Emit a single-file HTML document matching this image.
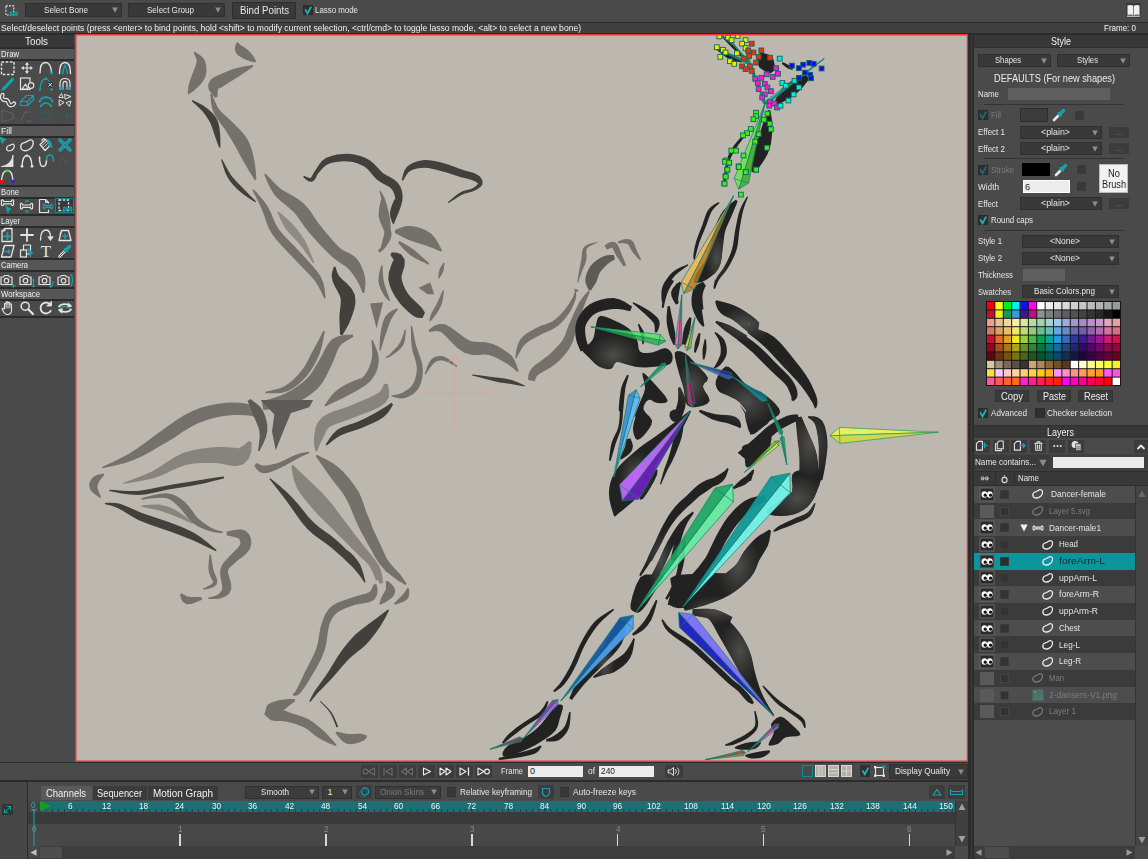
<!DOCTYPE html><html><head><meta charset="utf-8"><title>Moho</title><style>
*{box-sizing:border-box;margin:0;padding:0}
html,body{width:1148px;height:859px;overflow:hidden;background:#4a4a4a}
body{position:relative;font-family:"Liberation Sans",sans-serif;font-size:9px;color:#e6e6e6;line-height:1}
.a{position:absolute}
.t{position:absolute;white-space:nowrap;line-height:1}
.dd{position:absolute;background:#393939;border:1px solid #2f2f2f;color:#e6e6e6;text-align:center}
.dd i{position:absolute;right:5px;top:50%;margin-top:-3px;width:0;height:0;border-left:3.5px solid transparent;border-right:3.5px solid transparent;border-top:7px solid #9a9a9a}
.hd{position:absolute;background:#383838;text-align:center;color:#e8e8e8}
.sec{position:absolute;left:0;width:74px;height:10px;background:#575757;color:#eee;font-size:9px;padding-left:1px;line-height:10px;border-top:0}
.cb{position:absolute;width:10px;height:10px;background:#333;border:1px solid #2a2a2a}
.sq{position:absolute;width:9px;height:9px;background:#3a3a3a}
.btn{position:absolute;background:#3a3a3a;border:1px solid #333;color:#e6e6e6;text-align:center}
svg{position:absolute;overflow:visible}
</style></head><body>
<div class="a" style="left:0px;top:0px;width:1148px;height:22px;background:#4a4a4a;"></div><div class="a" style="left:0px;top:22px;width:1148px;height:1px;background:#2b2b2b;"></div><div class="a" style="left:0px;top:23px;width:1148px;height:10px;background:#404040;"></div><div class="a" style="left:0px;top:33px;width:1148px;height:2px;background:#2b2b2b;"></div><svg style="left:5px;top:5px;" width="14" height="12.25" viewBox="0 0 16 14"><rect x="1" y="1" width="9" height="10.5" fill="none" stroke="#e4e4e4" stroke-width="1.2" stroke-dasharray="2.2 1.4"/><path d="M7.6 9.2C7.6 7.3 5.2 7.7 6.2 10C5.2 12.3 7.6 12.7 7.6 10.8H12.4C12.4 12.7 14.8 12.3 13.8 10C14.8 7.7 12.4 7.3 12.4 9.2Z" fill="#4a4a4a" stroke="#16a2aa" stroke-width="1.2" stroke-linecap="round" stroke-linejoin="round" /></svg><div class="a" style="left:25px;top:3px;width:97px;height:14px;background:#393939;border:1px solid #303030;"></div><div class="t" style="left:44.00px;top:4.50px;height:11px;line-height:11px;font-size:9px;color:#e6e6e6;transform:scaleX(0.9066);transform-origin:0 0;">Select Bone</div><svg style="left:111.5px;top:7px;" width="6" height="6" viewBox="0 0 6 6"><path d="M0.2 0.4H5.8L3 5.8Z" fill="#8e8e8e"/></svg><div class="a" style="left:128px;top:3px;width:97px;height:14px;background:#393939;border:1px solid #303030;"></div><div class="t" style="left:146.50px;top:4.50px;height:11px;line-height:11px;font-size:9px;color:#e6e6e6;transform:scaleX(0.8948);transform-origin:0 0;">Select Group</div><svg style="left:214.5px;top:7px;" width="6" height="6" viewBox="0 0 6 6"><path d="M0.2 0.4H5.8L3 5.8Z" fill="#8e8e8e"/></svg><div class="a" style="left:232px;top:2px;width:64px;height:17px;background:#3a3a3a;border:1px solid #2e2e2e;"></div><div class="t" style="left:239.50px;top:4.00px;height:13px;line-height:13px;font-size:11px;color:#e6e6e6;transform:scaleX(0.8806);transform-origin:0 0;">Bind Points</div><div class="a" style="left:303px;top:5px;width:10px;height:10px;background:#303030;border:1px solid #2a2a2a;"></div><svg style="left:303px;top:5px;" width="10" height="10" viewBox="0 0 10 10"><path d="M2.2 4.4L4.5 8.4L8.2 1.6" fill="none" stroke="#19b4be" stroke-width="1.8"/></svg><div class="t" style="left:315.00px;top:5.00px;height:11px;line-height:11px;font-size:9px;color:#e6e6e6;transform:scaleX(0.8771);transform-origin:0 0;">Lasso mode</div><svg style="left:1126px;top:3px;" width="15" height="15" viewBox="0 0 15 15"><rect x="0" y="0" width="15" height="15" fill="#3a3a3a"/><path d="M1.5 2.5C3.5 1.8 5.5 1.8 7.2 2.8V12.2C5.5 11.3 3.5 11.3 1.5 12ZM13.5 2.5C11.5 1.8 9.5 1.8 7.8 2.8V12.2C9.5 11.3 11.5 11.3 13.5 12Z" fill="#f0f0f0"/><path d="M1 13.2H14" stroke="#f0f0f0" stroke-width="1"/></svg><div class="t" style="left:1.00px;top:22.50px;height:11px;line-height:11px;font-size:9px;color:#f0f0f0;transform:scaleX(0.9519);transform-origin:0 0;">Select/deselect points (press &lt;enter&gt; to bind points, hold &lt;shift&gt; to modify current selection, &lt;ctrl/cmd&gt; to toggle lasso mode, &lt;alt&gt; to select a new bone)</div><div class="t" style="left:1104.00px;top:22.50px;height:11px;line-height:11px;font-size:9px;color:#f0f0f0;transform:scaleX(0.8888);transform-origin:0 0;">Frame: 0</div>
<div class="a" style="left:0px;top:35px;width:74px;height:728px;background:#4a4a4a;"></div><div class="a" style="left:0px;top:35px;width:74px;height:12px;background:#383838;"></div><div class="t" style="left:25.00px;top:35.00px;height:13px;line-height:13px;font-size:11px;color:#f0f0f0;transform:scaleX(0.8957);transform-origin:0 0;">Tools</div><div class="a" style="left:0px;top:47px;width:74px;height:2px;background:#2b2b2b;"></div><div class="a" style="left:0px;top:49px;width:74px;height:10px;background:#565656;"></div><div class="a" style="left:0px;top:59px;width:74px;height:2px;background:#2b2b2b;"></div><div class="t" style="left:1.00px;top:48.50px;height:11px;line-height:11px;font-size:9px;color:#f0f0f0;transform:scaleX(0.8571);transform-origin:0 0;">Draw</div><div class="a" style="left:0px;top:124px;width:74px;height:2px;background:#2b2b2b;"></div><div class="a" style="left:0px;top:126px;width:74px;height:10px;background:#565656;"></div><div class="a" style="left:0px;top:136px;width:74px;height:2px;background:#2b2b2b;"></div><div class="t" style="left:1.00px;top:125.50px;height:11px;line-height:11px;font-size:9px;color:#f0f0f0;transform:scaleX(0.9568);transform-origin:0 0;">Fill</div><div class="a" style="left:0px;top:185px;width:74px;height:2px;background:#2b2b2b;"></div><div class="a" style="left:0px;top:187px;width:74px;height:10px;background:#565656;"></div><div class="a" style="left:0px;top:197px;width:74px;height:2px;background:#2b2b2b;"></div><div class="t" style="left:1.00px;top:186.50px;height:11px;line-height:11px;font-size:9px;color:#f0f0f0;transform:scaleX(0.8564);transform-origin:0 0;">Bone</div><div class="a" style="left:55px;top:198px;width:19px;height:15px;background:#3a3a3a;border:1px solid #12868d;"></div><div class="a" style="left:0px;top:214px;width:74px;height:2px;background:#2b2b2b;"></div><div class="a" style="left:0px;top:216px;width:74px;height:10px;background:#565656;"></div><div class="a" style="left:0px;top:226px;width:74px;height:2px;background:#2b2b2b;"></div><div class="t" style="left:1.00px;top:215.50px;height:11px;line-height:11px;font-size:9px;color:#f0f0f0;transform:scaleX(0.8440);transform-origin:0 0;">Layer</div><div class="a" style="left:0px;top:258px;width:74px;height:2px;background:#2b2b2b;"></div><div class="a" style="left:0px;top:260px;width:74px;height:10px;background:#565656;"></div><div class="a" style="left:0px;top:270px;width:74px;height:2px;background:#2b2b2b;"></div><div class="t" style="left:1.00px;top:259.50px;height:11px;line-height:11px;font-size:9px;color:#f0f0f0;transform:scaleX(0.8435);transform-origin:0 0;">Camera</div><div class="a" style="left:0px;top:287px;width:74px;height:2px;background:#2b2b2b;"></div><div class="a" style="left:0px;top:289px;width:74px;height:10px;background:#565656;"></div><div class="a" style="left:0px;top:299px;width:74px;height:2px;background:#2b2b2b;"></div><div class="t" style="left:1.00px;top:288.50px;height:11px;line-height:11px;font-size:9px;color:#f0f0f0;transform:scaleX(0.8696);transform-origin:0 0;">Workspace</div><div class="a" style="left:0px;top:316px;width:74px;height:2px;background:#2b2b2b;"></div><svg style="left:0px;top:60px;" width="16" height="16" viewBox="0 0 16 16"><rect x="1.5" y="2" width="12.5" height="12.5" fill="none" stroke="#e4e4e4" stroke-width="1.4" stroke-dasharray="2.6 1.6"/></svg><svg style="left:19px;top:60px;" width="16" height="16" viewBox="0 0 16 16"><path d="M8 3V13M3 8H13" fill="none" stroke="#e4e4e4" stroke-width="1.2" stroke-linecap="round" stroke-linejoin="round" /><path d="M6.8 4.2L8 2.8L9.2 4.2ZM6.8 11.8L8 13.2L9.2 11.8ZM4.2 6.8L2.8 8L4.2 9.2ZM11.8 6.8L13.2 8L11.8 9.2Z" fill="#e4e4e4" stroke="#e4e4e4" stroke-width="0.8" stroke-linecap="round" stroke-linejoin="round" /></svg><svg style="left:38px;top:60px;" width="16" height="16" viewBox="0 0 16 16"><path d="M2 13C2 5 4.5 2.5 7.5 2.5C10.5 2.5 13 5 13.5 12.5" fill="none" stroke="#e4e4e4" stroke-width="1.3" stroke-linecap="round" stroke-linejoin="round" /><circle cx="13.5" cy="13" r="1.6" fill="#16a2aa" stroke="none" stroke-width="1"/></svg><svg style="left:57px;top:60px;" width="16" height="16" viewBox="0 0 16 16"><path d="M2.5 13.5C2.5 6 4.5 2.5 8 2.5C11.5 2.5 13.5 6 13.5 13.5" fill="none" stroke="#e4e4e4" stroke-width="1.4" stroke-linecap="round" stroke-linejoin="round" /><path d="M5.5 13.5C6.5 9 7.2 6.5 8 5C8.8 6.5 9.5 9 10.5 13.5" fill="none" stroke="#16a2aa" stroke-width="1.4" stroke-linecap="round" stroke-linejoin="round" /></svg><svg style="left:0px;top:76px;" width="16" height="16" viewBox="0 0 16 16"><path d="M4 12.5L12.5 3.5" fill="none" stroke="#16a2aa" stroke-width="3.2" stroke-linecap="round" stroke-linejoin="round" stroke-linecap="butt"/><path d="M1.5 14.5L4.5 13L3 11.5Z" fill="#16a2aa" stroke="#16a2aa" stroke-width="0.6" stroke-linecap="round" stroke-linejoin="round" /></svg><svg style="left:19px;top:76px;" width="16" height="16" viewBox="0 0 16 16"><rect x="1.5" y="2" width="9.5" height="11.5" fill="none" stroke="#e4e4e4" stroke-width="1.2" /><path d="M3 13L6.5 8L9 13Z" fill="none" stroke="#e4e4e4" stroke-width="1.1" stroke-linecap="round" stroke-linejoin="round" /><circle cx="12" cy="9.5" r="2.8" fill="#4a4a4a" stroke="#e4e4e4" stroke-width="1.2"/></svg><svg style="left:38px;top:76px;" width="16" height="16" viewBox="0 0 16 16"><path d="M2 13C2.5 7 4 3 8 2.5" fill="none" stroke="#16a2aa" stroke-width="1.3" stroke-linecap="round" stroke-linejoin="round" /><path d="M8 2.5C10 3 11 5 11.5 7" fill="none" stroke="#16a2aa" stroke-width="1.1" stroke-linecap="round" stroke-linejoin="round" stroke-dasharray="1.5 1.5"/><circle cx="2" cy="13.5" r="1.3" fill="#16a2aa" stroke="none" stroke-width="1"/><circle cx="8" cy="2.8" r="1.3" fill="#16a2aa" stroke="none" stroke-width="1"/><circle cx="13.5" cy="13.5" r="1.3" fill="#16a2aa" stroke="none" stroke-width="1"/><rect x="9.5" y="6" width="5.5" height="5.5" fill="#333" stroke="none" stroke-width="1.2" /><path d="M10.7 7.2L13.8 10.3M13.8 7.2L10.7 10.3" fill="none" stroke="#e4e4e4" stroke-width="1" stroke-linecap="round" stroke-linejoin="round" /></svg><svg style="left:57px;top:76px;" width="16" height="16" viewBox="0 0 16 16"><path d="M3 13V7.5C3 4.5 5 2.5 8 2.5C11 2.5 13 4.5 13 7.5V13M6 13V7.5C6 6 7 5.3 8 5.3C9 5.3 10 6 10 7.5V13" fill="none" stroke="#e4e4e4" stroke-width="1.2" stroke-linecap="round" stroke-linejoin="round" /><rect x="2.2" y="11" width="4.2" height="3" fill="#16a2aa" stroke="none" stroke-width="1.2" /><rect x="9.6" y="11" width="4.2" height="3" fill="#16a2aa" stroke="none" stroke-width="1.2" /></svg><svg style="left:0px;top:92px;" width="16" height="16" viewBox="0 0 16 16"><path d="M2.5 3C1 6 3 8.5 5.5 8C8 7.5 8 10 9 12C10 14 13 13.5 14 11.5" fill="none" stroke="#e4e4e4" stroke-width="4.2" stroke-linecap="round" stroke-linejoin="round" /><path d="M2.5 3C1 6 3 8.5 5.5 8C8 7.5 8 10 9 12C10 14 13 13.5 14 11.5" fill="none" stroke="#4a4a4a" stroke-width="1.8" stroke-linecap="round" stroke-linejoin="round" /></svg><svg style="left:19px;top:92px;" width="16" height="16" viewBox="0 0 16 16"><path d="M1.5 9.5L7.5 3.5H14.5L8.5 9.5ZM1.5 9.5V13.5H8.5V9.5M8.5 13.5L14.5 7.5V3.5" fill="none" stroke="#16a2aa" stroke-width="1.2" stroke-linecap="round" stroke-linejoin="round" /></svg><svg style="left:38px;top:92px;" width="16" height="16" viewBox="0 0 16 16"><path d="M1.5 9C4 4 12 4 14.5 9M3 14C5.5 10 10.5 10 13 14" fill="none" stroke="#16a2aa" stroke-width="1.3" stroke-linecap="round" stroke-linejoin="round" /><circle cx="1.8" cy="9.3" r="1.2" fill="#16a2aa" stroke="none" stroke-width="1"/><circle cx="8" cy="5.3" r="1.2" fill="#16a2aa" stroke="none" stroke-width="1"/><circle cx="14.2" cy="9.3" r="1.2" fill="#16a2aa" stroke="none" stroke-width="1"/><circle cx="4.5" cy="6.3" r="1" fill="#16a2aa" stroke="none" stroke-width="1"/><circle cx="11.5" cy="6.3" r="1" fill="#16a2aa" stroke="none" stroke-width="1"/><circle cx="3" cy="14" r="1.2" fill="#16a2aa" stroke="none" stroke-width="1"/><circle cx="13" cy="14" r="1.2" fill="#16a2aa" stroke="none" stroke-width="1"/></svg><svg style="left:57px;top:92px;" width="16" height="16" viewBox="0 0 16 16"><path d="M2 5L4.5 1.5L6 5.5ZM8 2.5L14 4.5L8.5 7ZM2.5 8L7 10.5L2.5 13.5ZM9.5 10.5L14 9L12.5 14Z" fill="none" stroke="#e4e4e4" stroke-width="1" stroke-linecap="round" stroke-linejoin="round" /></svg><svg style="left:0px;top:108px;" width="16" height="16" viewBox="0 0 16 16"><path d="M2 2.5L13 5.5V11L2 14Z" fill="none" stroke="#5e5e5e" stroke-width="1.2" stroke-linecap="round" stroke-linejoin="round" /></svg><svg style="left:19px;top:108px;" width="16" height="16" viewBox="0 0 16 16"><path d="M2 13L6 4H12M8 13H12" fill="none" stroke="#5e5e5e" stroke-width="1.2" stroke-linecap="round" stroke-linejoin="round" /><circle cx="13" cy="8" r="1" fill="#2d6064" stroke="none" stroke-width="1"/></svg><svg style="left:38px;top:108px;" width="16" height="16" viewBox="0 0 16 16"><path d="M2 9C2 6 5 5 8 5C11 5 14 6 14 9C14 11 11 12 8 12C5 12 2 11 2 9Z" fill="none" stroke="#2d6064" stroke-width="1.2" stroke-linecap="round" stroke-linejoin="round" /></svg><svg style="left:57px;top:108px;" width="16" height="16" viewBox="0 0 16 16"><path d="M1.5 8H14.5M10 4V12" fill="none" stroke="#2d6064" stroke-width="1.1" stroke-linecap="round" stroke-linejoin="round" /></svg><svg style="left:0px;top:137px;" width="16" height="16" viewBox="0 0 16 16"><path d="M0 0L6 2.5L3.8 3.8L2.5 6Z" fill="#16a2aa" stroke="#16a2aa" stroke-width="1" stroke-linecap="round" stroke-linejoin="round" /><path d="M7 10C7.5 8 9.5 9 11.5 7.5C13.5 6.5 15 8 14 10.5C13 13.5 9.5 14.5 7.5 13.5C6.3 12.8 6.5 11.3 7 10Z" fill="none" stroke="#e4e4e4" stroke-width="1.2" stroke-linecap="round" stroke-linejoin="round" /></svg><svg style="left:19px;top:137px;" width="16" height="16" viewBox="0 0 16 16"><path d="M2 8C3 4.5 6 6.5 9 4C12 1.5 15 3.5 14 7.5C13 12 8 14.5 4.5 13.5C1.8 12.7 1.5 10 2 8Z" fill="none" stroke="#e4e4e4" stroke-width="1.3" stroke-linecap="round" stroke-linejoin="round" /></svg><svg style="left:38px;top:137px;" width="16" height="16" viewBox="0 0 16 16"><path d="M2 7.5L7.5 2.5L12.5 8L7 13.5ZM4 3.5C4 1.5 6.5 1 7 3" fill="none" stroke="#e4e4e4" stroke-width="1.2" stroke-linecap="round" stroke-linejoin="round" /><path d="M3.5 9L9 4M5 11L10.5 5.5" fill="none" stroke="#e4e4e4" stroke-width="0.8" stroke-linecap="round" stroke-linejoin="round" /><path d="M9 2.5C12 3 14 6 14 11C13 9.5 12 9 11 9Z" fill="#16a2aa" stroke="#16a2aa" stroke-width="0.8" stroke-linecap="round" stroke-linejoin="round" /></svg><svg style="left:57px;top:137px;" width="16" height="16" viewBox="0 0 16 16"><path d="M3 3L13 13M13 3L3 13" fill="none" stroke="#16a2aa" stroke-width="3.6" stroke-linecap="round" stroke-linejoin="round" stroke-linecap="butt"/><path d="M3.5 3.5L12.5 12.5M12.5 3.5L3.5 12.5" fill="none" stroke="#3f6b6e" stroke-width="0.8" stroke-linecap="round" stroke-linejoin="round" stroke-linecap="butt"/></svg><svg style="left:0px;top:153px;" width="16" height="16" viewBox="0 0 16 16"><path d="M1.5 13.5H13V2C12 8 8 12.5 1.5 13.5Z" fill="#e4e4e4" stroke="#e4e4e4" stroke-width="0.8" stroke-linecap="round" stroke-linejoin="round" /></svg><svg style="left:19px;top:153px;" width="16" height="16" viewBox="0 0 16 16"><path d="M3 13C3.5 6 5 2.5 8 2.5C11 2.5 12.5 6 13 13" fill="none" stroke="#e4e4e4" stroke-width="1.4" stroke-linecap="round" stroke-linejoin="round" /><circle cx="3" cy="13.3" r="1.4" fill="#e4e4e4" stroke="none" stroke-width="1"/><circle cx="13" cy="13.3" r="1.4" fill="#e4e4e4" stroke="none" stroke-width="1"/><circle cx="8" cy="2.6" r="1.2" fill="#e4e4e4" stroke="none" stroke-width="1"/></svg><svg style="left:38px;top:153px;" width="16" height="16" viewBox="0 0 16 16"><path d="M1.5 4C1.5 10 2.5 13.5 5 13.5C7.5 13.5 8.5 10 8.5 7" fill="none" stroke="#e4e4e4" stroke-width="1.5" stroke-linecap="round" stroke-linejoin="round" /><path d="M8.5 7C8.5 4 10 2 12 2C14.5 2 15.5 5 15.5 8" fill="none" stroke="#16a2aa" stroke-width="1.5" stroke-linecap="round" stroke-linejoin="round" /></svg><svg style="left:57px;top:153px;" width="16" height="16" viewBox="0 0 16 16"><path d="M3 12L6 4L9 11L12 5" fill="none" stroke="#41595a" stroke-width="1.1" stroke-linecap="round" stroke-linejoin="round" /></svg><svg style="left:0px;top:168px;" width="16" height="16" viewBox="0 0 16 16"><path d="M1.5 13C2 6 4 2.5 7.5 2.5C11 2.5 12.5 6 13 13" fill="none" stroke="#e4e4e4" stroke-width="1.3" stroke-linecap="round" stroke-linejoin="round" /><rect x="0" y="12" width="3" height="3" fill="#f01010" stroke="none" stroke-width="1.2" /><circle cx="7.5" cy="2.6" r="1.6" fill="#10e030" stroke="none" stroke-width="1"/><circle cx="13" cy="13.3" r="1.6" fill="#2020f0" stroke="none" stroke-width="1"/></svg><svg style="left:0px;top:197.5px;" width="16" height="16" viewBox="0 0 16 16"><path d="M3.6 6C3.6 3.4 0.2 4 1.7 7.2C0.2 10.4 3.6 11 3.6 8.4H11.4C11.4 11 14.8 10.4 13.3 7.2C14.8 4 11.4 3.4 11.4 6Z" fill="none" stroke="#e4e4e4" stroke-width="1.2" stroke-linecap="round" stroke-linejoin="round" transform="translate(0,-2.5)"/><path d="M6 8L11 11.5L8.8 12L8 14.5Z" fill="#16a2aa" stroke="#16a2aa" stroke-width="1" stroke-linecap="round" stroke-linejoin="round" /></svg><svg style="left:19px;top:197.5px;" width="16" height="16" viewBox="0 0 16 16"><path d="M3.6 6C3.6 3.4 0.2 4 1.7 7.2C0.2 10.4 3.6 11 3.6 8.4H11.4C11.4 11 14.8 10.4 13.3 7.2C14.8 4 11.4 3.4 11.4 6Z" fill="none" stroke="#e4e4e4" stroke-width="1.2" stroke-linecap="round" stroke-linejoin="round" transform="translate(0,1)"/><path d="M6.2 3.5L8 1.5L9.8 3.5ZM6.2 13L8 15L9.8 13Z" fill="#16a2aa" stroke="#16a2aa" stroke-width="0.6" stroke-linecap="round" stroke-linejoin="round" /></svg><svg style="left:38px;top:197.5px;" width="16" height="16" viewBox="0 0 16 16"><path d="M1.5 14.5V1.5H7.5L10.5 4.5V5M1.5 14.5H10.5V12" fill="none" stroke="#e4e4e4" stroke-width="1.2" stroke-linecap="round" stroke-linejoin="round" /><path d="M7.5 1.5V4.5H10.5" fill="none" stroke="#e4e4e4" stroke-width="1" stroke-linecap="round" stroke-linejoin="round" /><path d="M7 7.6C7 5.6 4.4 6 5.5 8.5C4.4 11 7 11.4 7 9.4H12.6C12.6 11.4 15.2 11 14.1 8.5C15.2 6 12.6 5.6 12.6 7.6Z" fill="none" stroke="#16a2aa" stroke-width="1.2" stroke-linecap="round" stroke-linejoin="round" /></svg><svg style="left:57px;top:197.5px;" width="16" height="16" viewBox="0 0 16 16"><rect x="2" y="2" width="9.5" height="10.5" fill="none" stroke="#e4e4e4" stroke-width="1.3" stroke-dasharray="2.4 1.5"/><path d="M8.4 10.2C8.4 8.3 6 8.7 7 11C6 13.3 8.4 13.7 8.4 11.8H13.2C13.2 13.7 15.6 13.3 14.6 11C15.6 8.7 13.2 8.3 13.2 10.2Z" fill="#3a3a3a" stroke="#16a2aa" stroke-width="1.2" stroke-linecap="round" stroke-linejoin="round" /></svg><svg style="left:0px;top:226.5px;" width="16" height="16" viewBox="0 0 16 16"><path d="M2 14.5V4L5 1.5H12V14.5Z" fill="none" stroke="#e4e4e4" stroke-width="1.3" stroke-linecap="round" stroke-linejoin="round" /><path d="M5 1.5V4H2" fill="none" stroke="#e4e4e4" stroke-width="1" stroke-linecap="round" stroke-linejoin="round" /><path d="M7.5 5.5V13M4 9.3H11" fill="none" stroke="#16a2aa" stroke-width="1.8" stroke-linecap="round" stroke-linejoin="round" /></svg><svg style="left:19px;top:226.5px;" width="16" height="16" viewBox="0 0 16 16"><path d="M8 2V14M2 8H14" fill="none" stroke="#e4e4e4" stroke-width="1.8" stroke-linecap="round" stroke-linejoin="round" /></svg><svg style="left:38px;top:226.5px;" width="16" height="16" viewBox="0 0 16 16"><path d="M2.5 13C2.5 6 4.5 3 8 3C11 3 12.5 6 12.5 10.5" fill="none" stroke="#e4e4e4" stroke-width="1.3" stroke-linecap="round" stroke-linejoin="round" /><path d="M10 10L12.5 13.5L15 10Z" fill="#e4e4e4" stroke="#e4e4e4" stroke-width="0.8" stroke-linecap="round" stroke-linejoin="round" /></svg><svg style="left:57px;top:226.5px;" width="16" height="16" viewBox="0 0 16 16"><path d="M2 13.5L4.5 3.5H11.5L14 13.5Z" fill="none" stroke="#e4e4e4" stroke-width="1.3" stroke-linecap="round" stroke-linejoin="round" /><path d="M4.5 3.5C4 6 3.5 6.5 2.8 6.8" fill="none" stroke="#e4e4e4" stroke-width="1" stroke-linecap="round" stroke-linejoin="round" /><path d="M8 7V11.5M5.8 9.3H10.2" fill="none" stroke="#16a2aa" stroke-width="1.6" stroke-linecap="round" stroke-linejoin="round" /></svg><svg style="left:0px;top:242.5px;" width="16" height="16" viewBox="0 0 16 16"><path d="M1.5 14L4.5 2.5H14L11 14Z" fill="none" stroke="#e4e4e4" stroke-width="1.3" stroke-linecap="round" stroke-linejoin="round" /><path d="M4.5 2.5C4.3 4.5 3.5 5.3 2.8 5.5" fill="none" stroke="#e4e4e4" stroke-width="1" stroke-linecap="round" stroke-linejoin="round" /><path d="M4.5 8.5H10M8.3 6.8L10.2 8.5L8.3 10.2" fill="none" stroke="#16a2aa" stroke-width="1.3" stroke-linecap="round" stroke-linejoin="round" /></svg><svg style="left:19px;top:242.5px;" width="16" height="16" viewBox="0 0 16 16"><rect x="1.5" y="7" width="6" height="7" fill="none" stroke="#e4e4e4" stroke-width="1.2" /><path d="M4.5 7V2H11.5V11H7.5" fill="none" stroke="#e4e4e4" stroke-width="1.2" stroke-linecap="round" stroke-linejoin="round" /><path d="M9 5.5L14 10L11.8 10.5L11.5 13.5Z" fill="#16a2aa" stroke="#16a2aa" stroke-width="0.8" stroke-linecap="round" stroke-linejoin="round" /></svg><svg style="left:38px;top:242.5px;" width="16" height="16" viewBox="0 0 16 16"><text x="8" y="14.2" font-family="Liberation Serif,serif" font-size="17" text-anchor="middle" fill="#e4e4e4">T</text></svg><svg style="left:57px;top:242.5px;" width="16" height="16" viewBox="0 0 16 16"><path d="M2.5 13.5L9 7" fill="none" stroke="#e4e4e4" stroke-width="2.6" stroke-linecap="round" stroke-linejoin="round" /><path d="M2.5 13.5L9 7" fill="none" stroke="#4a4a4a" stroke-width="0.9" stroke-linecap="round" stroke-linejoin="round" /><path d="M8.5 7.5L12.5 3.5" fill="none" stroke="#16a2aa" stroke-width="3.4" stroke-linecap="round" stroke-linejoin="round" /><path d="M7.5 5.5L10.5 8.5" fill="none" stroke="#16a2aa" stroke-width="1.6" stroke-linecap="round" stroke-linejoin="round" /></svg><svg style="left:0px;top:271.5px;" width="16" height="16" viewBox="0 0 16 16"><path d="M1 5H3.5L4.5 3.5H8.5L9.5 5H12V12.5H1Z" fill="none" stroke="#e4e4e4" stroke-width="1.2" stroke-linecap="round" stroke-linejoin="round" /><circle cx="6.5" cy="8.7" r="2.3" fill="none" stroke="#e4e4e4" stroke-width="1.2"/><path d="M11.5 14H15.5M13.5 12.5V15.5" fill="none" stroke="#16a2aa" stroke-width="1.1" stroke-linecap="round" stroke-linejoin="round" /></svg><svg style="left:19px;top:271.5px;" width="16" height="16" viewBox="0 0 16 16"><path d="M1 5H3.5L4.5 3.5H8.5L9.5 5H12V12.5H1Z" fill="none" stroke="#e4e4e4" stroke-width="1.2" stroke-linecap="round" stroke-linejoin="round" /><circle cx="6.5" cy="8.7" r="2.3" fill="none" stroke="#e4e4e4" stroke-width="1.2"/><path d="M14.5 7V15M13.2 8.5L14.5 7L15.8 8.5M13.2 13.5L14.5 15L15.8 13.5" fill="none" stroke="#16a2aa" stroke-width="1" stroke-linecap="round" stroke-linejoin="round" /></svg><svg style="left:38px;top:271.5px;" width="16" height="16" viewBox="0 0 16 16"><path d="M1 5H3.5L4.5 3.5H8.5L9.5 5H12V12.5H1Z" fill="none" stroke="#e4e4e4" stroke-width="1.2" stroke-linecap="round" stroke-linejoin="round" /><circle cx="6.5" cy="8.7" r="2.3" fill="none" stroke="#e4e4e4" stroke-width="1.2"/><path d="M15 9.5C15 12.5 14 14 12 15M12 15L12.3 13.3M12 15L13.7 15" fill="none" stroke="#16a2aa" stroke-width="1.1" stroke-linecap="round" stroke-linejoin="round" /></svg><svg style="left:57px;top:271.5px;" width="16" height="16" viewBox="0 0 16 16"><path d="M1 5H3.5L4.5 3.5H8.5L9.5 5H12V12.5H1Z" fill="none" stroke="#e4e4e4" stroke-width="1.2" stroke-linecap="round" stroke-linejoin="round" /><circle cx="6.5" cy="8.7" r="2.3" fill="none" stroke="#e4e4e4" stroke-width="1.2"/><path d="M14 2.5C16 5.5 16 10.5 14 14" fill="none" stroke="#16a2aa" stroke-width="1.3" stroke-linecap="round" stroke-linejoin="round" /></svg><svg style="left:0px;top:300px;" width="16" height="16" viewBox="0 0 16 16"><path d="M4.5 9V4.2C4.5 3 6.2 3 6.2 4.2V2.8C6.2 1.6 8 1.6 8 2.8V3.2C8 2 9.8 2 9.8 3.2V4.5C9.8 3.5 11.5 3.5 11.5 4.8V10C11.5 13 10 14.5 7.5 14.5C5 14.5 4 13 2.5 10C1.6 8.2 3.2 7.6 4.5 9Z" fill="none" stroke="#e4e4e4" stroke-width="1.1" stroke-linecap="round" stroke-linejoin="round" /><path d="M6.2 4.2V8M8 3.2V8M9.8 4.5V8" fill="none" stroke="#e4e4e4" stroke-width="0.9" stroke-linecap="round" stroke-linejoin="round" /></svg><svg style="left:19px;top:300px;" width="16" height="16" viewBox="0 0 16 16"><circle cx="6.2" cy="6.2" r="4" fill="none" stroke="#e4e4e4" stroke-width="1.5"/><path d="M9.2 9.2L14 14" fill="none" stroke="#e4e4e4" stroke-width="2.2" stroke-linecap="round" stroke-linejoin="round" /></svg><svg style="left:38px;top:300px;" width="16" height="16" viewBox="0 0 16 16"><path d="M12.5 5C11 2.5 7.5 1.8 5 3.5C2 5.5 1.8 10 4.5 12.3C7 14.3 11 13.8 12.8 10.8" fill="none" stroke="#e4e4e4" stroke-width="1.8" stroke-linecap="round" stroke-linejoin="round" /><path d="M13.5 1.5V6H9Z" fill="#e4e4e4" stroke="#e4e4e4" stroke-width="0.8" stroke-linecap="round" stroke-linejoin="round" /></svg><svg style="left:57px;top:300px;" width="16" height="16" viewBox="0 0 16 16"><path d="M2 6.5C4 3.5 10 3.5 13 5.5M14 9.5C12 12.5 6 12.5 3 10.5" fill="none" stroke="#e4e4e4" stroke-width="1.8" stroke-linecap="round" stroke-linejoin="round" /><path d="M11.5 3L14.8 6.2L10.8 7.5ZM4.5 13L1.2 9.8L5.2 8.5Z" fill="#e4e4e4" stroke="#e4e4e4" stroke-width="0.6" stroke-linecap="round" stroke-linejoin="round" /><path d="M3 7.5C6 6 10 6 13 8.5" fill="none" stroke="#16a2aa" stroke-width="1.1" stroke-linecap="round" stroke-linejoin="round" /></svg>
<div class="a" style="left:75px;top:34px;width:893px;height:728px;background:#bcb7af;"></div><svg style="left:0;top:0" width="1148" height="859" viewBox="0 0 1148 859"><defs><clipPath id="cv"><rect x="76" y="35" width="891" height="726"/></clipPath><radialGradient id="hl"><stop offset="0" stop-color="#4c4c4b"/><stop offset="0.55" stop-color="#343433"/><stop offset="1" stop-color="#222222"/></radialGradient></defs><g clip-path="url(#cv)"><rect x="76" y="35" width="891" height="726" fill="#bcb7af"/><path fill="#74716c" d="M194.5 51.6L196.3 52.8L199.1 54.4L202.1 56.8L204.6 60.1L205.9 64.1L206.4 68.2L206.4 72.4L205.5 76.4L203.7 80.3L201.3 83.6L198.8 86.2L196.5 88.3L194.4 90.2L192.2 91.9L190.2 93.3L188.8 94.2L187.8 93.7L187.9 92.0L188.1 89.6L188.4 86.8L189.0 83.9L190.0 80.7L191.2 77.5L192.2 74.6L193.1 72.2L194.0 69.7L195.1 66.9L196.0 64.4L196.6 62.3L196.6 60.1L195.7 57.2L194.5 54.4L193.6 52.4Z M237.9 42.2L238.9 43.4L240.4 44.9L242.0 46.1L243.1 46.6L244.3 47.3L246.2 48.7L248.3 50.5L250.4 52.4L252.1 54.6L253.8 57.1L255.2 59.4L256.1 61.0L255.1 62.4L253.3 62.0L250.7 61.4L247.8 60.5L245.2 59.5L242.8 58.3L240.3 56.8L237.7 54.9L235.6 52.2L234.8 48.9L235.2 46.0L236.1 43.9L236.7 42.4Z M253.3 66.7L251.0 68.3L247.7 70.5L243.9 73.0L240.3 75.4L236.6 77.8L232.7 80.2L229.0 82.6L225.7 84.7L222.7 86.5L220.4 87.9L219.5 88.5L219.3 87.8L218.5 88.2L217.8 91.1L217.6 94.5L217.4 97.0L215.2 97.7L213.6 95.9L211.1 93.2L208.7 89.4L208.1 84.4L210.6 79.8L213.8 77.3L217.0 75.8L220.1 74.4L223.8 72.7L228.1 70.9L232.6 69.3L236.9 67.9L241.4 66.9L245.9 66.1L249.9 65.5L252.7 65.1Z M211.9 93.7L213.1 96.7L214.7 101.0L216.8 105.5L219.2 109.4L222.1 112.7L225.7 116.1L229.6 119.6L233.5 123.3L237.1 126.9L240.7 130.5L244.2 134.4L247.3 138.9L249.7 143.8L251.5 148.9L252.9 153.9L254.0 158.9L255.0 164.5L255.7 170.5L256.1 175.9L256.5 179.6L254.8 180.2L252.8 177.0L250.0 172.4L246.9 167.3L244.1 162.6L241.7 158.2L239.4 153.9L237.2 149.8L235.1 145.9L232.9 142.2L230.6 138.3L228.0 134.2L225.4 130.1L222.5 126.0L219.3 121.8L216.1 117.3L213.5 112.5L211.9 107.3L211.0 102.0L210.6 97.3L210.2 94.2Z M380.6 190.7L381.6 192.5L383.0 195.0L384.6 198.3L386.0 202.2L387.3 206.8L388.7 212.3L389.9 218.0L390.6 223.5L390.6 228.8L390.2 233.9L389.3 238.7L388.1 242.9L386.2 246.5L383.8 249.3L381.5 251.3L380.0 252.8L379.1 252.1L379.8 250.2L380.7 247.4L381.7 244.3L382.5 241.1L383.4 237.3L384.3 233.0L385.0 228.4L385.3 223.7L384.9 218.7L384.0 213.2L382.9 207.8L382.0 203.2L381.3 199.3L380.6 195.9L380.0 193.1L379.5 191.1Z M265.5 173.4L268.3 176.4L272.1 180.6L276.6 185.2L281.0 189.1L285.8 192.1L291.4 195.1L297.6 198.7L303.5 203.2L308.3 208.5L312.3 214.0L315.8 219.4L319.7 224.7L324.5 230.7L329.9 237.2L335.2 243.2L339.9 248.0L343.8 250.8L347.7 252.6L352.0 254.7L356.4 258.2L359.7 262.8L362.1 267.7L363.8 272.5L365.0 277.1L365.5 281.8L365.2 286.4L364.7 290.3L364.4 292.9L362.6 293.1L361.6 290.6L360.3 287.1L358.6 283.4L356.7 280.1L354.5 276.8L352.1 273.3L349.5 270.1L347.0 267.5L344.7 265.7L341.5 263.7L337.1 260.8L332.1 256.8L326.6 251.5L320.7 245.4L314.8 239.1L309.4 233.0L304.9 227.2L301.1 221.8L297.7 216.9L294.2 212.6L290.0 208.7L285.0 204.6L279.7 200.3L274.8 195.3L271.0 189.5L268.0 183.4L265.7 178.0L264.1 174.3Z M253.6 189.2L256.2 192.1L259.8 196.2L263.9 201.1L267.7 206.4L270.6 212.1L273.0 218.0L275.5 223.8L278.7 229.2L283.1 234.6L288.5 240.2L294.3 246.1L299.9 252.0L305.4 258.0L311.1 264.2L316.5 270.4L320.7 276.6L323.4 283.0L324.7 289.2L325.2 294.4L325.7 298.0L324.3 298.4L322.7 295.2L320.6 290.5L317.8 285.5L314.6 280.6L310.3 275.6L304.9 269.9L299.1 264.0L293.5 258.0L287.9 252.2L282.2 246.3L276.6 240.1L271.9 233.8L268.3 227.2L265.9 220.8L263.9 214.8L261.9 209.4L259.4 203.9L256.6 198.3L254.1 193.4L252.4 190.0Z M384.6 197.6L384.5 200.9L384.4 205.7L384.5 210.8L385.0 215.2L386.4 219.2L388.5 223.8L390.6 228.7L391.6 233.9L390.8 238.6L388.8 242.6L386.6 245.7L384.6 248.2L382.7 249.9L380.7 250.9L379.2 251.3L378.2 251.6L377.6 250.6L378.5 249.9L379.6 249.0L380.7 247.8L381.7 246.1L382.9 243.6L384.2 240.4L385.0 237.2L385.2 234.3L384.2 230.9L382.2 226.6L380.0 221.6L378.6 216.2L378.8 210.6L379.7 205.2L380.9 200.4L381.7 197.2Z M395.0 230.0L397.5 228.9L401.2 227.4L405.9 226.1L410.8 225.9L415.8 226.7L421.0 228.2L426.2 230.5L431.0 233.6L435.1 237.9L438.2 242.9L440.5 247.5L442.1 250.6L441.1 251.6L437.8 250.2L433.3 248.3L428.5 246.4L424.3 245.0L420.4 243.8L416.1 242.5L411.7 241.1L407.8 239.6L404.4 237.9L400.7 236.0L397.3 234.2L394.9 232.9Z M399.6 241.0L402.2 242.5L405.8 244.6L409.9 247.1L413.9 249.8L418.0 253.2L422.5 257.2L426.6 261.0L429.4 263.6L428.6 264.8L425.1 263.1L420.1 260.7L414.7 257.9L410.0 255.0L406.3 251.8L402.9 248.2L400.1 245.0L398.1 242.8Z M382.6 265.6L382.7 268.5L382.9 272.7L383.2 277.1L383.7 280.9L384.4 284.1L385.5 287.4L386.6 290.6L387.6 293.4L388.4 295.7L389.1 297.7L389.7 299.4L390.2 300.5L389.2 301.2L388.3 300.3L386.9 299.1L385.4 297.4L383.9 295.2L382.4 292.5L380.7 289.3L379.3 285.6L378.4 281.5L378.6 277.1L379.4 272.4L380.4 268.3L381.1 265.4Z M444.5 263.1L444.3 264.6L444.1 266.8L443.8 269.2L443.2 271.4L442.3 273.4L441.1 275.4L440.0 277.1L439.2 278.3L438.1 277.9L438.3 276.5L438.5 274.4L438.8 272.2L439.4 270.1L440.2 268.0L441.4 265.9L442.6 264.0L443.4 262.7Z M418.5 287.8L430.3 282.5L434.2 294.3L427.7 294.3Z M444.0 290.5L443.7 293.0L443.3 296.6L442.6 300.6L441.6 304.4L440.1 307.8L438.2 311.0L436.3 313.9L434.7 316.3L433.3 318.1L432.1 319.5L431.0 320.6L430.3 321.3L429.3 320.8L429.5 319.7L429.8 318.3L430.3 316.4L431.1 314.3L432.4 311.6L434.1 308.6L435.8 305.5L437.3 302.6L438.8 299.4L440.4 295.8L441.8 292.5L442.8 290.2Z M370.0 303.5L383.1 302.2L376.6 328.4Z M398.0 309.3L396.6 311.2L394.6 313.8L392.7 316.8L391.1 319.6L389.8 322.6L388.4 326.2L387.1 330.2L385.7 334.2L384.3 338.6L382.8 343.4L381.5 347.7L380.6 350.7L379.4 350.5L379.5 347.4L379.7 342.8L380.0 337.7L380.6 333.0L381.3 328.7L382.3 324.3L383.7 320.1L385.6 316.2L388.5 313.1L391.9 310.8L395.0 309.3L397.1 308.2Z M406.0 329.8L405.7 332.5L405.4 336.5L404.7 341.0L403.3 345.1L400.7 348.5L397.5 351.3L394.3 353.7L391.7 355.5L389.7 356.7L388.1 357.5L386.8 357.8L385.9 358.1L385.6 357.3L386.3 356.8L387.4 356.1L388.7 355.2L390.3 353.7L392.5 351.5L395.1 348.8L397.7 345.9L399.7 343.1L401.3 339.9L402.8 335.9L404.0 332.2L404.8 329.6Z M428.5 329.9L430.7 328.4L433.9 326.0L438.7 324.0L445.1 324.3L451.8 327.9L458.4 332.9L464.7 337.8L469.7 340.7L474.0 341.7L479.2 342.0L485.5 342.3L492.1 343.7L498.1 346.3L503.3 349.4L507.9 352.9L511.8 356.5L514.7 360.6L516.6 364.9L517.8 368.7L518.7 371.2L517.4 372.0L515.4 370.2L512.6 367.8L509.4 365.3L506.0 363.1L502.2 361.0L497.9 358.6L493.4 356.5L489.0 355.0L484.6 354.6L479.0 355.0L472.0 354.9L464.2 352.7L457.0 347.7L450.8 341.5L445.5 335.9L441.6 332.4L438.9 331.2L435.5 331.1L432.1 331.7L429.4 332.1Z M424.5 373.9L425.6 371.2L427.0 367.1L428.9 362.8L431.3 359.4L434.1 357.3L437.2 356.2L440.5 355.9L443.9 356.5L447.7 358.4L451.6 361.2L455.0 364.0L457.3 365.9L456.7 366.9L454.0 365.4L450.2 363.4L446.1 361.5L442.9 360.5L440.5 360.4L438.4 360.8L436.4 361.6L434.5 362.8L432.2 365.1L429.6 368.5L427.2 372.1L425.6 374.5Z M324.9 331.2L324.1 335.2L323.1 340.9L321.6 347.4L319.7 353.4L317.3 359.0L314.5 364.6L311.2 370.1L307.4 375.2L303.0 380.0L298.2 384.4L293.0 388.3L287.4 391.3L281.3 392.9L274.8 393.3L269.2 393.3L265.3 393.3L265.2 391.8L268.9 391.0L274.3 389.8L280.1 388.2L285.0 386.0L289.3 383.0L293.7 379.2L297.9 375.0L301.7 370.6L304.9 366.0L307.7 360.9L310.3 355.6L313.0 350.5L315.9 345.1L318.9 339.4L321.6 334.3L323.5 330.8Z M353.3 336.8L350.3 338.6L346.1 340.9L342.1 343.7L339.5 346.5L337.8 349.8L336.0 354.3L333.9 359.8L331.4 365.5L328.7 370.9L325.9 376.7L322.4 382.7L317.7 388.5L311.8 393.6L305.4 398.1L298.5 402.0L291.4 405.2L283.6 407.4L275.4 408.7L268.3 409.4L263.5 410.0L261.7 401.3L266.5 400.0L273.1 398.0L280.1 395.7L286.3 393.0L291.8 389.9L297.5 386.2L302.8 382.2L307.1 378.3L310.6 374.2L313.6 369.6L316.6 364.5L319.6 359.4L322.4 354.4L325.0 349.2L328.1 343.8L332.4 339.0L338.2 336.2L344.2 335.1L349.2 334.8L352.7 334.6Z M372.8 340.0L374.2 343.4L376.3 348.4L378.2 354.2L378.9 360.1L378.3 365.6L376.7 370.9L374.1 376.0L370.5 380.9L365.6 385.2L359.8 388.9L353.9 392.2L348.2 395.3L342.1 398.5L335.6 401.6L329.8 404.3L325.8 406.2L325.2 405.2L328.7 402.4L333.7 398.4L339.3 394.0L344.7 389.8L350.1 386.1L355.7 382.4L360.6 378.9L364.4 375.4L367.0 371.7L369.0 367.7L370.5 363.6L371.6 359.5L372.2 354.8L372.1 349.3L371.7 344.0L371.4 340.3Z M412.0 325.7L412.8 329.4L413.8 334.8L415.0 340.7L416.3 346.2L418.0 351.3L419.9 356.5L421.7 362.0L422.7 367.5L422.8 372.9L422.2 378.3L420.9 383.3L418.9 387.8L416.1 391.5L412.5 394.4L408.8 396.5L405.1 397.9L401.0 398.4L397.1 397.9L393.8 397.1L391.5 396.6L391.5 395.4L393.8 395.0L397.1 394.4L400.4 393.6L403.1 392.4L405.7 390.8L408.5 388.9L411.0 386.7L412.8 384.2L414.4 381.0L415.7 376.9L416.6 372.4L416.9 367.9L416.2 363.3L414.8 358.2L413.0 352.8L411.8 347.2L411.2 341.3L411.0 335.1L410.9 329.6L410.8 325.8Z M515.2 358.2L515.7 354.9L516.4 350.1L517.7 344.7L520.1 339.7L523.7 335.7L528.0 332.6L532.4 330.1L536.6 327.8L540.9 325.8L545.2 324.4L548.9 323.1L552.3 321.5L555.4 319.2L558.5 316.4L561.4 313.4L564.1 310.4L566.6 307.2L569.0 303.7L571.1 300.3L572.8 297.5L573.7 295.5L574.2 293.7L574.5 292.2L574.7 291.1L575.6 291.1L575.8 292.2L576.1 293.8L576.2 296.0L575.7 298.7L574.6 302.0L573.0 305.9L571.0 309.9L568.7 313.8L566.0 317.4L563.0 320.9L559.7 324.2L556.0 327.2L552.0 329.6L547.9 331.4L544.0 333.0L540.2 334.9L536.2 337.0L532.1 339.3L528.4 341.6L525.4 343.9L522.7 347.1L520.1 351.4L517.8 355.6L516.3 358.6Z M574.2 288.5L579.0 290.3L575.1 293.2Z M528.1 379.9L528.2 378.4L528.3 375.8L529.3 372.2L531.7 368.3L535.6 364.8L540.2 361.4L544.8 358.1L548.8 354.9L552.4 351.6L555.9 348.1L559.2 344.6L562.0 341.0L564.1 337.2L565.8 332.9L567.6 328.0L569.6 322.9L572.0 317.6L574.5 312.1L577.1 306.8L579.5 302.1L582.1 298.3L584.6 295.0L586.8 292.5L588.3 290.7L589.9 291.6L589.0 293.8L587.7 296.9L586.2 300.5L584.7 304.6L582.9 309.3L580.9 314.7L578.9 320.4L577.1 325.7L575.7 330.6L574.6 335.6L573.1 340.9L570.8 346.1L567.7 351.0L564.1 355.6L560.3 359.7L556.0 363.6L551.1 367.2L545.8 370.2L541.2 372.7L538.2 374.7L536.7 376.2L535.9 377.8L535.3 379.6L534.8 381.2Z M597.9 242.6L595.5 243.6L592.1 244.9L588.8 246.7L586.8 248.5L586.3 250.5L586.4 253.2L586.6 256.6L586.3 260.1L585.3 263.4L584.1 266.5L582.8 269.5L581.7 272.3L580.6 275.2L579.6 278.1L578.8 280.7L578.2 282.5L577.3 282.3L577.6 280.4L578.0 277.7L578.5 274.6L579.0 271.6L579.6 268.5L580.2 265.3L580.8 262.2L581.4 259.3L581.7 256.4L582.0 253.0L582.6 249.6L584.4 246.5L587.6 244.4L591.5 243.2L595.2 242.5L597.7 241.9Z M604.6 245.4L606.0 244.5L608.1 243.0L611.1 241.7L614.9 242.0L617.6 244.5L619.1 247.5L620.2 250.5L621.2 253.2L622.5 256.3L623.9 259.8L625.2 263.0L626.1 265.2L623.7 266.5L622.3 264.5L620.4 261.7L618.3 258.6L616.3 255.7L614.8 252.8L613.5 250.1L612.4 248.2L612.2 247.7L612.1 247.7L610.4 248.1L608.3 248.9L606.7 249.5Z M617.8 241.3L619.9 240.7L623.1 239.6L626.7 238.9L630.5 239.4L633.2 241.8L634.7 244.7L635.6 247.4L636.5 249.8L637.7 252.4L639.1 255.3L640.3 257.8L641.2 259.7L640.0 260.4L638.7 259.0L636.7 256.9L634.5 254.5L632.5 252.1L631.0 249.5L629.7 247.0L628.7 245.2L628.0 244.3L626.4 243.7L623.4 243.3L620.3 243.2L618.0 243.1Z M500.2 348.6L502.3 349.7L505.4 351.2L508.8 353.3L511.9 356.0L514.3 359.7L516.0 363.8L517.3 367.5L518.2 370.1L516.7 371.1L514.6 369.5L511.5 367.1L508.2 364.6L505.5 362.5L503.1 360.4L500.5 358.0L498.1 355.8L496.3 354.2Z M102.0 466.9L107.2 464.5L114.7 461.2L122.9 457.1L130.7 452.8L137.8 448.1L145.2 442.7L152.8 437.0L160.4 431.5L168.1 426.1L175.9 420.6L184.1 415.3L192.5 410.9L201.3 407.6L210.0 405.3L218.3 403.8L226.0 402.8L233.3 402.5L240.2 402.8L246.4 403.8L251.9 405.4L256.4 408.3L259.3 411.9L261.0 415.1L262.0 417.1L259.5 419.6L257.4 418.5L254.7 417.1L251.8 416.0L248.7 415.5L244.6 415.2L239.4 414.9L233.6 414.9L227.4 415.5L220.5 416.6L213.0 418.3L205.4 420.4L198.0 423.2L190.8 426.9L183.2 431.6L175.3 436.9L167.2 441.9L159.1 446.6L150.9 451.4L142.5 455.9L134.1 459.8L125.2 462.9L116.1 465.2L108.1 467.0L102.5 468.3Z M104.5 474.7L103.1 476.3L101.3 478.5L99.6 480.7L98.7 482.5L98.2 483.7L97.8 484.8L97.6 485.7L97.3 486.6L97.6 488.6L98.7 491.7L100.1 494.8L101.0 497.0L99.9 497.9L98.0 496.5L95.1 494.5L92.1 492.0L89.9 488.9L89.2 485.5L89.6 482.4L90.9 479.7L92.8 477.4L95.6 475.6L98.8 474.6L101.8 474.0L103.7 473.5Z M141.4 498.3L146.1 497.1L152.8 495.3L160.1 493.7L166.7 493.2L172.2 494.2L176.8 496.2L181.0 498.9L184.9 502.0L188.6 505.9L191.9 510.3L194.8 514.5L197.6 517.9L200.9 520.8L204.5 523.6L208.2 526.0L211.6 528.0L214.9 529.5L218.1 530.5L220.9 531.1L222.9 531.6L222.7 533.0L220.6 532.9L217.7 532.7L214.1 532.2L210.3 531.3L206.3 530.0L201.9 528.3L197.3 526.0L192.9 523.1L189.0 519.3L185.6 515.0L182.5 511.0L179.5 507.6L176.3 504.6L173.3 501.8L170.0 499.6L166.2 498.1L160.5 497.7L153.3 498.2L146.5 499.1L141.7 499.7Z M226.7 531.8L229.8 531.1L234.5 530.0L239.8 529.3L245.2 530.4L249.2 534.2L251.0 538.8L251.3 543.8L249.9 549.0L246.6 553.3L242.4 556.9L238.2 560.0L234.9 562.8L232.3 565.3L230.0 567.3L228.6 569.0L228.0 570.8L228.3 574.0L229.7 578.6L231.1 583.9L231.3 589.3L229.1 593.7L225.9 596.2L222.7 597.5L219.7 598.4L216.6 599.0L213.3 599.1L210.4 599.1L208.4 599.0L208.3 597.6L210.2 597.2L213.0 596.6L215.8 595.8L218.0 594.5L219.8 592.9L221.3 591.0L222.0 589.3L222.2 588.0L222.0 585.3L221.1 580.6L220.2 575.1L220.2 569.8L221.8 565.4L224.1 562.1L226.5 559.5L229.0 556.8L232.2 553.4L236.0 549.8L238.9 546.6L240.2 544.5L240.4 543.0L240.1 541.3L239.6 540.0L239.7 539.4L238.3 538.3L234.3 537.1L229.9 536.1L226.7 535.4Z M210.9 554.6L211.3 557.4L212.0 561.6L212.7 566.0L213.4 569.8L214.5 573.0L216.0 576.5L217.3 580.2L216.9 584.3L213.8 587.0L209.8 588.4L205.9 589.2L203.4 589.8L202.9 588.5L205.3 587.4L208.8 585.8L211.8 584.0L213.0 582.5L212.7 581.1L211.4 578.4L209.7 574.8L208.6 570.8L208.4 566.3L208.7 561.7L209.2 557.5L209.5 554.6Z M181.7 593.2L183.2 594.3L185.3 595.6L187.2 596.4L188.2 596.6L190.5 596.9L194.5 597.0L198.6 597.0L201.5 596.9L202.1 599.7L199.5 600.8L195.6 602.6L191.1 604.0L186.6 604.2L183.0 602.0L181.2 598.9L180.5 596.2L180.0 594.5Z M256.7 462.9L258.3 463.7L260.3 464.8L262.2 465.5L263.8 465.6L266.1 465.4L269.7 464.9L273.8 464.1L278.0 462.9L282.5 461.1L287.4 458.7L292.2 456.3L296.6 454.4L300.5 453.2L304.1 452.5L307.0 452.0L309.0 451.7L309.4 453.1L307.5 453.9L304.9 455.1L301.7 456.6L298.3 458.3L294.3 460.5L289.7 463.1L284.8 465.8L280.2 468.1L275.8 470.0L271.5 471.8L267.3 473.0L263.0 473.3L259.2 471.8L256.6 469.3L255.2 466.9L254.3 465.5Z M317.7 455.6L321.8 457.9L327.8 461.1L334.4 465.2L340.4 470.1L345.3 475.6L349.5 481.6L353.4 487.9L357.1 494.3L360.7 500.8L364.0 507.5L367.2 514.3L370.1 521.2L372.6 528.1L374.8 535.1L376.8 541.7L379.2 547.8L382.4 553.7L386.1 559.6L389.6 564.7L392.1 568.3L386.2 572.2L383.8 568.6L380.4 563.3L376.5 557.2L372.9 550.9L369.8 544.6L366.9 538.0L364.0 531.5L361.0 525.1L357.9 518.7L354.6 512.2L351.3 505.8L347.9 499.6L344.2 493.5L340.5 487.5L336.7 481.9L333.1 476.7L328.9 471.3L324.1 465.6L319.7 460.6L316.5 457.0Z M324.4 405.2L326.5 402.4L329.4 398.3L333.0 393.8L337.1 389.9L341.8 386.7L346.8 384.0L351.7 381.8L355.9 380.0L359.6 378.8L362.9 378.1L365.5 377.8L367.3 377.5L369.0 382.5L367.4 383.4L365.2 384.7L362.5 386.2L359.3 387.8L355.3 389.7L350.6 391.9L345.8 394.2L341.5 396.3L337.1 398.8L332.5 401.6L328.3 404.3L325.4 406.2Z M316.8 454.8L320.7 456.7L326.3 459.5L332.6 463.1L338.6 467.5L343.9 472.6L349.2 478.5L354.1 485.0L358.6 491.8L361.9 498.9L364.3 505.9L366.3 512.6L368.6 519.0L371.4 525.7L374.7 532.6L377.9 539.3L380.7 545.3L382.9 550.1L384.6 554.1L386.2 557.4L388.1 560.6L390.7 564.1L393.8 567.6L397.1 571.0L399.9 574.1L402.1 577.0L404.0 579.8L405.6 582.0L406.7 583.6L405.5 584.9L403.8 584.0L401.4 582.6L398.5 580.9L395.5 578.8L392.2 576.2L388.4 573.2L384.6 569.8L381.1 566.0L378.2 562.3L375.9 558.6L373.8 554.7L371.3 550.1L368.0 544.4L364.4 537.8L360.7 530.9L357.2 523.9L354.2 517.1L351.6 510.5L349.1 504.4L346.2 498.8L342.6 493.1L338.2 487.2L333.7 481.4L329.5 475.9L325.7 470.4L321.7 464.7L318.2 459.7L315.7 456.1Z M387.6 580.7L389.2 582.1L391.7 584.2L394.1 587.2L395.3 591.3L393.9 595.4L391.5 598.1L389.2 599.8L387.3 601.0L385.4 602.2L383.4 603.3L381.6 604.1L380.4 604.7L379.3 603.7L379.7 602.4L380.3 600.6L381.0 598.5L381.9 596.4L383.1 594.2L384.4 592.0L385.2 590.5L385.4 590.4L385.9 589.5L386.0 586.8L385.9 583.8L385.7 581.6Z M409.0 588.4L409.1 590.1L409.3 592.7L409.0 595.8L407.4 599.0L404.4 601.2L400.7 602.8L397.3 603.9L395.0 604.7L394.1 603.2L395.9 601.5L398.4 599.1L400.9 596.6L402.6 594.8L403.8 593.4L405.1 591.5L406.4 589.5L407.3 588.0Z M376.8 584.5L377.1 586.9L377.6 590.5L377.1 595.1L374.3 599.7L369.4 602.2L364.2 603.3L359.0 604.0L354.3 605.0L349.6 606.7L344.9 608.5L340.7 610.4L337.4 612.6L334.9 614.8L332.8 617.4L331.0 620.6L329.3 624.8L328.1 630.1L327.2 636.7L326.2 644.0L324.4 651.1L321.7 657.7L318.5 664.0L315.2 669.9L312.0 675.2L308.9 680.4L305.8 685.4L302.8 689.8L300.1 693.2L297.6 695.2L295.4 695.8L293.9 695.7L293.1 695.5L292.7 694.2L293.5 693.6L294.3 693.0L295.0 692.1L296.1 690.2L297.9 686.8L300.1 682.2L302.6 677.0L305.2 671.5L308.0 665.9L311.1 660.1L314.0 654.2L316.4 648.5L318.0 642.3L319.1 635.5L320.3 628.6L321.9 622.4L323.8 617.4L325.9 613.1L328.6 609.3L332.2 605.8L336.8 603.0L341.9 600.9L347.1 599.2L352.0 597.6L357.1 596.0L362.2 594.6L366.4 593.4L368.6 592.5L370.0 591.5L371.6 589.2L373.0 586.3L374.0 584.1Z M295.3 701.1L293.3 702.6L290.3 704.8L287.3 707.3L284.7 709.6L282.0 712.0L279.2 714.5L278.3 715.8L279.5 709.8L276.6 706.5L278.8 708.0L283.1 709.9L287.7 711.8L292.3 713.5L297.4 715.0L302.8 716.8L308.1 719.1L312.8 722.0L317.0 725.2L320.8 728.4L324.3 731.6L327.8 735.0L331.4 738.9L334.5 742.3L336.6 744.7L335.6 746.1L332.6 744.8L328.4 743.0L323.6 740.8L319.1 738.3L315.1 735.5L311.3 732.4L307.6 729.5L303.9 727.2L299.6 725.4L294.7 723.8L289.7 722.5L285.0 721.4L280.5 720.9L275.7 720.9L270.7 720.3L264.3 714.5L267.2 705.1L271.7 702.5L276.1 701.0L280.1 700.0L284.1 699.4L288.3 699.1L292.1 699.1L294.6 699.1Z M336.7 731.4L339.2 732.1L342.8 733.1L346.4 733.8L349.0 734.0L351.1 734.0L354.1 733.9L357.4 733.7L360.3 733.7L362.5 734.0L364.1 734.5L365.5 734.9L366.5 735.2L367.0 737.3L366.3 738.0L365.3 739.2L363.7 740.4L361.7 741.4L359.0 742.4L355.5 743.5L351.4 744.2L346.8 743.7L342.8 741.5L339.6 738.3L337.2 735.2L335.5 733.2Z"/><path fill="#41403d" d="M192.4 99.9L194.9 101.2L198.6 103.0L202.7 105.3L206.3 107.7L209.4 110.3L212.3 113.1L215.0 116.2L217.1 119.8L218.6 123.8L219.4 127.9L219.9 131.8L220.2 135.3L220.4 138.9L220.4 142.4L220.4 145.4L220.3 147.6L219.2 147.7L218.4 145.8L217.4 142.9L216.2 139.7L215.1 136.4L213.9 133.0L212.8 129.5L211.6 126.1L210.3 123.1L208.8 120.3L207.0 117.4L205.0 114.4L202.7 111.6L200.0 108.7L196.8 105.7L193.7 103.0L191.6 101.1Z M222.1 159.2L223.7 162.3L226.0 166.6L228.6 171.3L231.2 175.4L233.8 178.6L236.7 181.7L239.7 184.7L242.8 187.9L246.3 191.5L250.1 195.4L253.6 199.0L256.0 201.4L255.3 202.3L252.4 200.4L248.2 197.7L243.6 194.5L239.6 191.3L236.3 188.2L233.2 185.0L230.3 181.5L227.7 177.6L225.4 172.9L223.6 167.7L222.1 162.9L221.0 159.7Z M304.0 175.8L305.6 176.5L307.8 177.5L309.9 178.1L310.8 177.9L311.2 177.3L312.3 175.5L313.7 172.8L315.5 170.0L317.4 167.2L319.5 163.9L322.4 160.6L326.3 157.8L331.4 155.9L337.1 154.6L343.1 153.9L348.9 153.8L354.3 154.4L359.5 155.7L364.5 157.5L369.2 159.9L373.4 163.2L377.0 166.9L380.0 170.3L382.8 173.0L386.0 175.1L389.9 177.0L394.1 179.4L397.8 182.7L400.3 186.6L401.9 190.7L402.6 195.3L402.4 200.3L400.9 206.3L398.4 213.1L395.8 219.2L394.0 223.4L392.3 222.9L393.1 218.4L394.3 211.9L395.2 205.1L395.4 199.8L394.9 196.2L394.0 193.2L392.8 190.7L391.2 188.6L389.0 186.7L385.7 184.9L381.6 182.8L377.3 179.9L373.6 176.3L370.6 172.5L367.7 169.3L364.7 166.8L361.2 164.9L357.1 163.3L352.8 162.1L348.4 161.4L343.5 161.3L338.2 161.7L333.1 162.6L329.0 163.7L326.0 165.2L323.4 167.4L321.0 170.0L318.9 172.4L317.2 174.8L316.0 177.4L314.6 179.9L312.1 181.8L309.0 181.5L306.5 179.9L304.5 178.2L303.2 177.1Z M401.7 180.1L402.3 177.7L403.2 174.1L404.7 170.1L407.2 166.6L410.8 164.0L415.1 162.1L419.7 160.8L424.5 160.1L429.5 160.2L434.4 161.0L439.3 162.1L444.0 163.3L448.8 164.8L453.7 166.5L458.2 168.2L462.4 169.7L466.4 170.9L470.4 172.0L474.1 173.1L477.3 174.7L479.9 176.6L481.6 178.9L482.6 181.6L482.4 184.4L480.9 186.6L478.7 188.3L476.3 189.7L473.7 190.9L470.9 191.9L467.9 192.7L464.9 193.6L462.0 194.8L458.5 196.7L454.6 199.2L451.0 201.5L448.5 203.1L447.8 202.2L450.1 200.3L453.4 197.5L457.1 194.6L460.6 192.2L463.9 190.8L467.2 189.9L470.1 189.2L472.5 188.2L474.6 186.9L476.5 185.4L477.7 184.0L477.9 183.2L477.5 183.0L476.9 182.5L475.7 181.7L474.0 180.9L471.7 180.0L468.4 179.1L464.4 178.1L460.1 177.0L455.7 175.6L451.1 174.0L446.4 172.6L441.8 171.3L437.3 170.0L432.8 168.9L428.6 168.1L424.7 167.7L420.9 167.9L417.0 168.5L413.4 169.5L410.6 170.7L408.2 172.6L406.1 175.5L404.3 178.5L403.0 180.7Z M335.5 266.8L336.1 268.8L336.9 271.5L338.0 274.3L339.7 276.8L342.6 279.7L346.9 283.6L351.5 288.6L354.9 295.1L355.5 302.3L354.4 308.7L352.6 314.3L350.9 319.1L348.9 323.8L346.3 328.5L344.0 332.5L342.4 335.2L340.1 334.6L339.9 331.4L339.7 326.9L339.5 321.8L339.4 316.7L339.8 311.5L340.5 306.2L340.8 301.9L340.7 298.7L339.7 295.5L337.3 290.8L334.4 285.6L332.3 280.3L331.7 275.5L332.3 271.6L333.2 268.7L333.8 266.8Z M398.2 200.7L397.4 203.1L396.4 206.6L395.3 210.3L394.6 213.4L394.3 216.1L394.2 219.2L394.2 222.0L394.2 224.0L393.0 224.2L392.3 222.4L391.2 219.7L390.3 216.4L390.0 212.8L390.7 209.1L392.0 205.1L393.4 201.7L394.3 199.3Z M391.7 252.4L393.7 252.5L397.1 252.8L401.3 254.5L404.7 259.4L404.6 265.5L403.1 270.7L401.8 275.0L401.5 278.2L402.2 281.4L403.6 285.4L405.5 289.5L407.8 293.4L410.7 297.0L414.3 300.6L418.0 304.0L420.9 306.8L422.5 308.8L423.4 310.3L424.2 311.6L425.0 312.6L422.5 317.9L421.3 318.0L419.4 318.1L416.6 317.5L413.5 315.9L409.9 313.2L405.8 309.5L401.5 305.2L397.8 300.5L394.6 295.7L391.8 290.6L389.6 285.1L388.3 279.0L388.9 272.5L390.7 266.7L392.3 262.6L393.0 261.1L393.8 260.8L393.2 258.9L391.6 256.7L390.3 255.0Z M472.3 374.6L476.8 375.1L483.2 375.8L490.2 376.7L496.1 377.4L500.7 378.0L504.6 378.6L508.3 379.2L512.0 380.1L515.7 381.4L519.4 383.0L522.5 384.5L524.7 385.6L524.5 386.4L522.1 386.0L518.7 385.4L514.8 384.7L511.0 384.1L507.6 383.5L504.0 383.0L500.0 382.4L495.4 381.5L489.6 380.1L482.8 378.3L476.5 376.6L472.1 375.4Z M109.4 489.8L114.5 490.1L121.8 490.7L130.0 491.0L137.6 490.9L144.4 490.1L151.4 488.7L158.6 487.2L166.1 485.7L173.9 484.3L182.0 483.0L190.0 481.7L197.5 480.5L205.1 479.3L212.7 478.1L219.3 477.1L223.9 476.4L224.3 478.2L219.7 479.4L213.3 481.1L205.8 482.9L198.3 484.6L190.7 486.0L182.7 487.3L174.6 488.6L166.8 489.8L159.5 491.4L152.3 493.0L145.1 494.4L137.7 495.1L129.8 494.6L121.5 493.4L114.3 491.9L109.3 491.0Z M105.0 502.9L107.4 502.8L111.0 502.7L115.3 502.9L120.1 503.8L125.2 505.7L130.6 508.1L136.1 510.6L141.8 513.0L147.8 515.1L154.4 517.2L161.2 519.4L167.9 521.8L174.5 524.3L181.2 526.8L187.8 529.7L194.3 533.0L200.8 537.3L207.2 542.3L212.8 546.9L216.6 550.0L215.8 551.3L211.3 549.1L204.9 545.9L197.8 542.5L191.0 539.5L184.7 536.9L178.2 534.5L171.6 532.1L165.0 529.7L158.4 527.4L151.7 525.2L145.1 522.8L138.7 520.2L132.9 517.1L127.5 513.8L122.7 510.7L118.5 508.4L114.5 506.7L110.6 505.5L107.2 504.7L104.8 504.1Z M270.4 478.2L274.3 481.5L279.8 486.1L286.1 491.6L292.1 497.4L297.6 503.6L303.1 510.3L308.4 516.9L313.7 522.6L319.2 527.2L325.1 531.5L331.1 535.8L337.1 540.7L342.8 546.1L348.4 551.8L353.5 557.6L357.7 563.0L360.7 568.3L362.6 573.3L363.9 577.6L364.8 580.5L363.7 581.0L361.9 578.6L359.3 575.1L356.2 571.2L352.5 567.1L348.0 562.7L342.6 557.6L336.9 552.4L331.2 547.5L325.6 543.2L319.6 539.0L313.4 534.4L307.4 529.0L301.8 522.4L296.6 515.3L291.7 508.2L287.1 501.7L282.2 495.3L277.1 488.7L272.6 483.0L269.5 479.0Z M393.1 404.4L391.8 406.7L389.9 410.0L387.1 413.8L383.4 417.3L378.6 420.3L373.1 423.0L367.3 425.5L361.6 427.9L356.0 430.0L350.4 431.8L345.3 433.4L341.0 435.2L337.0 437.6L332.9 440.6L329.3 443.5L326.8 445.5L325.6 444.5L327.4 441.8L330.0 437.8L333.4 433.4L337.6 429.6L342.6 426.9L348.2 424.9L353.7 423.2L358.9 421.2L364.2 418.7L369.6 415.9L374.7 413.2L379.0 410.8L382.7 408.6L386.2 406.4L389.2 404.3L391.3 402.8Z M331.4 543.9L334.2 544.8L338.4 546.1L343.0 547.9L347.3 550.2L350.9 553.1L354.3 556.5L357.3 560.2L359.9 564.2L361.9 568.9L363.5 574.1L364.7 578.7L365.5 582.0L364.4 582.4L362.5 579.7L359.9 575.7L357.0 571.5L354.3 567.7L351.6 564.5L348.9 561.3L346.1 558.2L343.3 555.5L340.0 552.8L336.3 550.1L332.8 547.8L330.3 546.1Z M389.1 610.5L387.6 613.3L385.5 617.4L382.9 622.1L380.0 626.7L376.9 631.2L373.5 635.7L369.9 640.2L366.1 644.5L362.0 648.3L357.7 651.6L353.5 654.9L349.4 658.6L345.2 663.0L340.8 668.1L336.4 673.3L332.2 678.0L328.2 682.3L324.3 686.2L320.9 689.7L317.9 692.8L315.4 695.7L313.3 698.3L311.6 700.4L310.4 702.0L309.4 701.4L310.2 699.6L311.4 697.1L313.0 694.0L315.0 690.6L317.6 686.9L320.5 682.9L323.7 678.6L326.9 674.0L330.2 668.7L333.7 663.0L337.4 657.0L341.1 651.5L344.9 646.6L348.5 642.1L352.1 638.0L355.9 634.1L360.2 630.4L364.7 626.9L369.2 623.6L373.4 620.5L377.5 617.4L381.7 614.2L385.4 611.4L387.9 609.5Z M320.7 701.1L322.7 703.0L325.6 705.7L328.8 708.9L331.5 712.3L333.7 716.0L335.6 720.2L337.1 724.1L338.3 726.7L336.6 727.4L335.5 724.7L334.0 720.9L332.2 716.7L330.2 713.1L327.8 709.8L324.8 706.6L322.0 703.7L320.1 701.7Z"/><path fill="#8d8a84" d="M278.5 211.4L281.0 213.5L284.5 216.5L288.4 220.1L292.0 223.6L295.2 227.1L298.4 231.0L301.5 235.3L304.6 240.1L307.5 245.9L310.3 252.5L312.7 258.4L314.4 262.5L313.1 263.2L310.5 259.6L306.9 254.3L302.9 248.6L299.2 243.7L295.8 239.9L292.3 236.3L288.8 232.7L285.6 228.8L282.9 224.3L280.6 219.5L278.7 215.3L277.3 212.3Z"/><path fill="#5d5b57" d="M615.0 259.3L613.4 260.2L611.2 261.5L609.0 262.9L607.1 264.5L605.3 266.3L603.2 268.4L601.3 270.5L599.9 272.5L598.9 274.6L598.1 277.0L597.3 279.5L596.4 281.9L595.1 284.0L593.5 286.4L592.1 288.7L591.1 290.3L588.8 290.2L588.0 288.5L586.7 286.0L585.6 282.8L585.3 279.4L585.8 276.2L586.8 272.9L588.4 269.4L590.5 266.1L593.2 263.1L596.2 260.5L599.3 258.4L602.5 256.7L605.9 255.6L609.2 255.1L611.9 255.0L613.8 254.9Z M250.4 398.9L252.7 400.7L256.1 403.2L259.9 406.6L262.9 410.7L264.9 415.3L266.4 420.4L267.3 425.8L267.3 431.5L265.9 437.3L263.5 443.0L261.0 447.9L259.4 451.3L258.0 450.9L258.5 447.1L259.2 441.8L259.7 436.1L259.5 431.4L258.5 427.4L256.8 423.3L255.0 419.3L253.4 415.5L252.0 411.7L250.3 407.6L248.7 403.8L247.6 401.1Z M260.8 400.0L313.2 400.0L309.2 407.3L290.9 413.1L284.3 428.8L275.7 450.3L272.0 431.4L274.4 414.4L264.7 403.9Z"/><path fill="#87847e" d="M123.1 482.8L128.3 480.9L135.8 478.2L144.2 474.9L152.0 471.4L159.2 467.2L166.6 462.2L174.5 457.2L182.9 453.1L191.6 450.4L200.3 448.8L208.5 447.8L216.2 447.1L223.8 447.0L230.5 447.5L235.0 447.8L236.5 448.1L238.2 448.4L241.9 446.5L245.8 443.4L248.7 441.1L251.9 442.7L251.6 446.4L251.1 451.9L249.0 458.6L243.1 464.5L235.0 466.2L228.1 465.2L222.1 463.7L216.2 463.0L209.4 462.9L201.7 463.1L194.1 463.6L186.7 464.8L179.3 467.3L171.4 470.8L163.1 474.7L154.7 477.9L145.8 480.1L136.8 481.8L128.9 483.0L123.4 483.8Z M141.6 505.4L144.7 505.1L149.2 504.7L154.3 504.4L159.1 504.6L163.3 505.4L167.4 506.5L171.4 508.1L175.5 510.1L180.3 513.0L185.4 516.7L189.9 520.2L193.0 522.5L192.3 523.7L188.7 522.1L183.6 519.7L178.0 517.3L173.1 515.2L169.1 513.7L165.4 512.4L161.8 511.3L158.1 510.2L153.8 509.2L149.0 508.2L144.6 507.4L141.5 506.8Z M293.1 465.0L295.9 467.7L299.8 471.5L304.2 475.7L308.4 479.7L312.8 483.8L317.6 488.5L322.7 493.6L327.6 498.9L332.1 504.3L336.4 509.9L340.5 515.5L344.7 521.1L348.9 526.6L353.2 532.2L357.4 537.7L361.7 543.2L366.2 548.8L371.0 554.5L375.5 560.3L379.0 565.8L381.2 571.2L382.3 576.2L382.7 580.2L383.0 583.0L379.6 583.8L378.6 581.1L377.4 577.5L375.6 573.5L373.1 569.6L369.3 565.3L364.4 560.5L359.0 555.4L353.7 550.2L348.8 545.3L343.9 540.3L339.0 535.4L334.0 530.4L329.1 525.5L324.0 520.7L319.1 515.7L314.4 510.7L309.8 505.4L305.1 499.8L300.7 494.0L297.0 488.0L294.4 481.6L292.8 475.2L291.9 469.8L291.3 466.0Z M387.7 384.1L388.3 386.8L389.3 391.0L388.9 396.9L385.2 403.1L378.6 407.5L370.7 411.1L362.3 414.2L354.6 417.2L347.3 420.0L340.1 422.5L334.0 424.7L329.9 426.8L327.6 428.9L325.9 431.7L324.3 435.2L322.6 438.8L320.9 442.2L319.3 445.7L318.0 449.0L317.1 451.3L315.4 451.2L314.9 448.7L314.3 445.1L313.9 440.8L314.1 436.5L314.7 432.3L315.6 427.5L318.0 422.1L322.4 417.0L328.8 413.3L335.9 410.6L343.2 408.2L350.2 405.7L357.6 402.5L365.6 399.2L372.6 396.0L377.2 393.6L379.5 392.1L381.5 389.6L383.0 386.3L384.2 383.7Z M358.2 542.4L360.7 544.7L364.5 548.0L368.6 551.8L371.9 555.7L374.3 559.6L376.0 563.4L377.2 567.0L378.1 570.3L378.4 573.5L378.2 576.4L377.9 578.7L377.6 580.3L375.8 580.4L375.3 578.9L374.7 576.8L373.8 574.4L372.7 572.1L371.3 569.4L369.7 566.4L367.8 563.4L365.8 560.5L362.9 557.2L359.3 553.5L355.8 550.0L353.3 547.6Z"/><path fill="#222222" d="M770.3 110.2L770.8 113.0L771.5 116.9L772.1 121.7L772.3 126.6L772.2 131.8L771.7 137.4L771.0 143.2L769.6 148.8L767.6 153.9L765.0 158.7L762.4 162.7L760.2 166.0L758.2 168.5L756.3 170.4L754.7 171.7L753.6 172.6L751.6 171.7L751.5 170.2L751.5 168.2L751.5 165.6L752.0 162.5L752.8 158.6L754.0 154.0L755.2 149.3L756.5 144.8L757.8 140.1L759.4 135.0L761.0 129.8L762.5 125.1L764.1 120.7L765.7 116.4L767.1 112.6L768.1 110.0Z M746.4 134.4L744.6 136.8L741.9 140.3L739.0 144.1L736.5 147.7L734.5 150.9L732.7 154.0L731.0 157.3L729.6 161.2L728.2 166.5L727.0 172.8L726.1 178.7L725.4 182.8L723.2 182.4L723.7 178.3L724.5 172.4L725.5 165.9L726.7 160.4L728.1 156.1L729.7 152.5L731.6 149.2L733.7 145.8L736.5 142.2L739.7 138.5L742.7 135.2L744.7 133.0Z M760.6 52.5L762.8 53.0L766.0 53.7L769.4 54.9L772.2 56.9L773.7 60.0L774.5 63.9L774.9 67.5L775.1 69.9L770.2 73.4L767.9 72.4L764.7 70.9L761.4 69.1L759.2 67.3L758.1 64.7L757.5 61.4L757.1 58.2L756.8 55.9Z M774.7 101.7L775.7 99.3L777.2 95.9L779.1 92.1L781.5 88.7L784.3 86.0L787.4 83.7L790.5 81.8L793.6 80.1L796.9 78.4L800.5 76.9L803.8 75.7L806.1 74.9L809.1 79.0L807.7 80.9L805.6 83.7L803.2 86.7L800.7 89.5L798.1 92.0L795.4 94.3L792.7 96.5L790.0 98.3L786.9 100.1L783.3 101.8L780.0 103.4L777.6 104.6Z M722.7 35.2L724.7 37.2L727.6 39.9L730.9 43.1L734.3 46.3L738.0 49.9L742.1 53.9L745.8 57.6L748.4 60.1L746.3 62.3L743.7 59.7L740.1 55.9L736.0 51.8L732.4 48.1L729.2 44.8L726.0 41.5L723.3 38.6L721.4 36.5Z M716.4 47.3L719.1 48.8L723.0 50.8L727.2 53.0L730.9 54.8L734.1 56.3L737.5 57.7L740.4 58.9L742.5 59.8L741.6 62.6L739.4 62.1L736.2 61.4L732.5 60.4L728.9 58.9L725.1 56.5L721.2 53.6L717.8 50.8L715.4 48.9Z M782.9 62.0L784.3 62.7L786.3 63.8L788.5 64.9L790.1 65.9L791.2 66.6L792.0 67.3L792.6 68.0L793.1 68.4L792.4 69.7L791.8 69.7L790.9 69.6L789.7 69.3L788.4 68.8L786.7 67.7L784.8 66.3L782.9 64.8L781.7 63.9Z M737.7 201.3L736.6 204.0L735.0 207.7L733.3 211.9L731.7 215.8L730.0 219.6L728.2 223.5L726.4 227.5L725.1 231.5L724.3 235.4L723.8 239.5L723.3 244.0L722.7 248.6L722.2 253.2L721.7 258.1L720.7 263.3L718.6 268.6L715.1 273.2L711.0 276.6L707.2 279.2L704.1 281.0L701.2 282.2L698.6 282.8L696.4 283.0L694.9 283.1L693.5 281.4L694.0 280.0L694.6 278.0L695.4 275.7L696.6 273.1L698.7 270.0L701.2 266.7L703.3 263.6L704.8 261.0L706.1 258.3L707.4 254.7L708.8 250.5L710.2 246.1L711.3 241.9L712.2 237.6L713.3 233.0L714.7 228.3L716.5 223.6L718.4 219.0L720.6 214.7L723.2 210.8L726.4 207.2L730.1 204.0L733.4 201.5L735.7 199.7Z M719.5 202.9L718.0 204.4L715.7 206.5L713.4 209.0L711.5 211.7L710.0 214.9L708.6 218.7L707.1 222.9L705.6 227.0L704.0 231.1L702.3 235.1L700.7 239.0L699.3 242.6L698.3 246.0L697.4 249.2L696.7 252.1L696.0 254.6L695.6 256.4L695.2 257.8L695.0 258.8L694.8 259.6L693.7 259.5L693.6 258.8L693.4 257.6L693.3 256.1L693.5 254.1L693.9 251.5L694.4 248.5L695.2 245.1L696.1 241.6L697.4 237.8L698.9 233.8L700.5 229.7L702.1 225.7L703.5 221.6L704.8 217.4L706.4 213.3L708.4 209.6L711.1 206.8L714.2 204.6L717.0 203.1L718.9 202.0Z M748.0 196.9L747.0 199.4L745.7 202.9L744.2 207.0L743.0 211.2L742.0 215.5L741.1 220.3L740.2 225.3L739.4 230.2L738.8 235.0L738.3 239.9L737.7 244.8L736.6 249.7L734.9 254.5L732.8 259.1L730.5 263.5L728.2 267.5L725.8 271.1L723.3 274.2L721.0 276.9L719.1 279.5L717.7 282.2L716.5 284.9L715.6 287.4L714.9 289.1L713.7 288.7L714.1 286.9L714.5 284.3L715.3 281.2L716.5 278.1L718.3 275.0L720.6 272.1L722.8 269.0L724.9 265.6L726.9 261.7L728.9 257.4L730.8 252.9L732.2 248.5L733.2 244.0L733.9 239.3L734.5 234.4L735.3 229.5L736.3 224.6L737.3 219.6L738.4 214.7L739.8 210.2L741.6 205.9L743.7 202.0L745.7 198.7L747.0 196.4Z M688.4 265.4L685.9 267.1L682.4 269.5L678.7 272.2L675.5 275.1L673.0 278.1L670.5 281.5L668.3 285.0L666.7 288.3L665.5 291.7L664.8 295.5L664.3 299.0L663.9 301.5L661.7 301.4L661.6 298.9L661.4 295.2L661.5 291.0L662.4 286.7L664.2 282.8L666.7 278.9L669.5 275.2L672.7 272.0L676.7 269.3L681.1 267.1L685.1 265.4L687.8 264.3Z M681.2 282.8L680.7 285.0L679.9 288.1L679.3 291.2L679.0 293.4L678.6 295.5L678.2 298.5L678.0 301.6L677.9 303.9L675.7 304.4L674.6 302.5L672.9 299.6L671.4 296.1L671.1 292.1L672.6 288.4L675.2 285.5L677.6 283.2L679.3 281.7Z M705.9 285.3L705.0 287.3L703.9 290.0L702.9 292.9L702.5 295.3L702.5 298.3L702.8 302.5L703.2 306.7L703.4 309.6L695.5 310.5L695.1 307.6L694.5 303.3L694.2 298.4L694.7 293.7L696.7 289.8L699.4 286.9L701.9 284.8L703.5 283.5Z M630.2 311.2L626.9 310.5L622.4 309.6L617.6 309.0L613.5 309.0L609.2 309.5L604.1 310.5L599.3 311.8L595.5 313.5L592.5 315.6L589.8 318.4L587.6 321.6L586.0 324.6L585.2 327.3L585.1 330.3L585.3 333.6L585.7 336.8L586.3 339.9L587.2 343.1L588.3 346.1L589.0 348.3L580.7 351.5L579.8 349.4L578.4 346.3L576.9 342.5L575.9 338.5L575.4 334.6L575.2 330.3L575.5 325.7L576.7 321.0L578.8 316.5L581.7 312.0L585.3 307.7L589.9 304.2L595.4 301.5L601.5 299.5L607.7 298.3L613.8 298.1L619.8 299.5L625.1 302.1L629.2 304.7L632.1 306.4Z M600.6 315.8L604.8 316.5L610.1 318.6L615.4 321.0L620.4 323.3L625.2 325.9L629.4 328.9L632.7 332.4L635.2 336.3L637.2 340.3L638.2 344.4L638.5 348.6L639.9 351.6L643.2 352.9L647.6 353.0L652.1 352.5L656.6 351.0L661.3 349.0L665.2 348.1L668.3 349.3L670.7 351.6L672.2 354.2L672.7 357.4L672.2 361.0L670.4 363.8L667.1 365.3L662.4 366.0L657.3 366.5L651.6 367.0L645.5 367.4L639.9 367.3L635.4 366.7L631.5 365.7L627.6 364.7L623.6 363.5L619.6 362.3L616.3 362.1L614.3 364.1L613.1 367.1L611.0 369.1L607.4 369.2L603.0 368.2L598.8 366.5L595.0 363.7L591.4 360.1L588.3 356.9L585.5 354.3L583.2 352.0L582.2 349.9L583.4 348.1L585.9 346.4L588.3 344.6L590.2 342.7L592.1 340.6L593.6 337.6L594.6 333.3L595.3 328.1L596.2 323.7L597.1 320.1L598.3 317.2Z M633.2 302.2L636.1 303.6L640.1 305.6L644.6 308.0L648.4 310.3L651.6 312.5L654.6 314.9L657.3 317.5L659.3 320.8L659.7 324.6L658.9 328.0L657.8 330.8L657.0 332.6L654.8 332.2L654.8 330.2L654.7 327.5L654.4 324.9L653.7 323.1L652.4 321.4L650.5 319.3L648.0 316.9L645.3 314.3L642.1 311.4L638.4 308.2L634.9 305.3L632.5 303.2Z M639.1 323.7L640.2 325.4L641.7 327.9L643.3 330.8L644.3 333.7L644.6 336.8L644.3 339.8L643.9 342.5L643.6 344.3L642.4 344.3L642.1 342.5L641.7 339.9L641.2 337.1L640.7 334.6L640.0 332.0L639.2 329.0L638.4 326.2L637.8 324.3Z M669.8 306.1L670.3 308.6L671.0 312.2L671.8 316.2L672.6 319.8L673.3 323.2L674.0 326.7L674.7 330.3L675.2 333.5L675.4 336.7L675.5 339.8L675.5 342.5L675.5 344.4L673.4 344.9L672.6 343.2L671.5 340.7L670.2 337.8L669.2 334.8L668.4 331.6L667.6 328.0L666.9 324.3L666.6 320.5L666.6 316.6L666.9 312.4L667.3 308.8L667.6 306.3Z M691.6 317.9L691.3 320.0L691.0 322.9L690.6 326.3L690.0 329.6L689.1 333.5L687.9 338.0L686.7 342.1L685.9 345.0L681.9 344.2L682.2 341.3L682.6 337.0L683.2 332.3L684.1 328.2L685.4 324.7L686.9 321.6L688.4 319.0L689.5 317.2Z M674.0 281.0L672.7 283.2L670.9 286.1L669.0 289.5L667.5 292.8L666.3 296.7L665.1 301.1L664.2 305.2L663.5 308.1L661.7 307.8L662.0 304.9L662.4 300.6L663.0 295.9L663.9 291.6L665.5 287.8L667.4 284.1L669.2 281.1L670.4 279.0Z M680.2 285.1L679.7 287.3L678.9 290.4L678.2 293.6L677.8 295.8L677.8 297.4L678.0 299.5L678.4 301.6L678.8 303.1L677.1 304.0L676.0 302.9L674.3 301.3L672.6 298.9L671.8 295.7L672.4 292.1L673.8 288.7L675.3 285.7L676.4 283.6Z M704.5 283.3L704.1 285.1L703.5 287.5L703.2 290.0L703.1 292.1L702.7 294.7L702.2 297.8L701.8 301.0L701.6 304.1L701.7 307.2L702.0 310.7L702.5 314.3L703.0 317.4L703.4 320.1L703.8 322.4L704.2 324.4L704.4 325.9L702.8 326.7L701.8 325.6L700.4 324.0L698.8 321.9L697.3 319.4L695.7 316.4L694.1 312.9L692.6 309.0L691.7 304.8L691.5 300.6L691.7 296.4L692.4 292.4L693.7 288.8L695.9 285.8L698.7 283.8L701.1 282.7L702.8 281.9Z M717.8 280.4L717.1 282.3L716.3 284.2L715.6 286.2L714.8 288.1L713.4 287.7L713.8 285.6L714.2 283.6L714.6 281.6L714.9 279.6Z M716.6 300.2L718.6 300.8L721.3 301.5L724.2 302.3L726.9 302.9L729.6 303.8L733.0 305.0L737.0 306.8L741.3 309.1L746.1 312.1L751.1 315.5L755.6 318.9L759.3 322.8L757.7 333.4L752.6 334.0L753.5 331.8L753.2 327.1L756.0 328.5L761.3 330.4L767.8 333.1L774.1 337.0L779.6 342.0L784.7 347.7L789.4 353.5L793.7 359.0L797.9 364.2L801.8 369.3L805.5 374.5L808.7 379.6L811.5 384.8L813.9 389.9L815.8 394.6L817.1 398.8L817.5 402.3L817.2 405.0L816.5 407.0L816.1 408.2L814.8 408.3L814.4 407.0L813.7 405.3L812.8 403.3L811.4 401.0L809.4 397.7L806.8 393.7L803.8 389.4L800.6 385.2L797.0 381.0L792.9 376.7L788.6 372.1L784.1 367.4L779.3 362.2L774.4 356.9L769.6 351.8L765.3 347.5L760.9 343.5L756.1 339.5L751.5 335.9L747.8 332.9L746.7 325.9L750.9 323.1L749.2 323.2L747.5 331.5L745.8 330.3L742.1 327.2L737.8 323.6L734.0 320.8L730.9 318.8L727.5 317.2L723.9 315.4L720.6 312.9L718.0 309.8L716.5 306.5L715.7 303.7L715.1 301.8Z M716.3 320.8L718.4 321.4L721.5 322.2L725.1 323.4L729.0 325.0L733.8 327.6L739.2 330.8L744.1 333.8L747.2 335.7L742.4 343.3L740.3 341.8L738.5 340.6L742.7 334.0L744.8 335.6L748.9 338.4L753.8 341.9L758.7 345.9L763.6 350.4L768.7 355.5L773.6 360.7L778.1 365.2L782.0 369.1L785.7 372.8L789.2 376.3L792.1 380.0L794.4 383.8L796.1 387.6L797.2 391.0L797.6 394.2L797.1 397.2L795.7 399.3L794.3 400.5L793.4 401.2L791.4 400.2L791.5 399.1L791.5 397.6L791.2 396.3L790.7 395.1L789.9 393.1L788.9 390.5L787.6 387.6L785.7 384.8L783.1 382.0L779.9 378.9L776.0 375.5L771.8 371.6L767.2 367.0L762.2 361.9L757.2 356.9L752.7 352.6L748.3 348.7L743.8 345.1L740.0 342.1L737.3 339.9L742.0 333.2L744.6 334.5L746.8 335.6L742.1 343.1L739.3 341.0L734.7 337.8L729.6 334.1L725.4 331.0L722.2 328.4L719.4 326.0L717.1 323.9L715.4 322.4Z M715.5 331.9L717.1 333.1L719.6 334.9L722.2 337.3L724.3 340.1L725.6 343.3L726.5 346.7L726.9 350.3L726.7 353.9L725.6 357.3L723.8 360.4L721.9 363.0L720.2 365.0L718.5 366.6L716.8 367.6L715.4 368.3L714.5 368.7L713.7 367.7L714.3 366.9L715.1 365.7L715.9 364.3L716.8 362.6L717.9 360.4L719.1 357.8L720.2 355.2L720.7 352.8L720.8 350.4L720.7 347.6L720.2 344.7L719.6 342.2L718.7 339.7L717.2 337.1L715.6 334.6L714.4 332.9Z M700.5 333.5L700.3 335.3L700.0 337.9L699.7 340.7L699.2 343.4L698.4 346.0L697.4 348.6L696.4 351.0L695.8 352.7L694.0 352.3L694.1 350.5L694.3 347.9L694.7 345.1L695.1 342.4L696.0 339.8L697.0 337.1L698.0 334.7L698.7 333.0Z M706.1 339.4L706.2 341.4L706.4 344.1L706.5 347.2L706.4 350.0L706.0 352.7L705.4 355.5L704.8 357.9L704.3 359.5L702.9 359.4L702.8 357.7L702.6 355.2L702.5 352.4L702.6 349.7L703.0 346.9L703.6 343.9L704.2 341.2L704.6 339.3Z M674.8 352.5L677.3 351.0L681.3 351.6L685.3 353.4L688.7 356.0L692.1 359.7L695.8 363.8L700.4 368.4L705.1 373.4L708.0 377.8L707.1 380.9L704.2 383.4L702.8 386.6L704.8 391.1L708.3 396.3L709.7 400.5L707.6 403.4L703.5 405.5L699.3 406.6L695.0 407.2L690.5 406.9L687.0 404.9L685.3 400.5L684.5 394.4L683.5 388.3L681.9 382.6L680.0 376.7L678.3 370.8L676.5 364.1L674.9 357.2Z M715.9 380.4L718.1 375.3L721.8 369.8L725.5 366.5L728.6 366.8L731.7 369.3L735.1 372.6L738.6 376.4L742.4 380.9L746.4 384.8L751.5 387.9L756.9 390.4L760.4 391.8L760.0 391.2L757.8 389.5L757.5 389.4L761.4 392.2L767.2 396.4L772.3 400.7L776.1 404.7L779.0 408.6L780.2 412.1L778.6 415.0L775.1 417.6L771.4 420.0L768.1 422.0L764.5 423.9L761.0 426.1L757.2 429.7L753.4 433.6L750.5 434.8L749.2 431.3L748.8 425.1L747.9 419.1L744.6 412.9L740.9 406.8L740.0 405.1L745.3 412.0L753.5 423.2L758.6 430.0L757.8 428.3L754.0 422.3L749.9 416.2L746.6 411.3L743.1 406.4L739.4 402.3L735.4 399.3L731.1 397.2L727.2 395.3L723.8 393.9L720.8 392.7L718.5 390.9L716.7 388.0L715.6 384.4Z M628.8 375.6L628.1 377.8L627.2 381.0L626.1 384.7L625.3 388.7L624.7 393.7L624.1 399.8L623.6 405.4L623.3 409.4L623.0 409.7L619.4 409.2L622.3 407.5L623.2 410.1L622.9 413.3L622.6 417.9L622.0 423.0L621.2 427.8L620.0 432.0L618.5 436.1L617.0 439.9L615.6 443.8L614.3 448.3L612.9 453.2L611.6 457.7L610.7 460.8L608.9 460.5L609.3 457.2L609.9 452.6L610.6 447.4L611.7 442.6L613.3 438.4L615.2 434.6L617.0 430.9L618.3 427.1L619.1 422.6L619.6 417.7L619.8 413.1L619.8 409.9L620.7 410.7L623.1 410.5L619.0 411.3L618.7 409.1L619.0 405.1L619.5 399.3L620.3 393.2L621.2 387.9L622.7 383.6L624.4 379.9L626.0 376.9L627.1 374.8Z M642.5 372.6L645.1 373.9L649.3 378.1L653.8 383.1L659.2 388.9L664.9 395.5L667.8 400.5L666.1 402.7L661.6 403.3L657.3 403.1L654.2 401.9L651.2 400.1L648.6 399.7L646.1 401.8L643.9 405.5L643.4 409.3L645.8 412.9L649.7 416.7L652.1 420.5L651.5 424.4L649.4 428.3L646.9 431.8L643.8 435.5L640.2 438.8L637.2 440.0L635.1 437.9L633.6 433.6L632.9 429.2L633.4 424.8L634.6 420.3L635.5 417.0L635.2 416.4L634.6 417.0L634.6 416.2L635.9 412.6L637.9 407.4L639.9 402.3L641.9 397.7L643.9 393.1L645.1 388.3L644.3 382.2L642.6 375.9Z M680.2 387.2L681.5 389.7L683.3 393.3L685.0 397.8L685.8 402.6L685.1 407.6L683.5 412.7L681.7 417.1L679.4 420.7L673.8 421.9L670.7 419.2L669.4 415.9L670.1 411.7L673.3 409.8L676.5 409.3L679.5 409.1L681.4 408.9L682.1 411.1L680.4 412.1L678.0 413.6L675.9 415.2L676.1 415.3L676.7 414.1L677.1 414.7L676.7 414.6L673.7 415.2L674.2 413.8L675.6 410.0L676.9 405.6L677.8 402.0L678.2 398.5L678.3 394.4L678.2 390.5L678.1 387.7Z M700.5 409.8L703.3 410.7L707.2 411.9L711.6 413.2L715.8 414.2L720.4 414.7L725.7 415.0L731.0 415.6L735.7 416.9L739.1 419.7L740.6 422.8L741.0 425.4L741.3 427.0L739.3 428.2L738.0 427.1L736.3 425.8L734.5 424.9L732.7 424.3L729.4 423.5L724.6 422.6L719.2 421.5L714.2 420.0L709.7 417.9L705.5 415.4L702.1 413.1L699.7 411.5Z M691.0 411.3L689.6 414.4L687.5 418.8L684.9 423.9L682.0 429.1L678.5 434.1L674.7 439.2L670.8 444.4L667.0 449.5L663.2 454.5L659.3 459.5L655.9 464.3L652.9 468.9L650.3 473.9L648.0 479.1L645.8 484.1L643.4 488.5L641.0 492.2L638.5 495.5L635.6 498.7L632.4 502.0L628.2 505.6L623.2 509.8L618.4 513.6L615.1 516.4L613.9 516.0L612.7 511.9L610.9 506.0L609.4 499.2L608.9 492.7L609.4 487.1L610.6 481.7L612.6 476.4L615.4 471.2L619.1 466.2L623.6 461.4L628.7 456.9L633.8 452.4L639.1 448.1L644.4 444.1L649.6 440.5L654.7 436.9L659.8 433.2L665.0 429.4L670.1 425.7L674.6 422.4L679.1 419.0L683.5 415.6L687.3 412.6L690.0 410.5Z M684.6 417.3L684.2 420.8L683.6 425.9L682.8 431.7L681.7 437.2L680.0 442.5L677.9 448.0L675.8 453.3L673.7 458.1L671.8 462.1L669.9 465.5L668.2 468.6L666.6 471.7L665.0 475.2L663.4 478.9L662.0 482.1L661.0 484.4L660.0 484.1L660.6 481.7L661.6 478.2L662.7 474.4L663.8 470.6L665.0 467.1L666.3 463.8L667.6 460.3L668.9 456.3L670.3 451.4L671.8 446.0L673.3 440.4L674.9 435.2L676.9 430.0L679.1 424.7L681.1 420.0L682.5 416.7Z M630.6 438.6L631.2 440.2L632.2 442.7L632.9 446.1L632.2 449.9L629.9 453.2L626.7 455.9L623.6 458.1L621.5 459.6L619.8 458.2L620.9 455.9L622.5 452.6L624.0 449.3L624.8 447.0L625.3 445.4L625.8 443.2L626.2 440.8L626.5 439.0Z M699.6 410.0L702.3 410.9L706.0 412.2L710.1 413.5L714.0 414.6L717.7 415.2L721.8 415.7L726.0 416.4L730.0 417.7L733.6 419.9L736.7 422.6L739.1 425.1L740.7 426.9L739.9 428.1L737.7 427.1L734.6 425.8L731.1 424.4L727.9 423.3L724.6 422.5L720.7 421.7L716.6 420.7L712.5 419.4L708.5 417.5L704.6 415.3L701.2 413.2L698.9 411.7Z M746.4 410.0L753.3 408.4L763.0 408.6L770.0 410.0L772.1 412.8L771.6 416.7L770.0 420.5L767.5 423.7L763.9 426.6L760.4 429.2L757.3 431.7L754.2 433.9L751.7 434.5L749.8 432.8L748.3 429.7L747.3 425.7L745.8 420.4L744.8 414.3Z M742.1 446.7L744.6 444.9L748.7 443.7L753.4 441.4L759.2 435.9L765.5 429.3L770.0 426.6L771.6 431.0L771.5 439.2L770.0 446.7L767.1 451.8L762.9 456.1L758.6 459.8L754.4 463.5L750.0 466.6L746.8 467.6L745.4 465.5L745.0 461.3L744.7 457.2L743.3 453.5L741.9 449.8Z M728.7 468.9L727.9 471.1L726.8 474.5L725.1 478.3L722.3 481.8L718.4 484.4L714.2 486.3L710.2 487.9L706.8 489.8L703.7 492.2L700.5 495.0L697.1 498.2L693.6 501.5L690.0 504.7L686.3 508.1L682.8 511.4L679.6 514.8L676.7 518.1L674.1 521.5L671.5 525.1L669.1 528.8L666.8 532.8L664.5 537.1L662.3 541.6L660.1 545.8L657.7 550.2L655.3 554.6L653.2 558.5L651.8 561.2L647.2 558.9L648.5 556.1L650.4 552.1L652.5 547.6L654.6 543.2L656.6 538.8L658.6 534.3L660.7 529.7L663.0 525.3L665.4 521.1L667.9 517.2L670.6 513.4L673.5 509.6L676.8 505.8L680.3 502.0L683.9 498.4L687.4 495.0L690.9 491.6L694.3 488.3L698.0 485.1L702.2 482.2L706.7 480.0L711.3 478.5L715.2 477.3L718.1 476.2L720.7 474.5L723.4 472.2L725.8 469.8L727.5 468.1Z M693.6 513.5L692.2 515.5L690.2 518.3L688.1 521.5L686.4 524.7L685.0 528.0L683.6 531.7L682.3 535.7L681.0 540.1L679.5 545.3L677.9 551.3L676.5 556.8L675.5 560.6L670.6 559.5L671.4 555.6L672.6 550.0L674.1 543.9L675.6 538.4L677.1 534.0L678.6 529.8L680.4 525.9L682.5 522.4L685.1 519.2L688.1 516.4L690.8 514.2L692.7 512.6Z M753.7 470.6L753.0 472.7L752.1 475.7L750.7 479.0L748.5 482.0L745.3 484.4L741.5 486.2L738.0 487.5L735.6 488.5L734.6 487.0L736.5 485.2L739.2 482.6L742.0 479.9L744.3 477.7L746.4 475.7L748.8 473.5L750.9 471.4L752.4 469.9Z M737.7 452.7L740.4 450.4L744.3 447.0L748.8 443.2L753.2 439.5L757.3 435.8L761.5 431.9L765.8 428.1L770.2 424.7L774.7 421.8L779.2 419.4L783.4 417.4L787.2 415.8L790.7 414.9L793.9 414.5L796.3 414.4L797.9 414.4L799.1 420.3L797.6 420.9L795.5 421.7L793.2 422.8L790.6 424.1L787.4 425.8L783.7 427.7L779.8 430.0L776.2 432.7L772.6 435.8L768.8 439.5L765.1 443.6L761.8 447.6L758.6 452.0L755.5 456.7L752.9 461.1L751.0 464.1Z M801.5 416.6L802.7 419.5L804.5 423.7L806.6 428.5L808.6 433.3L810.7 437.9L812.9 442.9L815.1 448.4L816.8 454.6L817.8 461.6L818.3 469.0L818.6 475.5L818.8 479.9L799.2 480.2L799.3 475.7L799.4 469.4L799.5 462.7L799.4 456.9L799.1 452.0L798.5 446.8L797.8 441.5L797.2 436.3L796.7 431.0L796.2 425.8L795.8 421.3L795.6 418.1Z M808.4 416.1L810.6 416.2L814.0 416.3L818.1 417.4L822.0 420.4L824.4 425.0L825.9 430.3L826.9 435.9L827.4 441.5L827.5 447.0L827.0 452.6L826.3 458.0L825.6 463.0L824.8 468.0L823.9 473.0L823.0 477.3L822.4 480.3L818.3 479.8L818.4 476.8L818.5 472.4L818.5 467.4L818.6 462.5L818.7 457.4L818.8 452.1L818.8 447.0L818.5 442.1L817.9 437.2L817.1 432.2L816.1 427.8L815.2 424.7L814.2 422.7L812.2 420.6L809.7 418.8L807.9 417.5Z M754.3 470.0L753.5 472.8L752.7 475.6L751.8 478.4L751.0 481.1L746.4 478.9L748.1 476.6L749.7 474.2L751.3 471.8L753.0 469.4Z M792.0 475.2L793.8 472.5L796.6 470.9L800.7 470.0L807.8 468.8L816.2 468.1L821.7 470.0L822.0 476.2L819.4 484.9L816.4 492.7L814.0 498.2L811.1 502.8L807.7 506.7L803.6 510.0L799.0 512.6L793.7 514.5L787.3 515.7L780.3 516.0L774.5 515.8L770.3 514.8L767.3 513.3L766.6 511.0L769.5 507.9L774.7 504.1L779.7 500.6L784.3 497.8L788.8 495.3L792.0 491.8L792.5 486.5L791.8 480.2Z M815.6 503.4L814.9 505.7L814.0 509.1L812.5 512.8L810.1 516.2L806.6 518.7L802.6 520.7L798.5 522.3L794.7 523.8L790.9 525.4L787.1 526.9L783.5 528.2L780.6 529.3L778.3 530.2L776.5 531.0L775.0 531.6L774.0 532.0L773.3 531.0L774.0 530.1L775.1 528.9L776.7 527.5L778.9 526.0L781.8 524.4L785.3 522.7L789.0 521.0L792.8 519.3L796.6 517.6L800.6 516.1L804.2 514.5L807.1 512.8L809.3 510.7L811.4 507.8L813.2 504.9L814.4 502.9Z M728.1 471.7L726.0 474.1L723.1 477.4L719.5 481.3L715.4 485.1L710.6 488.6L705.3 492.2L699.9 495.7L694.8 499.4L690.1 503.2L685.3 507.2L680.9 511.4L676.8 515.8L673.2 520.7L669.9 526.1L666.7 531.9L663.5 537.7L660.1 543.8L656.8 550.2L653.6 556.4L650.6 561.8L647.6 566.5L644.8 570.5L642.5 573.8L640.8 576.2L639.2 575.2L640.5 572.6L642.4 569.0L644.6 564.7L646.9 559.9L649.5 554.3L652.3 548.0L655.4 541.4L658.4 535.1L661.4 529.1L664.3 523.0L667.6 517.1L671.3 511.5L675.5 506.3L680.1 501.6L685.0 497.2L690.0 493.0L695.4 489.1L701.0 485.5L706.5 482.3L711.3 479.4L715.8 476.6L720.2 473.9L724.0 471.6L726.6 470.0Z M754.0 473.2L752.4 475.1L750.0 477.9L747.3 480.9L744.6 483.4L741.8 485.3L738.7 487.0L736.0 488.3L734.1 489.2L732.8 487.4L734.3 485.9L736.5 483.8L738.9 481.5L741.5 479.3L744.4 477.3L747.8 475.2L750.9 473.4L753.1 472.1Z M693.7 512.4L691.9 514.7L689.4 517.9L686.6 521.7L684.0 525.7L681.5 529.9L679.0 534.6L676.4 539.6L673.7 545.0L671.0 550.7L668.2 556.9L665.4 563.3L662.3 569.4L659.1 575.2L655.7 580.9L652.4 586.0L649.6 590.4L647.1 594.0L645.0 596.9L643.3 599.1L642.1 600.7L637.9 597.8L639.0 596.1L640.4 593.8L642.3 590.8L644.4 587.2L647.0 582.7L650.0 577.5L653.1 571.9L656.1 566.2L658.9 560.3L661.7 554.0L664.5 547.7L667.4 541.8L670.5 536.4L673.5 531.4L676.7 526.8L679.9 522.6L683.4 518.9L687.2 515.8L690.5 513.2L692.8 511.5Z M685.2 539.9L685.2 543.4L685.2 548.4L685.0 554.0L684.4 559.5L683.5 564.8L682.2 570.1L680.6 575.5L678.6 580.8L675.8 586.3L672.5 591.7L669.3 596.5L667.2 599.8L665.2 598.7L667.1 595.2L669.8 590.2L672.5 584.6L674.8 579.3L676.2 574.2L677.4 569.0L678.4 563.7L679.4 558.6L680.7 553.4L682.0 548.0L683.1 543.2L683.9 539.8Z M766.7 500.8L763.7 502.3L759.4 504.4L755.0 506.9L751.3 509.5L747.9 512.5L744.3 516.1L740.7 520.2L737.2 524.3L734.0 528.5L731.0 532.9L728.0 537.7L725.1 542.4L722.6 547.4L720.2 552.6L717.6 558.2L714.5 563.7L710.7 569.1L706.6 574.3L702.3 579.2L698.0 583.9L693.5 588.3L688.9 592.4L684.9 595.9L682.1 598.7L680.4 601.0L679.0 603.5L677.9 605.9L677.0 607.9L667.6 604.6L668.1 602.7L668.8 599.5L670.3 595.5L673.0 591.1L677.0 587.2L681.5 583.6L686.1 580.0L690.3 576.2L694.2 572.0L698.2 567.4L702.0 562.6L705.3 557.9L708.0 553.2L710.4 548.1L712.9 542.7L715.6 537.3L718.4 532.1L721.3 526.9L724.4 521.8L727.9 517.0L731.8 512.4L735.9 507.9L740.4 503.9L745.3 500.4L750.9 497.9L756.6 496.5L761.5 495.7L764.8 495.1Z M771.0 530.9L770.6 533.5L770.0 537.3L769.2 541.5L767.8 545.7L765.8 549.6L763.5 553.3L761.2 556.9L759.3 560.2L757.9 563.4L756.4 567.4L754.1 572.4L750.5 577.7L745.8 582.6L740.6 587.2L735.0 591.4L729.2 595.2L722.9 598.5L716.3 601.2L710.0 603.4L704.3 605.4L698.6 607.1L693.1 608.7L688.3 609.9L685.0 610.7L682.3 605.3L685.0 603.1L688.9 600.1L693.3 596.6L698.0 593.1L703.0 589.6L708.4 586.0L713.7 582.4L718.5 578.9L723.3 575.3L728.0 571.6L732.4 568.1L735.7 564.9L737.8 562.3L739.5 559.3L741.5 555.4L744.3 551.0L747.5 546.9L750.7 543.3L753.7 540.2L756.7 537.5L760.0 535.1L763.7 532.9L766.9 531.0L769.2 529.6Z M692.6 609.3L696.4 609.1L702.0 608.8L708.4 608.7L714.4 609.3L719.9 610.9L725.1 613.2L729.4 615.4L732.4 616.9L729.3 624.3L726.1 623.2L721.7 621.7L716.8 620.2L712.3 618.9L707.4 617.9L701.5 616.9L696.1 616.0L692.2 615.4Z M657.3 601.3L656.7 603.3L655.9 606.2L655.0 609.4L654.1 612.3L653.2 614.9L652.2 617.4L651.3 619.7L650.7 621.3L646.8 619.8L647.4 618.2L648.2 615.9L649.2 613.3L650.3 610.7L651.7 608.0L653.3 605.1L654.9 602.5L655.9 600.7Z M640.0 470.0L645.4 467.2L652.8 467.6L657.5 470.0L657.1 474.7L654.0 481.4L650.5 487.5L646.9 493.5L642.8 498.9L640.0 499.7L638.6 491.8L638.3 479.3Z M614.1 610.0L611.2 612.6L606.9 616.2L602.4 620.3L598.4 624.5L595.0 628.7L591.8 633.4L588.7 638.3L585.7 643.6L582.8 649.3L580.1 655.6L577.5 661.9L574.8 667.5L572.2 672.4L569.7 676.7L567.2 680.6L564.6 684.1L561.7 687.0L558.7 689.3L556.1 691.0L554.4 692.2L553.2 690.8L554.7 689.3L556.8 687.1L559.1 684.5L561.3 681.5L563.5 678.2L565.8 674.4L568.2 670.2L570.7 665.4L573.2 660.0L575.9 653.8L578.6 647.4L581.6 641.4L584.6 636.0L587.8 630.7L591.2 625.8L595.0 621.3L599.8 617.3L605.1 613.7L609.9 610.8L613.3 608.8Z M640.3 577.2L645.2 574.5L650.7 574.6L655.5 575.0L659.5 574.3L662.8 573.8L664.2 575.0L662.8 578.8L659.4 584.3L655.5 590.2L651.3 597.1L646.6 604.4L642.4 609.8L639.4 612.2L636.9 612.7L634.8 612.0L632.6 610.9L630.7 608.8L630.5 604.4L632.5 595.8L636.1 585.1Z M657.3 600.3L656.4 603.5L655.2 608.1L653.7 613.1L652.1 617.4L650.4 620.8L648.6 623.9L646.6 626.6L644.3 629.1L641.4 631.3L638.2 633.2L635.3 634.7L633.3 635.8L632.0 634.0L633.6 632.4L636.0 630.3L638.5 627.8L640.6 625.5L642.5 623.2L644.3 620.9L646.1 618.3L648.0 615.3L650.1 611.5L652.4 607.0L654.5 602.7L655.9 599.8Z M626.4 620.8L626.0 624.7L625.4 630.4L624.2 637.2L621.6 643.9L617.6 649.8L612.8 655.2L607.6 660.3L602.7 665.3L597.9 670.3L593.0 675.1L588.5 679.7L584.4 684.0L580.7 688.4L577.2 693.0L574.1 697.1L571.9 699.9L569.2 698.3L570.7 695.0L572.7 690.3L575.3 684.9L578.5 679.4L582.3 674.3L586.7 669.2L591.0 664.2L595.1 658.9L598.9 653.3L602.6 647.4L605.9 641.7L608.8 636.8L611.7 632.0L614.7 626.8L617.3 622.0L619.3 618.5Z M634.9 638.8L634.3 642.2L633.5 647.2L632.3 652.7L630.3 657.7L627.3 661.9L623.8 665.4L620.2 668.3L616.8 670.6L613.5 672.4L610.3 673.4L607.4 674.0L604.7 674.7L601.7 675.6L598.6 676.6L595.8 677.4L593.8 678.0L593.1 676.7L594.6 675.3L596.8 673.4L599.3 671.2L601.8 669.1L604.3 667.3L606.7 665.6L609.0 664.1L611.5 662.3L614.6 660.3L618.0 658.1L621.3 655.8L624.1 653.4L626.8 650.1L629.5 645.7L631.8 641.4L633.5 638.3Z M563.0 705.7L562.7 709.1L561.3 714.0L559.7 718.7L558.7 722.8L557.5 726.8L555.3 730.7L551.4 734.5L546.4 738.2L541.2 741.6L536.0 744.7L530.6 747.6L524.8 750.3L517.9 753.1L510.6 755.6L505.2 756.8L502.9 756.0L502.4 753.8L503.1 751.4L504.6 749.0L507.3 746.3L510.7 743.8L515.0 741.6L520.0 739.6L524.8 737.2L529.4 734.3L533.8 731.1L537.9 727.4L541.9 723.2L545.6 718.5L548.8 714.4L551.3 710.8L553.2 707.8L555.3 705.7L558.2 704.5L561.2 704.4Z M548.4 701.6L547.7 703.9L546.7 707.2L545.2 711.1L542.6 714.7L539.0 717.8L534.6 720.6L530.1 723.3L526.0 725.9L522.3 728.6L518.6 731.5L515.1 734.2L512.0 736.6L509.3 738.8L506.8 740.8L504.7 742.5L503.3 743.7L502.0 742.5L503.1 741.0L504.7 738.8L506.8 736.1L509.3 733.5L512.4 730.9L515.9 728.1L519.8 725.3L523.7 722.5L527.9 719.7L532.4 717.0L536.5 714.3L539.7 711.8L542.1 709.1L544.2 706.0L545.8 703.1L547.0 701.0Z M570.7 712.3L570.5 715.2L570.3 719.5L569.8 724.2L568.7 728.4L567.0 732.0L564.7 735.1L562.1 737.8L559.1 740.0L555.5 741.2L551.8 741.6L548.6 741.6L546.4 741.6L546.0 739.4L548.0 738.6L550.8 737.4L553.6 736.0L555.9 734.5L558.1 732.9L560.5 731.0L562.7 728.9L564.6 726.5L566.1 723.2L567.4 718.9L568.4 714.9L569.2 712.1Z M541.7 746.5L540.8 747.8L539.5 749.7L537.5 751.9L534.5 753.8L530.6 755.1L526.0 756.1L521.2 757.0L516.6 757.8L511.7 758.5L506.6 759.2L502.1 759.7L498.9 760.1L498.5 757.9L501.6 757.2L506.1 756.1L511.0 754.9L515.7 753.7L520.2 752.5L524.9 751.3L529.2 750.1L532.6 749.0L535.2 748.1L537.4 747.1L539.3 746.1L540.7 745.4Z M676.2 575.0L695.4 573.7L721.3 574.0L740.0 575.0L745.6 577.1L744.1 580.0L740.0 582.6L733.8 584.5L724.9 586.2L716.5 588.1L709.4 590.3L702.8 592.7L696.9 595.7L692.1 599.9L688.0 604.6L683.8 607.7L678.6 608.2L673.2 607.0L669.7 604.4L669.1 599.8L670.3 593.8L671.8 588.1L670.9 583.0L670.3 578.3Z M662.7 619.3L664.0 621.0L665.7 623.5L668.0 626.2L671.0 629.0L675.2 631.8L680.5 635.0L686.3 638.5L692.1 642.5L697.7 647.1L703.4 652.3L708.9 657.4L714.0 662.2L718.9 666.7L723.5 671.1L727.7 675.1L731.4 678.5L734.5 681.2L737.1 683.2L739.5 685.1L742.0 687.3L744.6 689.9L747.0 692.6L749.2 695.1L750.9 697.3L752.0 699.0L752.9 700.5L753.5 701.8L753.9 702.7L752.4 704.3L751.5 703.9L750.2 703.3L748.5 702.4L746.7 701.0L744.8 698.9L742.6 696.4L740.4 693.7L738.2 691.3L736.0 689.4L733.6 687.6L730.9 685.5L727.7 682.7L723.9 679.2L719.6 675.2L715.0 670.8L710.2 666.3L705.1 661.5L699.5 656.4L694.0 651.4L688.6 646.9L683.3 642.9L677.8 639.2L672.6 635.6L668.3 632.1L665.3 628.4L663.4 624.9L662.2 622.0L661.4 620.0Z M690.0 575.0L706.5 572.8L729.0 573.6L744.4 575.0L746.6 576.5L741.8 578.7L735.7 581.1L729.8 583.4L722.7 585.9L716.1 588.5L710.6 591.3L705.5 594.2L700.9 596.8L696.5 599.8L692.7 602.4L690.0 601.6L687.2 594.1L685.6 583.0Z M695.4 612.4L698.3 611.7L702.7 610.6L708.1 610.0L714.1 610.9L719.7 613.7L725.0 617.4L729.9 621.7L734.4 626.3L738.6 631.4L742.5 637.1L745.9 643.1L748.8 649.1L751.1 655.4L752.6 661.6L753.8 667.3L755.0 672.5L756.4 677.4L757.8 682.1L759.2 686.6L760.8 690.7L762.4 694.6L764.1 698.1L765.9 701.4L767.7 704.6L769.5 707.7L771.4 710.7L773.1 713.3L774.3 715.1L773.3 715.9L771.9 714.3L769.7 712.1L767.2 709.4L764.7 706.7L762.3 704.0L759.7 701.1L757.0 697.9L754.3 694.5L751.4 690.7L748.5 686.7L745.6 682.5L742.6 677.8L739.7 672.8L736.8 667.5L734.0 662.5L731.3 657.6L728.5 652.6L725.5 647.2L722.5 642.0L719.6 637.0L716.8 632.0L714.2 627.0L711.7 622.7L709.5 619.7L706.6 617.7L702.6 616.4L698.5 615.7L695.5 615.1Z M763.4 685.6L765.9 688.1L769.4 691.6L773.4 695.4L777.3 698.9L781.0 701.9L784.9 704.8L788.8 707.7L792.3 710.3L795.5 712.5L798.6 714.4L801.3 716.4L803.6 718.7L805.0 721.3L805.5 724.0L805.6 726.2L805.7 727.7L804.3 728.0L803.7 726.6L803.0 724.7L802.0 722.7L800.7 721.0L798.9 719.4L796.4 717.6L793.4 715.5L790.2 713.2L786.6 710.7L782.7 707.9L778.6 704.9L774.8 701.6L771.2 697.6L767.6 693.2L764.6 689.2L762.5 686.5Z M780.4 716.6L783.9 717.8L787.7 720.8L791.3 724.2L795.4 727.9L799.4 732.0L800.6 735.1L797.2 736.3L791.1 736.5L785.8 737.2L782.8 739.3L780.6 741.8L778.2 743.8L774.5 745.0L770.6 745.7L768.4 744.9L769.4 741.7L772.1 737.1L773.8 732.9L773.1 729.7L771.4 726.9L771.0 724.2L773.2 721.0L776.7 717.9Z M755.6 711.0L756.3 713.8L757.4 717.9L758.2 722.5L757.9 726.8L756.3 730.3L753.7 733.2L750.8 735.7L747.8 737.9L744.5 739.9L740.9 741.7L737.3 743.2L734.2 744.4L731.5 745.2L729.0 745.6L726.9 745.8L725.5 746.0L725.1 744.6L726.4 744.0L728.2 743.2L730.4 742.2L732.9 741.0L735.8 739.6L739.1 738.0L742.5 736.3L745.5 734.4L748.4 732.5L751.2 730.4L753.4 728.2L754.9 725.9L755.4 722.6L755.1 718.3L754.5 714.1L754.2 711.2Z M734.6 747.5L736.8 746.1L740.9 744.4L745.5 743.1L751.1 742.1L757.1 741.4L760.8 741.6L760.8 743.6L758.6 746.5L755.3 748.8L751.0 749.7L745.7 749.8L741.2 749.7L737.8 749.2L735.2 748.5Z M745.5 754.7L752.4 752.9L762.6 751.0L769.5 750.3L770.1 751.9L767.5 754.6L764.0 756.8L760.0 757.9L755.0 758.4L751.0 758.4L747.5 757.5L744.9 756.1Z"/><g fill="none" stroke="#dea49d" stroke-width="0.9"><path d="M454.2 356V431M420 393.2H492M448.5 362.5L454.2 356L460 362.5M485 386.5L492 393.2L485 400"/></g><g style="mix-blend-mode:lighten"><ellipse cx="613.7" cy="355" rx="26" ry="20" fill="url(#hl)"/><ellipse cx="692" cy="385" rx="18" ry="24" fill="url(#hl)"/><ellipse cx="746" cy="402" rx="30" ry="24" fill="url(#hl)"/><ellipse cx="810" cy="444" rx="22" ry="34" fill="url(#hl)"/><ellipse cx="797" cy="498" rx="30" ry="24" fill="url(#hl)"/><ellipse cx="738" cy="566" rx="22" ry="36" fill="url(#hl)"/><ellipse cx="740" cy="651" rx="20" ry="34" fill="url(#hl)"/><ellipse cx="636" cy="476" rx="18" ry="26" fill="url(#hl)"/><ellipse cx="717" cy="258" rx="12" ry="26" fill="url(#hl)"/><ellipse cx="746" cy="324" rx="30" ry="18" fill="url(#hl)"/><ellipse cx="660" cy="560" rx="14" ry="30" fill="url(#hl)"/><ellipse cx="715" cy="610" rx="30" ry="14" fill="url(#hl)"/><ellipse cx="605" cy="665" rx="10" ry="22" fill="url(#hl)"/></g><g fill-opacity="0.8" stroke="#157f6a" stroke-width="0.7" stroke-linejoin="round"><path fill="#6ae848" d="M738.8 189.3 L734.2 178.6 L764.8 104.0 L741.4 180.8 Z"/><path fill="#2fb020" d="M738.8 189.3 L748.6 183.0 L764.8 104.0 L741.4 180.8 Z"/><path fill="none" d="M734.2 178.6 L748.6 183.0"/></g><g fill-opacity="0.8" stroke="#157f6a" stroke-width="0.7" stroke-linejoin="round"><path fill="#f4b850" d="M683.8 293.6 L681.2 282.2 L733.5 195.8 L687.8 285.6 Z"/><path fill="#c07a18" d="M683.8 293.6 L694.5 289.0 L733.5 195.8 L687.8 285.6 Z"/><path fill="none" d="M681.2 282.2 L694.5 289.0"/></g><g fill-opacity="0.8" stroke="#157f6a" stroke-width="0.7" stroke-linejoin="round"><path fill="#24b040" d="M665.7 341.1 L658.2 345.3 L591.0 326.8 L659.2 339.9 Z"/><path fill="#50e860" d="M665.7 341.1 L660.3 334.5 L591.0 326.8 L659.2 339.9 Z"/><path fill="none" d="M658.2 345.3 L660.3 334.5"/></g><g fill-opacity="0.8" stroke="#157f6a" stroke-width="0.7" stroke-linejoin="round"><path fill="#18b878" d="M665.7 363.0 L665.3 366.8 L640.7 386.6 L663.5 365.0 Z"/><path fill="#0c9058" d="M665.7 363.0 L661.8 363.2 L640.7 386.6 L663.5 365.0 Z"/><path fill="none" d="M665.3 366.8 L661.8 363.2"/></g><g fill-opacity="0.95" stroke="#157f6a" stroke-width="0.7" stroke-linejoin="round"><path fill="#60b8f8" d="M636.0 389.7 L640.1 398.2 L613.7 477.2 L634.2 396.7 Z"/><path fill="#3a90d8" d="M636.0 389.7 L628.4 395.2 L613.7 477.2 L634.2 396.7 Z"/><path fill="none" d="M640.1 398.2 L628.4 395.2"/></g><g fill-opacity="0.8" stroke="#157f6a" stroke-width="0.7" stroke-linejoin="round"><path fill="#f858a8" d="M677.9 349.0 L674.8 344.6 L681.8 294.8 L678.2 344.8 Z"/><path fill="#c83088" d="M677.9 349.0 L681.7 345.1 L681.8 294.8 L678.2 344.8 Z"/><path fill="none" d="M674.8 344.6 L681.7 345.1"/></g><g fill-opacity="0.8" stroke="#157f6a" stroke-width="0.7" stroke-linejoin="round"><path fill="#d8c848" d="M687.0 350.7 L684.9 346.7 L694.9 317.6 L687.8 347.4 Z"/><path fill="#a8a030" d="M687.0 350.7 L690.7 348.1 L694.9 317.6 L687.8 347.4 Z"/><path fill="none" d="M684.9 346.7 L690.7 348.1"/></g><g fill-opacity="0.8" stroke="#157f6a" stroke-width="0.7" stroke-linejoin="round"><path fill="#d82878" d="M692.3 407.2 L688.2 403.5 L685.3 355.1 L691.7 403.0 Z"/><path fill="#981058" d="M692.3 407.2 L695.2 402.5 L685.3 355.1 L691.7 403.0 Z"/><path fill="none" d="M688.2 403.5 L695.2 402.5"/></g><g fill-opacity="0.8" stroke="#157f6a" stroke-width="0.7" stroke-linejoin="round"><path fill="#5848d8" d="M733.3 377.3 L728.2 379.2 L690.5 362.4 L729.4 375.9 Z"/><path fill="#3020a8" d="M733.3 377.3 L730.5 372.6 L690.5 362.4 L729.4 375.9 Z"/><path fill="none" d="M728.2 379.2 L730.5 372.6"/></g><g fill-opacity="0.8" stroke="#157f6a" stroke-width="0.7" stroke-linejoin="round"><path fill="#1490b0" d="M767.1 400.7 L761.8 401.3 L734.2 377.8 L763.8 398.4 Z"/><path fill="#0c7090" d="M767.1 400.7 L765.8 395.6 L734.2 377.8 L763.8 398.4 Z"/><path fill="none" d="M761.8 401.3 L765.8 395.6"/></g><g fill-opacity="0.8" stroke="#157f6a" stroke-width="0.7" stroke-linejoin="round"><path fill="#18b070" d="M781.9 434.8 L779.1 433.4 L767.9 403.4 L780.9 432.6 Z"/><path fill="#109058" d="M781.9 434.8 L782.8 431.8 L767.9 403.4 L780.9 432.6 Z"/><path fill="none" d="M779.1 433.4 L782.8 431.8"/></g><g fill-opacity="0.8" stroke="#157f6a" stroke-width="0.7" stroke-linejoin="round"><path fill="#18b070" d="M781.9 435.7 L784.3 437.7 L786.8 464.8 L782.3 438.0 Z"/><path fill="#109058" d="M781.9 435.7 L780.3 438.4 L786.8 464.8 L782.3 438.0 Z"/><path fill="none" d="M784.3 437.7 L780.3 438.4"/></g><g fill-opacity="0.8" stroke="#157f6a" stroke-width="0.7" stroke-linejoin="round"><path fill="#d0ec40" d="M779.3 440.9 L778.6 445.6 L744.4 472.4 L776.6 443.3 Z"/><path fill="#88b828" d="M779.3 440.9 L774.6 441.1 L744.4 472.4 L776.6 443.3 Z"/><path fill="none" d="M778.6 445.6 L774.6 441.1"/></g><g fill-opacity="0.95" stroke="#2a9a58" stroke-width="0.7" stroke-linejoin="round"><path fill="#e8f060" d="M830.0 435.7 L839.3 427.4 L938.3 432.2 L839.6 435.4 Z"/><path fill="#d0d848" d="M830.0 435.7 L839.9 443.4 L938.3 432.2 L839.6 435.4 Z"/><path fill="none" d="M839.3 427.4 L839.9 443.4"/></g><g fill-opacity="0.95" stroke="#157f6a" stroke-width="0.7" stroke-linejoin="round"><path fill="#c068fc" d="M622.4 500.8 L619.5 484.7 L689.7 411.7 L629.1 491.9 Z"/><path fill="#6a20b8" d="M622.4 500.8 L638.7 499.2 L689.7 411.7 L629.1 491.9 Z"/><path fill="none" d="M619.5 484.7 L638.7 499.2"/></g><g fill-opacity="0.9" stroke="#157f6a" stroke-width="0.7" stroke-linejoin="round"><path fill="#60eca0" d="M732.6 484.0 L733.4 501.9 L636.3 611.6 L724.3 495.0 Z"/><path fill="#18a860" d="M732.6 484.0 L715.1 488.1 L636.3 611.6 L724.3 495.0 Z"/><path fill="none" d="M733.4 501.9 L715.1 488.1"/></g><g fill-opacity="0.95" stroke="#157f6a" stroke-width="0.7" stroke-linejoin="round"><path fill="#70f0e8" d="M789.9 473.1 L790.3 492.7 L682.8 607.1 L780.5 484.9 Z"/><path fill="#10989a" d="M789.9 473.1 L770.7 477.1 L682.8 607.1 L780.5 484.9 Z"/><path fill="none" d="M790.3 492.7 L770.7 477.1"/></g><g fill-opacity="0.95" stroke="#157f6a" stroke-width="0.7" stroke-linejoin="round"><path fill="#509cf4" d="M633.3 615.3 L633.2 628.6 L560.8 700.9 L626.7 623.1 Z"/><path fill="#1858a8" d="M633.3 615.3 L620.2 617.6 L560.8 700.9 L626.7 623.1 Z"/><path fill="none" d="M633.2 628.6 L620.2 617.6"/></g><g fill-opacity="0.95" stroke="#157f6a" stroke-width="0.7" stroke-linejoin="round"><path fill="#7c70f8" d="M678.6 612.5 L693.3 614.4 L773.8 716.1 L686.3 620.9 Z"/><path fill="#1c1cc0" d="M678.6 612.5 L679.3 627.3 L773.8 716.1 L686.3 620.9 Z"/><path fill="none" d="M693.3 614.4 L679.3 627.3"/></g><g fill-opacity="0.8" stroke="#157f6a" stroke-width="0.7" stroke-linejoin="round"><path fill="#b850f0" d="M557.9 699.6 L557.8 705.0 L524.4 737.2 L555.2 702.7 Z"/><path fill="#7828b8" d="M557.9 699.6 L552.5 700.4 L524.4 737.2 L555.2 702.7 Z"/><path fill="none" d="M557.8 705.0 L552.5 700.4"/></g><g fill-opacity="0.8" stroke="#157f6a" stroke-width="0.7" stroke-linejoin="round"><path fill="#b83060" d="M523.1 738.3 L521.0 741.6 L490.0 749.2 L520.3 739.3 Z"/><path fill="#802040" d="M523.1 738.3 L519.5 736.9 L490.0 749.2 L520.3 739.3 Z"/><path fill="none" d="M521.0 741.6 L519.5 736.9"/></g><g fill-opacity="0.8" stroke="#157f6a" stroke-width="0.7" stroke-linejoin="round"><path fill="#e850d0" d="M778.9 724.0 L778.3 727.8 L747.7 751.8 L776.6 726.0 Z"/><path fill="#a82898" d="M778.9 724.0 L774.9 724.1 L747.7 751.8 L776.6 726.0 Z"/><path fill="none" d="M778.3 727.8 L774.9 724.1"/></g><g fill-opacity="0.8" stroke="#157f6a" stroke-width="0.7" stroke-linejoin="round"><path fill="#d06030" d="M745.7 752.5 L743.2 755.5 L705.2 759.7 L742.8 753.0 Z"/><path fill="#a04018" d="M745.7 752.5 L742.4 750.5 L705.2 759.7 L742.8 753.0 Z"/><path fill="none" d="M743.2 755.5 L742.4 750.5"/></g><g fill-opacity="0.85" stroke="#157f6a" stroke-width="0.7" stroke-linejoin="round"><path fill="#30c8c8" d="M764.8 104.0 L765.5 100.9 L824.2 58.6 L766.7 102.5 Z"/><path fill="#1890a0" d="M764.8 104.0 L767.9 104.1 L824.2 58.6 L766.7 102.5 Z"/><path fill="none" d="M765.5 100.9 L767.9 104.1"/></g><g fill-opacity="0.85" stroke="#157f6a" stroke-width="0.7" stroke-linejoin="round"><path fill="#20a0a0" d="M764.8 104.0 L762.8 102.8 L757.8 84.8 L764.2 102.3 Z"/><path fill="#188888" d="M764.8 104.0 L765.6 101.8 L757.8 84.8 L764.2 102.3 Z"/><path fill="none" d="M762.8 102.8 L765.6 101.8"/></g><g fill-opacity="0.85" stroke="#157f6a" stroke-width="0.7" stroke-linejoin="round"><path fill="#20a0a0" d="M757.8 84.8 L755.7 83.7 L748.2 62.9 L757.1 83.1 Z"/><path fill="#188888" d="M757.8 84.8 L758.5 82.5 L748.2 62.9 L757.1 83.1 Z"/><path fill="none" d="M755.7 83.7 L758.5 82.5"/></g><g fill-opacity="0.85" stroke="#157f6a" stroke-width="0.7" stroke-linejoin="round"><path fill="#20a0a0" d="M748.2 62.9 L745.9 62.4 L733.4 43.7 L747.1 61.5 Z"/><path fill="#188888" d="M748.2 62.9 L748.3 60.6 L733.4 43.7 L747.1 61.5 Z"/><path fill="none" d="M745.9 62.4 L748.3 60.6"/></g><g fill-opacity="0.85" stroke="#157f6a" stroke-width="0.7" stroke-linejoin="round"><path fill="#20a0a0" d="M733.4 43.7 L731.2 44.1 L720.3 35.0 L732.1 42.9 Z"/><path fill="#188888" d="M733.4 43.7 L732.9 41.6 L720.3 35.0 L732.1 42.9 Z"/><path fill="none" d="M731.2 44.1 L732.9 41.6"/></g><g fill-opacity="0.85" stroke="#157f6a" stroke-width="0.7" stroke-linejoin="round"><path fill="#20a0a0" d="M748.2 62.9 L745.9 63.6 L714.1 47.2 L746.6 62.2 Z"/><path fill="#188888" d="M748.2 62.9 L747.2 60.8 L714.1 47.2 L746.6 62.2 Z"/><path fill="none" d="M745.9 63.6 L747.2 60.8"/></g><g fill-opacity="0.85" stroke="#157f6a" stroke-width="0.7" stroke-linejoin="round"><path fill="#20a0a0" d="M757.8 84.8 L756.1 83.8 L743.8 45.5 L757.3 83.4 Z"/><path fill="#188888" d="M757.8 84.8 L758.5 82.9 L743.8 45.5 L757.3 83.4 Z"/><path fill="none" d="M756.1 83.8 L758.5 82.9"/></g><g stroke="#13665c" stroke-width="0.9"><rect x="717.0" y="34.0" width="4.8" height="4.8" fill="#e4f000"/><rect x="725.7" y="35.2" width="4.8" height="4.8" fill="#e4f000"/><rect x="735.3" y="33.5" width="4.8" height="4.8" fill="#e4f000"/><rect x="729.2" y="37.8" width="4.8" height="4.8" fill="#e4f000"/><rect x="743.2" y="37.8" width="4.8" height="4.8" fill="#e4f000"/><rect x="739.7" y="41.3" width="4.8" height="4.8" fill="#e4f000"/><rect x="714.4" y="44.8" width="4.8" height="4.8" fill="#e4f000"/><rect x="720.5" y="47.4" width="4.8" height="4.8" fill="#e4f000"/><rect x="723.1" y="50.1" width="4.8" height="4.8" fill="#e4f000"/><rect x="717.9" y="54.4" width="4.8" height="4.8" fill="#e4f000"/><rect x="734.5" y="50.9" width="4.8" height="4.8" fill="#e4f000"/><rect x="727.5" y="58.8" width="4.8" height="4.8" fill="#e4f000"/><rect x="731.8" y="61.4" width="4.8" height="4.8" fill="#e4f000"/><rect x="743.2" y="45.7" width="4.8" height="4.8" fill="#e4f000"/><rect x="749.3" y="41.3" width="4.8" height="4.8" fill="#ff2a00"/><rect x="758.9" y="48.0" width="4.8" height="4.8" fill="#ff2a00"/><rect x="745.8" y="48.0" width="4.8" height="4.8" fill="#ff2a00"/><rect x="751.0" y="50.1" width="4.8" height="4.8" fill="#ff2a00"/><rect x="746.7" y="53.6" width="4.8" height="4.8" fill="#ff2a00"/><rect x="756.3" y="54.4" width="4.8" height="4.8" fill="#ff2a00"/><rect x="767.6" y="55.3" width="4.8" height="4.8" fill="#ff2a00"/><rect x="741.4" y="56.2" width="4.8" height="4.8" fill="#ff2a00"/><rect x="753.7" y="60.2" width="4.8" height="4.8" fill="#ff2a00"/><rect x="739.7" y="64.0" width="4.8" height="4.8" fill="#ff2a00"/><rect x="747.6" y="64.0" width="4.8" height="4.8" fill="#ff2a00"/><rect x="743.2" y="66.7" width="4.8" height="4.8" fill="#ff2a00"/><rect x="749.3" y="68.4" width="4.8" height="4.8" fill="#ff2a00"/><rect x="773.8" y="65.8" width="4.8" height="4.8" fill="#ff14e4"/><rect x="775.5" y="71.4" width="4.8" height="4.8" fill="#ff14e4"/><rect x="764.2" y="71.9" width="4.8" height="4.8" fill="#ff14e4"/><rect x="770.3" y="74.5" width="4.8" height="4.8" fill="#ff14e4"/><rect x="752.8" y="76.3" width="4.8" height="4.8" fill="#ff14e4"/><rect x="758.9" y="75.4" width="4.8" height="4.8" fill="#ff14e4"/><rect x="762.4" y="81.5" width="4.8" height="4.8" fill="#ff14e4"/><rect x="755.4" y="80.6" width="4.8" height="4.8" fill="#ff14e4"/><rect x="765.0" y="85.0" width="4.8" height="4.8" fill="#ff14e4"/><rect x="756.3" y="86.7" width="4.8" height="4.8" fill="#ff14e4"/><rect x="768.5" y="88.8" width="4.8" height="4.8" fill="#ff14e4"/><rect x="762.4" y="92.0" width="4.8" height="4.8" fill="#ff14e4"/><rect x="759.8" y="95.1" width="4.8" height="4.8" fill="#ff14e4"/><rect x="767.6" y="99.8" width="4.8" height="4.8" fill="#ff14e4"/><rect x="772.0" y="101.1" width="4.8" height="4.8" fill="#ff14e4"/><rect x="766.8" y="103.3" width="4.8" height="4.8" fill="#ff14e4"/><rect x="774.6" y="105.1" width="4.8" height="4.8" fill="#ff14e4"/><rect x="777.3" y="56.2" width="4.8" height="4.8" fill="#00f0e0"/><rect x="779.9" y="80.6" width="4.8" height="4.8" fill="#00f0e0"/><rect x="792.1" y="78.4" width="4.8" height="4.8" fill="#00f0e0"/><rect x="796.5" y="85.0" width="4.8" height="4.8" fill="#00f0e0"/><rect x="791.2" y="92.0" width="4.8" height="4.8" fill="#00f0e0"/><rect x="786.0" y="98.1" width="4.8" height="4.8" fill="#00f0e0"/><rect x="778.1" y="103.3" width="4.8" height="4.8" fill="#00f0e0"/><rect x="783.4" y="83.3" width="4.8" height="4.8" fill="#00f0e0"/><rect x="789.5" y="63.2" width="4.8" height="4.8" fill="#0414e0"/><rect x="800.8" y="62.3" width="4.8" height="4.8" fill="#0414e0"/><rect x="806.9" y="60.5" width="4.8" height="4.8" fill="#0414e0"/><rect x="811.3" y="61.4" width="4.8" height="4.8" fill="#0414e0"/><rect x="796.5" y="65.8" width="4.8" height="4.8" fill="#0414e0"/><rect x="819.2" y="66.1" width="4.8" height="4.8" fill="#0414e0"/><rect x="807.8" y="72.4" width="4.8" height="4.8" fill="#0414e0"/><rect x="796.5" y="75.4" width="4.8" height="4.8" fill="#0414e0"/><rect x="802.6" y="70.2" width="4.8" height="4.8" fill="#0414e0"/><rect x="808.7" y="75.9" width="4.8" height="4.8" fill="#0414e0"/><rect x="753.7" y="110.3" width="4.8" height="4.8" fill="#3cf014"/><rect x="753.7" y="113.8" width="4.8" height="4.8" fill="#3cf014"/><rect x="751.0" y="116.8" width="4.8" height="4.8" fill="#3cf014"/><rect x="765.0" y="111.2" width="4.8" height="4.8" fill="#3cf014"/><rect x="761.5" y="117.3" width="4.8" height="4.8" fill="#3cf014"/><rect x="767.3" y="121.3" width="4.8" height="4.8" fill="#3cf014"/><rect x="748.4" y="126.6" width="4.8" height="4.8" fill="#3cf014"/><rect x="768.5" y="126.9" width="4.8" height="4.8" fill="#3cf014"/><rect x="744.6" y="130.8" width="4.8" height="4.8" fill="#3cf014"/><rect x="740.6" y="133.0" width="4.8" height="4.8" fill="#3cf014"/><rect x="756.3" y="131.8" width="4.8" height="4.8" fill="#3cf014"/><rect x="752.8" y="139.2" width="4.8" height="4.8" fill="#3cf014"/><rect x="764.5" y="145.3" width="4.8" height="4.8" fill="#3cf014"/><rect x="728.9" y="148.2" width="4.8" height="4.8" fill="#3cf014"/><rect x="733.6" y="148.2" width="4.8" height="4.8" fill="#3cf014"/><rect x="741.1" y="153.1" width="4.8" height="4.8" fill="#3cf014"/><rect x="723.6" y="158.0" width="4.8" height="4.8" fill="#3cf014"/><rect x="726.6" y="160.5" width="4.8" height="4.8" fill="#3cf014"/><rect x="736.2" y="164.0" width="4.8" height="4.8" fill="#3cf014"/><rect x="724.8" y="167.4" width="4.8" height="4.8" fill="#3cf014"/><rect x="753.7" y="167.4" width="4.8" height="4.8" fill="#3cf014"/><rect x="743.2" y="169.7" width="4.8" height="4.8" fill="#3cf014"/><rect x="723.1" y="173.7" width="4.8" height="4.8" fill="#3cf014"/><rect x="721.9" y="181.1" width="4.8" height="4.8" fill="#3cf014"/><rect x="722.4" y="159.3" width="4.8" height="4.8" fill="#3cf014"/><rect x="726.8" y="160.2" width="4.8" height="4.8" fill="#3cf014"/><rect x="725.0" y="167.2" width="4.8" height="4.8" fill="#3cf014"/><rect x="723.3" y="174.2" width="4.8" height="4.8" fill="#3cf014"/><rect x="722.1" y="181.2" width="4.8" height="4.8" fill="#3cf014"/><rect x="736.4" y="164.6" width="4.8" height="4.8" fill="#3cf014"/><rect x="743.4" y="169.8" width="4.8" height="4.8" fill="#3cf014"/><rect x="753.8" y="167.2" width="4.8" height="4.8" fill="#3cf014"/><rect x="738.5" y="192.2" width="4.8" height="4.8" fill="#3cf014"/></g></g><rect x="75.75" y="34.75" width="891.75" height="726.5" fill="none" stroke="#f03232" stroke-width="1.5"/></svg>
<div class="a" style="left:972px;top:35px;width:176px;height:390px;background:#4a4a4a;"></div><div class="a" style="left:972px;top:35px;width:176px;height:12px;background:#383838;"></div><div class="a" style="left:972px;top:47px;width:176px;height:1px;background:#303030;"></div><div class="t" style="left:1050.50px;top:35.00px;height:13px;line-height:13px;font-size:11px;color:#f0f0f0;transform:scaleX(0.8178);transform-origin:0 0;">Style</div><div class="a" style="left:978px;top:54px;width:73px;height:13px;background:#393939;border:1px solid #303030;"></div><div class="t" style="left:995.00px;top:55.00px;height:11px;line-height:11px;font-size:9px;color:#e6e6e6;transform:scaleX(0.8518);transform-origin:0 0;">Shapes</div><svg style="left:1040.5px;top:57.5px;" width="6" height="6" viewBox="0 0 6 6"><path d="M0.2 0.4H5.8L3 5.8Z" fill="#8e8e8e"/></svg><div class="a" style="left:1057px;top:54px;width:73px;height:13px;background:#393939;border:1px solid #303030;"></div><div class="t" style="left:1076.50px;top:55.00px;height:11px;line-height:11px;font-size:9px;color:#e6e6e6;transform:scaleX(0.8569);transform-origin:0 0;">Styles</div><svg style="left:1119.5px;top:57.5px;" width="6" height="6" viewBox="0 0 6 6"><path d="M0.2 0.4H5.8L3 5.8Z" fill="#8e8e8e"/></svg><div class="t" style="left:994.00px;top:71.75px;height:12px;line-height:12px;font-size:10.5px;color:#ececec;transform:scaleX(0.8762);transform-origin:0 0;">DEFAULTS (For new shapes)</div><div class="t" style="left:978.00px;top:89.00px;height:11px;line-height:11px;font-size:9px;color:#e6e6e6;transform:scaleX(0.8748);transform-origin:0 0;">Name</div><div class="a" style="left:1008px;top:88px;width:102px;height:12px;background:#5f5f5f;"></div><div class="a" style="left:984px;top:104px;width:140px;height:1px;background:#333;"></div><div class="a" style="left:978px;top:110px;width:10px;height:10px;background:#303030;border:1px solid #2a2a2a;"></div><svg style="left:978px;top:110px;" width="10" height="10" viewBox="0 0 10 10"><path d="M2.2 4.4L4.5 8.4L8.2 1.6" fill="none" stroke="#1c6c72" stroke-width="1.8"/></svg><div class="t" style="left:990.50px;top:110.00px;height:11px;line-height:11px;font-size:9px;color:#7c7c7c;transform:scaleX(0.8699);transform-origin:0 0;">Fill</div><div class="a" style="left:1020px;top:108px;width:28px;height:14px;background:#3c3c3c;border:1px solid #2c2c2c;"></div><svg style="left:1052px;top:108px;" width="14" height="14" viewBox="0 0 14 14"><path d="M2 12L8 6" fill="none" stroke="#e8e8e8" stroke-width="2.6" stroke-linecap="round" stroke-linejoin="round" /><path d="M7.5 6.5L11.5 2.5" fill="none" stroke="#16a2aa" stroke-width="3.4" stroke-linecap="round" stroke-linejoin="round" /><path d="M6.3 4.7L9.3 7.7" fill="none" stroke="#16a2aa" stroke-width="1.6" stroke-linecap="round" stroke-linejoin="round" /></svg><div class="a" style="left:1075px;top:111px;width:9px;height:9px;background:#3a3a3a;"></div><div class="t" style="left:978.00px;top:127.00px;height:11px;line-height:11px;font-size:9px;color:#e6e6e6;transform:scaleX(0.8896);transform-origin:0 0;">Effect 1</div><div class="a" style="left:1020px;top:126px;width:82px;height:13px;background:#393939;border:1px solid #303030;"></div><div class="t" style="left:1040.50px;top:127.00px;height:11px;line-height:11px;font-size:9px;color:#e6e6e6;transform:scaleX(0.9822);transform-origin:0 0;">&lt;plain&gt;</div><svg style="left:1091.5px;top:129.5px;" width="6" height="6" viewBox="0 0 6 6"><path d="M0.2 0.4H5.8L3 5.8Z" fill="#8e8e8e"/></svg><div class="a" style="left:1109px;top:127px;width:20px;height:11px;background:#3c3c3c;"></div><div class="t" style="left:1115.25px;top:126.50px;height:11px;line-height:11px;font-size:9px;color:#6a6a6a;">...</div><div class="t" style="left:978.00px;top:143.50px;height:11px;line-height:11px;font-size:9px;color:#e6e6e6;transform:scaleX(0.8896);transform-origin:0 0;">Effect 2</div><div class="a" style="left:1020px;top:142px;width:82px;height:13px;background:#393939;border:1px solid #303030;"></div><div class="t" style="left:1040.50px;top:143.00px;height:11px;line-height:11px;font-size:9px;color:#e6e6e6;transform:scaleX(0.9822);transform-origin:0 0;">&lt;plain&gt;</div><svg style="left:1091.5px;top:145.5px;" width="6" height="6" viewBox="0 0 6 6"><path d="M0.2 0.4H5.8L3 5.8Z" fill="#8e8e8e"/></svg><div class="a" style="left:1109px;top:143px;width:20px;height:11px;background:#3c3c3c;"></div><div class="t" style="left:1115.25px;top:142.50px;height:11px;line-height:11px;font-size:9px;color:#6a6a6a;">...</div><div class="a" style="left:984px;top:158px;width:140px;height:1px;background:#333;"></div><div class="a" style="left:978px;top:165px;width:10px;height:10px;background:#303030;border:1px solid #2a2a2a;"></div><svg style="left:978px;top:165px;" width="10" height="10" viewBox="0 0 10 10"><path d="M2.2 4.4L4.5 8.4L8.2 1.6" fill="none" stroke="#1c6c72" stroke-width="1.8"/></svg><div class="t" style="left:990.50px;top:165.00px;height:11px;line-height:11px;font-size:9px;color:#7c7c7c;transform:scaleX(0.8843);transform-origin:0 0;">Stroke</div><div class="a" style="left:1022px;top:163px;width:28px;height:13px;background:#000;"></div><svg style="left:1054px;top:163px;" width="14" height="14" viewBox="0 0 14 14"><path d="M2 12L8 6" fill="none" stroke="#e8e8e8" stroke-width="2.6" stroke-linecap="round" stroke-linejoin="round" /><path d="M7.5 6.5L11.5 2.5" fill="none" stroke="#16a2aa" stroke-width="3.4" stroke-linecap="round" stroke-linejoin="round" /><path d="M6.3 4.7L9.3 7.7" fill="none" stroke="#16a2aa" stroke-width="1.6" stroke-linecap="round" stroke-linejoin="round" /></svg><div class="a" style="left:1077px;top:165px;width:9px;height:9px;background:#3a3a3a;"></div><div class="a" style="left:1099px;top:164px;width:29px;height:29px;background:#f2f2f2;border:1px solid #bbb;"></div><div class="t" style="left:1107.50px;top:167.50px;height:12px;line-height:12px;font-size:10px;color:#222;transform:scaleX(0.9388);transform-origin:0 0;">No</div><div class="t" style="left:1101.50px;top:178.50px;height:12px;line-height:12px;font-size:10px;color:#222;transform:scaleX(0.9188);transform-origin:0 0;">Brush</div><div class="t" style="left:978.00px;top:181.50px;height:11px;line-height:11px;font-size:9px;color:#e6e6e6;transform:scaleX(0.9129);transform-origin:0 0;">Width</div><div class="a" style="left:1023px;top:180px;width:47px;height:13px;background:#ececec;border:1px solid #fff;"></div><div class="t" style="left:1025.00px;top:181.50px;height:11px;line-height:11px;font-size:9px;color:#222;">6</div><div class="a" style="left:1077px;top:182px;width:9px;height:9px;background:#3a3a3a;"></div><div class="t" style="left:978.00px;top:198.50px;height:11px;line-height:11px;font-size:9px;color:#e6e6e6;transform:scaleX(0.8754);transform-origin:0 0;">Effect</div><div class="a" style="left:1020px;top:197px;width:82px;height:13px;background:#393939;border:1px solid #303030;"></div><div class="t" style="left:1040.50px;top:198.00px;height:11px;line-height:11px;font-size:9px;color:#e6e6e6;transform:scaleX(0.9822);transform-origin:0 0;">&lt;plain&gt;</div><svg style="left:1091.5px;top:200.5px;" width="6" height="6" viewBox="0 0 6 6"><path d="M0.2 0.4H5.8L3 5.8Z" fill="#8e8e8e"/></svg><div class="a" style="left:1109px;top:198px;width:20px;height:11px;background:#3c3c3c;"></div><div class="t" style="left:1115.25px;top:197.50px;height:11px;line-height:11px;font-size:9px;color:#6a6a6a;">...</div><div class="a" style="left:978px;top:215px;width:10px;height:10px;background:#303030;border:1px solid #2a2a2a;"></div><svg style="left:978px;top:215px;" width="10" height="10" viewBox="0 0 10 10"><path d="M2.2 4.4L4.5 8.4L8.2 1.6" fill="none" stroke="#19b4be" stroke-width="1.8"/></svg><div class="t" style="left:990.50px;top:215.00px;height:11px;line-height:11px;font-size:9px;color:#e6e6e6;transform:scaleX(0.8745);transform-origin:0 0;">Round caps</div><div class="a" style="left:984px;top:230px;width:140px;height:1px;background:#333;"></div><div class="t" style="left:978.00px;top:236.00px;height:11px;line-height:11px;font-size:9px;color:#e6e6e6;transform:scaleX(0.8723);transform-origin:0 0;">Style 1</div><div class="a" style="left:1022px;top:235px;width:97px;height:13px;background:#393939;border:1px solid #303030;"></div><div class="t" style="left:1049.50px;top:236.00px;height:11px;line-height:11px;font-size:9px;color:#e6e6e6;transform:scaleX(0.9367);transform-origin:0 0;">&lt;None&gt;</div><svg style="left:1108.5px;top:238.5px;" width="6" height="6" viewBox="0 0 6 6"><path d="M0.2 0.4H5.8L3 5.8Z" fill="#8e8e8e"/></svg><div class="t" style="left:978.00px;top:253.00px;height:11px;line-height:11px;font-size:9px;color:#e6e6e6;transform:scaleX(0.8723);transform-origin:0 0;">Style 2</div><div class="a" style="left:1022px;top:252px;width:97px;height:13px;background:#393939;border:1px solid #303030;"></div><div class="t" style="left:1049.50px;top:253.00px;height:11px;line-height:11px;font-size:9px;color:#e6e6e6;transform:scaleX(0.9367);transform-origin:0 0;">&lt;None&gt;</div><svg style="left:1108.5px;top:255.5px;" width="6" height="6" viewBox="0 0 6 6"><path d="M0.2 0.4H5.8L3 5.8Z" fill="#8e8e8e"/></svg><div class="t" style="left:978.00px;top:269.50px;height:11px;line-height:11px;font-size:9px;color:#e6e6e6;transform:scaleX(0.8640);transform-origin:0 0;">Thickness</div><div class="a" style="left:1023px;top:269px;width:42px;height:12px;background:#5f5f5f;"></div><div class="t" style="left:978.00px;top:286.50px;height:11px;line-height:11px;font-size:9px;color:#e6e6e6;transform:scaleX(0.8458);transform-origin:0 0;">Swatches</div><div class="a" style="left:1022px;top:285px;width:97px;height:13px;background:#393939;border:1px solid #303030;"></div><div class="t" style="left:1034.00px;top:286.00px;height:11px;line-height:11px;font-size:9px;color:#e6e6e6;transform:scaleX(0.8967);transform-origin:0 0;">Basic Colors.png</div><svg style="left:1108.5px;top:288.5px;" width="6" height="6" viewBox="0 0 6 6"><path d="M0.2 0.4H5.8L3 5.8Z" fill="#8e8e8e"/></svg><div class="a" style="left:986px;top:301px;width:135px;height:85px;background:#161616;"></div><svg style="left:986px;top:301px;" width="135" height="85" viewBox="0 0 135 85"><rect x="1.00" y="1.00" width="7.38" height="7.40" fill="#ff0000"/><rect x="9.38" y="1.00" width="7.38" height="7.40" fill="#ffff20"/><rect x="17.75" y="1.00" width="7.38" height="7.40" fill="#00f020"/><rect x="26.12" y="1.00" width="7.38" height="7.40" fill="#00f0f0"/><rect x="34.50" y="1.00" width="7.38" height="7.40" fill="#1010f0"/><rect x="42.88" y="1.00" width="7.38" height="7.40" fill="#ff00f0"/><rect x="51.25" y="1.00" width="7.38" height="7.40" fill="#ffffff"/><rect x="59.62" y="1.00" width="7.38" height="7.40" fill="#eeeeee"/><rect x="68.00" y="1.00" width="7.38" height="7.40" fill="#e4e4e4"/><rect x="76.38" y="1.00" width="7.38" height="7.40" fill="#dadada"/><rect x="84.75" y="1.00" width="7.38" height="7.40" fill="#d0d0d0"/><rect x="93.12" y="1.00" width="7.38" height="7.40" fill="#c6c6c6"/><rect x="101.50" y="1.00" width="7.38" height="7.40" fill="#bcbcbc"/><rect x="109.88" y="1.00" width="7.38" height="7.40" fill="#b2b2b2"/><rect x="118.25" y="1.00" width="7.38" height="7.40" fill="#a6a6a6"/><rect x="126.62" y="1.00" width="7.38" height="7.40" fill="#9a9a9a"/><rect x="1.00" y="9.40" width="7.38" height="7.40" fill="#c8102e"/><rect x="9.38" y="9.40" width="7.38" height="7.40" fill="#f5f020"/><rect x="17.75" y="9.40" width="7.38" height="7.40" fill="#1a9850"/><rect x="26.12" y="9.40" width="7.38" height="7.40" fill="#3a9ae0"/><rect x="34.50" y="9.40" width="7.38" height="7.40" fill="#3a1a8a"/><rect x="42.88" y="9.40" width="7.38" height="7.40" fill="#c01080"/><rect x="51.25" y="9.40" width="7.38" height="7.40" fill="#909090"/><rect x="59.62" y="9.40" width="7.38" height="7.40" fill="#808080"/><rect x="68.00" y="9.40" width="7.38" height="7.40" fill="#707070"/><rect x="76.38" y="9.40" width="7.38" height="7.40" fill="#606060"/><rect x="84.75" y="9.40" width="7.38" height="7.40" fill="#525252"/><rect x="93.12" y="9.40" width="7.38" height="7.40" fill="#444444"/><rect x="101.50" y="9.40" width="7.38" height="7.40" fill="#363636"/><rect x="109.88" y="9.40" width="7.38" height="7.40" fill="#282828"/><rect x="118.25" y="9.40" width="7.38" height="7.40" fill="#161616"/><rect x="126.62" y="9.40" width="7.38" height="7.40" fill="#000000"/><rect x="1.00" y="17.80" width="7.38" height="7.40" fill="#e8a090"/><rect x="9.38" y="17.80" width="7.38" height="7.40" fill="#ecc090"/><rect x="17.75" y="17.80" width="7.38" height="7.40" fill="#f0d898"/><rect x="26.12" y="17.80" width="7.38" height="7.40" fill="#f4f0a0"/><rect x="34.50" y="17.80" width="7.38" height="7.40" fill="#d8e8a0"/><rect x="42.88" y="17.80" width="7.38" height="7.40" fill="#b8dca0"/><rect x="51.25" y="17.80" width="7.38" height="7.40" fill="#a0d4b0"/><rect x="59.62" y="17.80" width="7.38" height="7.40" fill="#a0d4d0"/><rect x="68.00" y="17.80" width="7.38" height="7.40" fill="#a0c8f0"/><rect x="76.38" y="17.80" width="7.38" height="7.40" fill="#a0a8e0"/><rect x="84.75" y="17.80" width="7.38" height="7.40" fill="#a098d0"/><rect x="93.12" y="17.80" width="7.38" height="7.40" fill="#a888c8"/><rect x="101.50" y="17.80" width="7.38" height="7.40" fill="#b890c8"/><rect x="109.88" y="17.80" width="7.38" height="7.40" fill="#c898c8"/><rect x="118.25" y="17.80" width="7.38" height="7.40" fill="#e8a0c0"/><rect x="126.62" y="17.80" width="7.38" height="7.40" fill="#e8a0a8"/><rect x="1.00" y="26.20" width="7.38" height="7.40" fill="#d87860"/><rect x="9.38" y="26.20" width="7.38" height="7.40" fill="#e0a060"/><rect x="17.75" y="26.20" width="7.38" height="7.40" fill="#e8c068"/><rect x="26.12" y="26.20" width="7.38" height="7.40" fill="#f0e870"/><rect x="34.50" y="26.20" width="7.38" height="7.40" fill="#c0dc78"/><rect x="42.88" y="26.20" width="7.38" height="7.40" fill="#90cc78"/><rect x="51.25" y="26.20" width="7.38" height="7.40" fill="#68c090"/><rect x="59.62" y="26.20" width="7.38" height="7.40" fill="#60c0b8"/><rect x="68.00" y="26.20" width="7.38" height="7.40" fill="#60a8e8"/><rect x="76.38" y="26.20" width="7.38" height="7.40" fill="#6888d0"/><rect x="84.75" y="26.20" width="7.38" height="7.40" fill="#6868b8"/><rect x="93.12" y="26.20" width="7.38" height="7.40" fill="#7858b0"/><rect x="101.50" y="26.20" width="7.38" height="7.40" fill="#9060b0"/><rect x="109.88" y="26.20" width="7.38" height="7.40" fill="#b068b0"/><rect x="118.25" y="26.20" width="7.38" height="7.40" fill="#d870a8"/><rect x="126.62" y="26.20" width="7.38" height="7.40" fill="#d87080"/><rect x="1.00" y="34.60" width="7.38" height="7.40" fill="#c81030"/><rect x="9.38" y="34.60" width="7.38" height="7.40" fill="#d87028"/><rect x="17.75" y="34.60" width="7.38" height="7.40" fill="#e0a028"/><rect x="26.12" y="34.60" width="7.38" height="7.40" fill="#f0e820"/><rect x="34.50" y="34.60" width="7.38" height="7.40" fill="#98d038"/><rect x="42.88" y="34.60" width="7.38" height="7.40" fill="#48b848"/><rect x="51.25" y="34.60" width="7.38" height="7.40" fill="#10a050"/><rect x="59.62" y="34.60" width="7.38" height="7.40" fill="#10a098"/><rect x="68.00" y="34.60" width="7.38" height="7.40" fill="#2098e0"/><rect x="76.38" y="34.60" width="7.38" height="7.40" fill="#3868c0"/><rect x="84.75" y="34.60" width="7.38" height="7.40" fill="#2838a0"/><rect x="93.12" y="34.60" width="7.38" height="7.40" fill="#401898"/><rect x="101.50" y="34.60" width="7.38" height="7.40" fill="#701898"/><rect x="109.88" y="34.60" width="7.38" height="7.40" fill="#a01890"/><rect x="118.25" y="34.60" width="7.38" height="7.40" fill="#d01878"/><rect x="126.62" y="34.60" width="7.38" height="7.40" fill="#d01050"/><rect x="1.00" y="43.00" width="7.38" height="7.40" fill="#900820"/><rect x="9.38" y="43.00" width="7.38" height="7.40" fill="#a05020"/><rect x="17.75" y="43.00" width="7.38" height="7.40" fill="#a87820"/><rect x="26.12" y="43.00" width="7.38" height="7.40" fill="#a8a818"/><rect x="34.50" y="43.00" width="7.38" height="7.40" fill="#689028"/><rect x="42.88" y="43.00" width="7.38" height="7.40" fill="#308038"/><rect x="51.25" y="43.00" width="7.38" height="7.40" fill="#087840"/><rect x="59.62" y="43.00" width="7.38" height="7.40" fill="#087870"/><rect x="68.00" y="43.00" width="7.38" height="7.40" fill="#186898"/><rect x="76.38" y="43.00" width="7.38" height="7.40" fill="#204878"/><rect x="84.75" y="43.00" width="7.38" height="7.40" fill="#202870"/><rect x="93.12" y="43.00" width="7.38" height="7.40" fill="#300868"/><rect x="101.50" y="43.00" width="7.38" height="7.40" fill="#500868"/><rect x="109.88" y="43.00" width="7.38" height="7.40" fill="#700868"/><rect x="118.25" y="43.00" width="7.38" height="7.40" fill="#900850"/><rect x="126.62" y="43.00" width="7.38" height="7.40" fill="#900838"/><rect x="1.00" y="51.40" width="7.38" height="7.40" fill="#680010"/><rect x="9.38" y="51.40" width="7.38" height="7.40" fill="#703010"/><rect x="17.75" y="51.40" width="7.38" height="7.40" fill="#785010"/><rect x="26.12" y="51.40" width="7.38" height="7.40" fill="#787808"/><rect x="34.50" y="51.40" width="7.38" height="7.40" fill="#486818"/><rect x="42.88" y="51.40" width="7.38" height="7.40" fill="#205820"/><rect x="51.25" y="51.40" width="7.38" height="7.40" fill="#005828"/><rect x="59.62" y="51.40" width="7.38" height="7.40" fill="#005850"/><rect x="68.00" y="51.40" width="7.38" height="7.40" fill="#084870"/><rect x="76.38" y="51.40" width="7.38" height="7.40" fill="#103058"/><rect x="84.75" y="51.40" width="7.38" height="7.40" fill="#101850"/><rect x="93.12" y="51.40" width="7.38" height="7.40" fill="#200048"/><rect x="101.50" y="51.40" width="7.38" height="7.40" fill="#380048"/><rect x="109.88" y="51.40" width="7.38" height="7.40" fill="#500048"/><rect x="118.25" y="51.40" width="7.38" height="7.40" fill="#680038"/><rect x="126.62" y="51.40" width="7.38" height="7.40" fill="#680020"/><rect x="1.00" y="59.80" width="7.38" height="7.40" fill="#d8c8a0"/><rect x="9.38" y="59.80" width="7.38" height="7.40" fill="#a09078"/><rect x="17.75" y="59.80" width="7.38" height="7.40" fill="#786858"/><rect x="26.12" y="59.80" width="7.38" height="7.40" fill="#585048"/><rect x="34.50" y="59.80" width="7.38" height="7.40" fill="#383430"/><rect x="42.88" y="59.80" width="7.38" height="7.40" fill="#c8a878"/><rect x="51.25" y="59.80" width="7.38" height="7.40" fill="#a88858"/><rect x="59.62" y="59.80" width="7.38" height="7.40" fill="#886838"/><rect x="68.00" y="59.80" width="7.38" height="7.40" fill="#705028"/><rect x="76.38" y="59.80" width="7.38" height="7.40" fill="#583818"/><rect x="84.75" y="59.80" width="7.38" height="7.40" fill="#ffffff"/><rect x="93.12" y="59.80" width="7.38" height="7.40" fill="#ffffc8"/><rect x="101.50" y="59.80" width="7.38" height="7.40" fill="#ffff90"/><rect x="109.88" y="59.80" width="7.38" height="7.40" fill="#ffff58"/><rect x="118.25" y="59.80" width="7.38" height="7.40" fill="#ffff30"/><rect x="126.62" y="59.80" width="7.38" height="7.40" fill="#f8f020"/><rect x="1.00" y="68.20" width="7.38" height="7.40" fill="#f8e040"/><rect x="9.38" y="68.20" width="7.38" height="7.40" fill="#ffc8ff"/><rect x="17.75" y="68.20" width="7.38" height="7.40" fill="#ffc8c8"/><rect x="26.12" y="68.20" width="7.38" height="7.40" fill="#ffd0a0"/><rect x="34.50" y="68.20" width="7.38" height="7.40" fill="#ffd070"/><rect x="42.88" y="68.20" width="7.38" height="7.40" fill="#ffd040"/><rect x="51.25" y="68.20" width="7.38" height="7.40" fill="#ffc820"/><rect x="59.62" y="68.20" width="7.38" height="7.40" fill="#ffb020"/><rect x="68.00" y="68.20" width="7.38" height="7.40" fill="#ff90ff"/><rect x="76.38" y="68.20" width="7.38" height="7.40" fill="#ff90c8"/><rect x="84.75" y="68.20" width="7.38" height="7.40" fill="#ff9090"/><rect x="93.12" y="68.20" width="7.38" height="7.40" fill="#ff9858"/><rect x="101.50" y="68.20" width="7.38" height="7.40" fill="#ffa030"/><rect x="109.88" y="68.20" width="7.38" height="7.40" fill="#ff9820"/><rect x="118.25" y="68.20" width="7.38" height="7.40" fill="#ff58ff"/><rect x="126.62" y="68.20" width="7.38" height="7.40" fill="#f858c8"/><rect x="1.00" y="76.60" width="7.38" height="7.40" fill="#ff5890"/><rect x="9.38" y="76.60" width="7.38" height="7.40" fill="#ff5858"/><rect x="17.75" y="76.60" width="7.38" height="7.40" fill="#ff6030"/><rect x="26.12" y="76.60" width="7.38" height="7.40" fill="#ff6818"/><rect x="34.50" y="76.60" width="7.38" height="7.40" fill="#ff20d0"/><rect x="42.88" y="76.60" width="7.38" height="7.40" fill="#ff2090"/><rect x="51.25" y="76.60" width="7.38" height="7.40" fill="#ff2058"/><rect x="59.62" y="76.60" width="7.38" height="7.40" fill="#ff2030"/><rect x="68.00" y="76.60" width="7.38" height="7.40" fill="#ff2010"/><rect x="76.38" y="76.60" width="7.38" height="7.40" fill="#ff00ff"/><rect x="84.75" y="76.60" width="7.38" height="7.40" fill="#ff00c0"/><rect x="93.12" y="76.60" width="7.38" height="7.40" fill="#ff0090"/><rect x="101.50" y="76.60" width="7.38" height="7.40" fill="#ff0058"/><rect x="109.88" y="76.60" width="7.38" height="7.40" fill="#ff0030"/><rect x="118.25" y="76.60" width="7.38" height="7.40" fill="#ff0000"/><rect x="126.62" y="76.60" width="7.38" height="7.40" fill="#ffffff"/></svg><div class="a" style="left:995px;top:390px;width:34px;height:12px;background:#3a3a3a;border:1px solid #343434;"></div><div class="t" style="left:1001.00px;top:390.25px;height:12px;line-height:12px;font-size:10.5px;color:#ececec;transform:scaleX(0.8976);transform-origin:0 0;">Copy</div><div class="a" style="left:1037px;top:390px;width:34px;height:12px;background:#3a3a3a;border:1px solid #343434;"></div><div class="t" style="left:1042.50px;top:390.25px;height:12px;line-height:12px;font-size:10.5px;color:#ececec;transform:scaleX(0.8566);transform-origin:0 0;">Paste</div><div class="a" style="left:1078px;top:390px;width:35px;height:12px;background:#3a3a3a;border:1px solid #343434;"></div><div class="t" style="left:1083.50px;top:390.25px;height:12px;line-height:12px;font-size:10.5px;color:#ececec;transform:scaleX(0.8750);transform-origin:0 0;">Reset</div><div class="a" style="left:978px;top:408px;width:10px;height:10px;background:#303030;border:1px solid #2a2a2a;"></div><svg style="left:978px;top:408px;" width="10" height="10" viewBox="0 0 10 10"><path d="M2.2 4.4L4.5 8.4L8.2 1.6" fill="none" stroke="#19b4be" stroke-width="1.8"/></svg><div class="t" style="left:990.50px;top:407.50px;height:11px;line-height:11px;font-size:9px;color:#e6e6e6;transform:scaleX(0.8994);transform-origin:0 0;">Advanced</div><div class="a" style="left:1035px;top:408px;width:10px;height:10px;background:#303030;border:1px solid #2a2a2a;"></div><div class="t" style="left:1047.00px;top:407.50px;height:11px;line-height:11px;font-size:9px;color:#e6e6e6;transform:scaleX(0.9087);transform-origin:0 0;">Checker selection</div>
<div class="a" style="left:972px;top:425px;width:176px;height:1px;background:#303030;"></div><div class="a" style="left:972px;top:426px;width:176px;height:12px;background:#383838;"></div><div class="t" style="left:1047.00px;top:425.50px;height:13px;line-height:13px;font-size:11px;color:#f0f0f0;transform:scaleX(0.8178);transform-origin:0 0;">Layers</div><div class="a" style="left:972px;top:438px;width:176px;height:16px;background:#4a4a4a;"></div><div class="a" style="left:973.5px;top:439.5px;width:16px;height:13px;background:#3b3b3b;"></div><div class="a" style="left:992.5px;top:439.5px;width:16px;height:13px;background:#3b3b3b;"></div><div class="a" style="left:1011px;top:439.5px;width:16px;height:13px;background:#3b3b3b;"></div><div class="a" style="left:1030px;top:439.5px;width:16px;height:13px;background:#3b3b3b;"></div><div class="a" style="left:1049px;top:439.5px;width:16px;height:13px;background:#3b3b3b;"></div><div class="a" style="left:1068px;top:439.5px;width:16px;height:13px;background:#3b3b3b;"></div><div class="a" style="left:1134px;top:439.5px;width:14px;height:13px;background:#3b3b3b;"></div><svg style="left:975px;top:440.3px;" width="13" height="11.1" viewBox="0 0 14 12"><path d="M1.5 11V4L4 1.5H8V11Z" fill="none" stroke="#e4e4e4" stroke-width="1.2" stroke-linecap="round" stroke-linejoin="round" /><path d="M8 6H13M10.5 3.5V8.5" fill="none" stroke="#16a2aa" stroke-width="1.6" stroke-linecap="round" stroke-linejoin="round" /></svg><svg style="left:994px;top:440.3px;" width="13" height="11.1" viewBox="0 0 14 12"><path d="M3.5 9.5V3L5.5 1H10V9.5ZM3.5 4H1.5V11.5H8V9.5" fill="none" stroke="#e4e4e4" stroke-width="1.1" stroke-linecap="round" stroke-linejoin="round" /></svg><svg style="left:1012.5px;top:440.3px;" width="13" height="11.1" viewBox="0 0 14 12"><path d="M1.5 11V4L4 1.5H8V11Z" fill="none" stroke="#e4e4e4" stroke-width="1.2" stroke-linecap="round" stroke-linejoin="round" /><path d="M7.5 6H13M11 4L13 6L11 8" fill="none" stroke="#16a2aa" stroke-width="1.5" stroke-linecap="round" stroke-linejoin="round" /></svg><svg style="left:1031.5px;top:440.3px;" width="13" height="11.1" viewBox="0 0 14 12"><path d="M4 3.5H10V11H4ZM3 3.5H11M5.5 3.5V2H8.5V3.5M6 5.5V9.5M8 5.5V9.5" fill="none" stroke="#e4e4e4" stroke-width="1.1" stroke-linecap="round" stroke-linejoin="round" /></svg><svg style="left:1050.5px;top:440.3px;" width="13" height="11.1" viewBox="0 0 14 12"><circle cx="3.5" cy="6.5" r="1.1" fill="#e4e4e4" stroke="none" stroke-width="1"/><circle cx="7" cy="6.5" r="1.1" fill="#e4e4e4" stroke="none" stroke-width="1"/><circle cx="10.5" cy="6.5" r="1.1" fill="#e4e4e4" stroke="none" stroke-width="1"/></svg><svg style="left:1069.5px;top:440.3px;" width="13" height="11.1" viewBox="0 0 14 12"><circle cx="5.5" cy="5" r="3.8" fill="#e0e0e0" stroke="none" stroke-width="1"/><path d="M6.5 4H12V11.5H6.5Z" fill="#c8c8c8" stroke="#3b3b3b" stroke-width="0.8" stroke-linecap="round" stroke-linejoin="round" /><path d="M7.5 7.5H11M7.5 9.5H11" fill="none" stroke="#555" stroke-width="0.8" stroke-linecap="round" stroke-linejoin="round" /></svg><svg style="left:1135px;top:440.5px;" width="12" height="12" viewBox="0 0 12 12"><path d="M3 7.5L6 4.5L9 7.5" fill="none" stroke="#e4e4e4" stroke-width="1.8" stroke-linecap="round" stroke-linejoin="round" /></svg><div class="a" style="left:972px;top:454px;width:176px;height:17px;background:#404040;"></div><div class="a" style="left:973px;top:455px;width:77px;height:14px;background:#3b3b3b;"></div><div class="t" style="left:975.00px;top:456.50px;height:11px;line-height:11px;font-size:9px;color:#e6e6e6;transform:scaleX(0.9033);transform-origin:0 0;">Name contains...</div><svg style="left:1039px;top:458.5px;" width="8" height="8" viewBox="0 0 8 8"><path d="M0.3 0.8H7.7L4 7.6Z" fill="#8a8a8a"/></svg><div class="a" style="left:1053px;top:456.5px;width:90.5px;height:11px;background:#ebebeb;"></div><div class="a" style="left:972px;top:471px;width:176px;height:1px;background:#2e2e2e;"></div><div class="a" style="left:972px;top:472px;width:176px;height:13px;background:#393939;"></div><div class="a" style="left:995px;top:472px;width:1px;height:13px;background:#2e2e2e;"></div><div class="a" style="left:1014px;top:472px;width:1px;height:13px;background:#2e2e2e;"></div><div class="a" style="left:972px;top:485px;width:176px;height:1px;background:#2e2e2e;"></div><svg style="left:980px;top:475px;" width="10" height="7" viewBox="0 0 10 7"><circle cx="2.6" cy="3.4" r="1.5" fill="none" stroke="#ddd" stroke-width="0.9"/><circle cx="6.8" cy="3.4" r="1.5" fill="none" stroke="#ddd" stroke-width="0.9"/><circle cx="3" cy="3.8" r="0.7" fill="#ddd"/><circle cx="7.2" cy="3.8" r="0.7" fill="#ddd"/></svg><svg style="left:1000px;top:473.5px;" width="9" height="10" viewBox="0 0 9 10"><circle cx="4.5" cy="6" r="2.6" fill="none" stroke="#ddd" stroke-width="1.1"/><path d="M3.4 2.6L4.5 1L5.6 2.6Z" fill="#ddd"/></svg><div class="t" style="left:1018.00px;top:473.00px;height:11px;line-height:11px;font-size:9px;color:#e8e8e8;transform:scaleX(0.8748);transform-origin:0 0;">Name</div><div class="a" style="left:972px;top:486px;width:163px;height:360px;background:#4d4d4d;"></div><div class="a" style="left:1135px;top:486px;width:13px;height:360px;background:#444;"></div><div class="a" style="left:1135px;top:486px;width:1px;height:360px;background:#333;"></div><svg style="left:1138px;top:490px;" width="8" height="8" viewBox="0 0 8 8"><path d="M0.5 7H7.5L4 0.5Z" fill="#6a6a6a"/></svg><svg style="left:1138px;top:836px;" width="8" height="8" viewBox="0 0 8 8"><path d="M0.5 1H7.5L4 7.5Z" fill="#9a9a9a"/></svg><div class="a" style="left:972px;top:846px;width:176px;height:13px;background:#3d3d3d;"></div><div class="a" style="left:985px;top:847px;width:24px;height:11px;background:#4e4e4e;"></div><svg style="left:975px;top:849px;" width="7" height="7" viewBox="0 0 7 7"><path d="M6.5 0.3V6.7L0.5 3.5Z" fill="#9a9a9a"/></svg><svg style="left:1126px;top:849px;" width="7" height="7" viewBox="0 0 7 7"><path d="M0.5 0.3V6.7L6.5 3.5Z" fill="#9a9a9a"/></svg><div class="a" style="left:1135px;top:846px;width:13px;height:13px;background:#4a4a4a;"></div><div class="a" style="left:972px;top:486px;width:163px;height:17px;background:#4d4d4d;"></div><svg style="left:979.5px;top:487.86px;" width="14" height="13" viewBox="0 0 14 13"><rect x="0" y="0" width="14" height="13" fill="#2a2a2a" stroke="#686868" stroke-width="1"/><ellipse cx="4.4" cy="6.5" rx="2.8" ry="3.3" fill="#fff"/><ellipse cx="9.8" cy="6.5" rx="2.8" ry="3.3" fill="#fff"/><circle cx="5.2" cy="7.2" r="1.6" fill="#111"/><circle cx="10.6" cy="7.2" r="1.6" fill="#111"/></svg><div class="a" style="left:1000px;top:489.86px;width:9px;height:9px;background:#333;border:1px solid #3a3a3a;"></div><svg style="left:1031.5px;top:488.36px;" width="12" height="12" viewBox="0 0 12 12"><path d="M1 6C1.6 3.2 4 4.6 6.2 2.6C8.6 0.6 11.2 2.2 10.4 5.4C9.6 8.8 5.8 10.6 3 9.8C1 9.2 0.6 7.4 1 6Z" fill="none" stroke="#e8e8e8" stroke-width="1.3" stroke-linecap="round" stroke-linejoin="round" /></svg><div class="t" style="left:1051.00px;top:489.06px;height:11px;line-height:11px;font-size:9px;color:#e4e4e4;transform:scaleX(0.9319);transform-origin:0 0;">Dancer-female</div><div class="a" style="left:972px;top:503px;width:163px;height:16px;background:#3b3b3b;"></div><div class="a" style="left:979.5px;top:504.58px;width:14px;height:13px;background:#5a5a5a;"></div><div class="a" style="left:1000px;top:506.58px;width:9px;height:9px;background:#333;border:1px solid #444;"></div><svg style="left:1031.5px;top:505.08px;" width="12" height="12" viewBox="0 0 12 12"><path d="M1 6C1.6 3.2 4 4.6 6.2 2.6C8.6 0.6 11.2 2.2 10.4 5.4C9.6 8.8 5.8 10.6 3 9.8C1 9.2 0.6 7.4 1 6Z" fill="none" stroke="#777" stroke-width="1.3" stroke-linecap="round" stroke-linejoin="round" /></svg><div class="t" style="left:1048.50px;top:505.78px;height:11px;line-height:11px;font-size:9px;color:#7d7d7d;transform:scaleX(0.8813);transform-origin:0 0;">Layer 5.svg</div><div class="a" style="left:972px;top:519px;width:163px;height:17px;background:#4d4d4d;"></div><svg style="left:979.5px;top:521.3px;" width="14" height="13" viewBox="0 0 14 13"><rect x="0" y="0" width="14" height="13" fill="#2a2a2a" stroke="#686868" stroke-width="1"/><ellipse cx="4.4" cy="6.5" rx="2.8" ry="3.3" fill="#fff"/><ellipse cx="9.8" cy="6.5" rx="2.8" ry="3.3" fill="#fff"/><circle cx="5.2" cy="7.2" r="1.6" fill="#111"/><circle cx="10.6" cy="7.2" r="1.6" fill="#111"/></svg><div class="a" style="left:1000px;top:523.3px;width:9px;height:9px;background:#333;border:1px solid #3a3a3a;"></div><svg style="left:1020px;top:524.3px;" width="8" height="8" viewBox="0 0 8 8"><path d="M0.3 0.5H7.7L4 7.5Z" fill="#f0f0f0"/></svg><svg style="left:1031.5px;top:523.8px;" width="12" height="8" viewBox="0 0 12 8"><path d="M2.8 3.1C2.8 1.1 0.2 1.6 1.3 4C0.2 6.4 2.8 6.9 2.8 4.9H9.2C9.2 6.9 11.8 6.4 10.7 4C11.8 1.6 9.2 1.1 9.2 3.1Z" fill="none" stroke="#e8e8e8" stroke-width="1.1" stroke-linecap="round" stroke-linejoin="round" /></svg><div class="t" style="left:1048.50px;top:522.50px;height:11px;line-height:11px;font-size:9px;color:#e4e4e4;transform:scaleX(0.9201);transform-origin:0 0;">Dancer-male1</div><div class="a" style="left:972px;top:536px;width:163px;height:17px;background:#3b3b3b;"></div><svg style="left:979.5px;top:538.02px;" width="14" height="13" viewBox="0 0 14 13"><rect x="0" y="0" width="14" height="13" fill="#2a2a2a" stroke="#686868" stroke-width="1"/><ellipse cx="4.4" cy="6.5" rx="2.8" ry="3.3" fill="#fff"/><ellipse cx="9.8" cy="6.5" rx="2.8" ry="3.3" fill="#fff"/><circle cx="5.2" cy="7.2" r="1.6" fill="#111"/><circle cx="10.6" cy="7.2" r="1.6" fill="#111"/></svg><div class="a" style="left:1000px;top:540.02px;width:9px;height:9px;background:#333;border:1px solid #3a3a3a;"></div><svg style="left:1041.5px;top:538.52px;" width="12" height="12" viewBox="0 0 12 12"><path d="M1 6C1.6 3.2 4 4.6 6.2 2.6C8.6 0.6 11.2 2.2 10.4 5.4C9.6 8.8 5.8 10.6 3 9.8C1 9.2 0.6 7.4 1 6Z" fill="none" stroke="#e8e8e8" stroke-width="1.3" stroke-linecap="round" stroke-linejoin="round" /></svg><div class="t" style="left:1058.50px;top:539.22px;height:11px;line-height:11px;font-size:9px;color:#e4e4e4;transform:scaleX(0.8831);transform-origin:0 0;">Head</div><div class="a" style="left:972px;top:553px;width:163px;height:17px;background:#0b959d;"></div><svg style="left:979.5px;top:554.74px;" width="14" height="13" viewBox="0 0 14 13"><rect x="0" y="0" width="14" height="13" fill="#2a2a2a" stroke="#686868" stroke-width="1"/><ellipse cx="4.4" cy="6.5" rx="2.8" ry="3.3" fill="#fff"/><ellipse cx="9.8" cy="6.5" rx="2.8" ry="3.3" fill="#fff"/><circle cx="5.2" cy="7.2" r="1.6" fill="#111"/><circle cx="10.6" cy="7.2" r="1.6" fill="#111"/></svg><div class="a" style="left:1000px;top:556.74px;width:9px;height:9px;background:#2e2e2e;border:1px solid #3a3a3a;"></div><svg style="left:1041.5px;top:555.24px;" width="12" height="12" viewBox="0 0 12 12"><path d="M1 6C1.6 3.2 4 4.6 6.2 2.6C8.6 0.6 11.2 2.2 10.4 5.4C9.6 8.8 5.8 10.6 3 9.8C1 9.2 0.6 7.4 1 6Z" fill="none" stroke="#e8e8e8" stroke-width="1.3" stroke-linecap="round" stroke-linejoin="round" /></svg><div class="t" style="left:1058.50px;top:555.94px;height:11px;line-height:11px;font-size:9px;color:#10262a;transform:scaleX(1.1499);transform-origin:0 0;">foreArm-L</div><div class="a" style="left:972px;top:570px;width:163px;height:16px;background:#3b3b3b;"></div><svg style="left:979.5px;top:571.46px;" width="14" height="13" viewBox="0 0 14 13"><rect x="0" y="0" width="14" height="13" fill="#2a2a2a" stroke="#686868" stroke-width="1"/><ellipse cx="4.4" cy="6.5" rx="2.8" ry="3.3" fill="#fff"/><ellipse cx="9.8" cy="6.5" rx="2.8" ry="3.3" fill="#fff"/><circle cx="5.2" cy="7.2" r="1.6" fill="#111"/><circle cx="10.6" cy="7.2" r="1.6" fill="#111"/></svg><div class="a" style="left:1000px;top:573.46px;width:9px;height:9px;background:#333;border:1px solid #3a3a3a;"></div><svg style="left:1041.5px;top:571.96px;" width="12" height="12" viewBox="0 0 12 12"><path d="M1 6C1.6 3.2 4 4.6 6.2 2.6C8.6 0.6 11.2 2.2 10.4 5.4C9.6 8.8 5.8 10.6 3 9.8C1 9.2 0.6 7.4 1 6Z" fill="none" stroke="#e8e8e8" stroke-width="1.3" stroke-linecap="round" stroke-linejoin="round" /></svg><div class="t" style="left:1058.50px;top:572.66px;height:11px;line-height:11px;font-size:9px;color:#e4e4e4;transform:scaleX(0.9617);transform-origin:0 0;">uppArm-L</div><div class="a" style="left:972px;top:586px;width:163px;height:17px;background:#4d4d4d;"></div><svg style="left:979.5px;top:588.18px;" width="14" height="13" viewBox="0 0 14 13"><rect x="0" y="0" width="14" height="13" fill="#2a2a2a" stroke="#686868" stroke-width="1"/><ellipse cx="4.4" cy="6.5" rx="2.8" ry="3.3" fill="#fff"/><ellipse cx="9.8" cy="6.5" rx="2.8" ry="3.3" fill="#fff"/><circle cx="5.2" cy="7.2" r="1.6" fill="#111"/><circle cx="10.6" cy="7.2" r="1.6" fill="#111"/></svg><div class="a" style="left:1000px;top:590.18px;width:9px;height:9px;background:#333;border:1px solid #3a3a3a;"></div><svg style="left:1041.5px;top:588.68px;" width="12" height="12" viewBox="0 0 12 12"><path d="M1 6C1.6 3.2 4 4.6 6.2 2.6C8.6 0.6 11.2 2.2 10.4 5.4C9.6 8.8 5.8 10.6 3 9.8C1 9.2 0.6 7.4 1 6Z" fill="none" stroke="#e8e8e8" stroke-width="1.3" stroke-linecap="round" stroke-linejoin="round" /></svg><div class="t" style="left:1058.50px;top:589.38px;height:11px;line-height:11px;font-size:9px;color:#e4e4e4;transform:scaleX(0.9639);transform-origin:0 0;">foreArm-R</div><div class="a" style="left:972px;top:603px;width:163px;height:17px;background:#3b3b3b;"></div><svg style="left:979.5px;top:604.9px;" width="14" height="13" viewBox="0 0 14 13"><rect x="0" y="0" width="14" height="13" fill="#2a2a2a" stroke="#686868" stroke-width="1"/><ellipse cx="4.4" cy="6.5" rx="2.8" ry="3.3" fill="#fff"/><ellipse cx="9.8" cy="6.5" rx="2.8" ry="3.3" fill="#fff"/><circle cx="5.2" cy="7.2" r="1.6" fill="#111"/><circle cx="10.6" cy="7.2" r="1.6" fill="#111"/></svg><div class="a" style="left:1000px;top:606.9px;width:9px;height:9px;background:#333;border:1px solid #3a3a3a;"></div><svg style="left:1041.5px;top:605.4px;" width="12" height="12" viewBox="0 0 12 12"><path d="M1 6C1.6 3.2 4 4.6 6.2 2.6C8.6 0.6 11.2 2.2 10.4 5.4C9.6 8.8 5.8 10.6 3 9.8C1 9.2 0.6 7.4 1 6Z" fill="none" stroke="#e8e8e8" stroke-width="1.3" stroke-linecap="round" stroke-linejoin="round" /></svg><div class="t" style="left:1058.50px;top:606.10px;height:11px;line-height:11px;font-size:9px;color:#e4e4e4;transform:scaleX(0.9510);transform-origin:0 0;">uppArm-R</div><div class="a" style="left:972px;top:620px;width:163px;height:16px;background:#4d4d4d;"></div><svg style="left:979.5px;top:621.62px;" width="14" height="13" viewBox="0 0 14 13"><rect x="0" y="0" width="14" height="13" fill="#2a2a2a" stroke="#686868" stroke-width="1"/><ellipse cx="4.4" cy="6.5" rx="2.8" ry="3.3" fill="#fff"/><ellipse cx="9.8" cy="6.5" rx="2.8" ry="3.3" fill="#fff"/><circle cx="5.2" cy="7.2" r="1.6" fill="#111"/><circle cx="10.6" cy="7.2" r="1.6" fill="#111"/></svg><div class="a" style="left:1000px;top:623.62px;width:9px;height:9px;background:#333;border:1px solid #3a3a3a;"></div><svg style="left:1041.5px;top:622.12px;" width="12" height="12" viewBox="0 0 12 12"><path d="M1 6C1.6 3.2 4 4.6 6.2 2.6C8.6 0.6 11.2 2.2 10.4 5.4C9.6 8.8 5.8 10.6 3 9.8C1 9.2 0.6 7.4 1 6Z" fill="none" stroke="#e8e8e8" stroke-width="1.3" stroke-linecap="round" stroke-linejoin="round" /></svg><div class="t" style="left:1058.50px;top:622.82px;height:11px;line-height:11px;font-size:9px;color:#e4e4e4;transform:scaleX(0.8932);transform-origin:0 0;">Chest</div><div class="a" style="left:972px;top:636px;width:163px;height:17px;background:#3b3b3b;"></div><svg style="left:979.5px;top:638.34px;" width="14" height="13" viewBox="0 0 14 13"><rect x="0" y="0" width="14" height="13" fill="#2a2a2a" stroke="#686868" stroke-width="1"/><ellipse cx="4.4" cy="6.5" rx="2.8" ry="3.3" fill="#fff"/><ellipse cx="9.8" cy="6.5" rx="2.8" ry="3.3" fill="#fff"/><circle cx="5.2" cy="7.2" r="1.6" fill="#111"/><circle cx="10.6" cy="7.2" r="1.6" fill="#111"/></svg><div class="a" style="left:1000px;top:640.34px;width:9px;height:9px;background:#333;border:1px solid #3a3a3a;"></div><svg style="left:1041.5px;top:638.84px;" width="12" height="12" viewBox="0 0 12 12"><path d="M1 6C1.6 3.2 4 4.6 6.2 2.6C8.6 0.6 11.2 2.2 10.4 5.4C9.6 8.8 5.8 10.6 3 9.8C1 9.2 0.6 7.4 1 6Z" fill="none" stroke="#e8e8e8" stroke-width="1.3" stroke-linecap="round" stroke-linejoin="round" /></svg><div class="t" style="left:1058.50px;top:639.54px;height:11px;line-height:11px;font-size:9px;color:#e4e4e4;transform:scaleX(0.9124);transform-origin:0 0;">Leg-L</div><div class="a" style="left:972px;top:653px;width:163px;height:17px;background:#4d4d4d;"></div><svg style="left:979.5px;top:655.06px;" width="14" height="13" viewBox="0 0 14 13"><rect x="0" y="0" width="14" height="13" fill="#2a2a2a" stroke="#686868" stroke-width="1"/><ellipse cx="4.4" cy="6.5" rx="2.8" ry="3.3" fill="#fff"/><ellipse cx="9.8" cy="6.5" rx="2.8" ry="3.3" fill="#fff"/><circle cx="5.2" cy="7.2" r="1.6" fill="#111"/><circle cx="10.6" cy="7.2" r="1.6" fill="#111"/></svg><div class="a" style="left:1000px;top:657.06px;width:9px;height:9px;background:#333;border:1px solid #3a3a3a;"></div><svg style="left:1041.5px;top:655.56px;" width="12" height="12" viewBox="0 0 12 12"><path d="M1 6C1.6 3.2 4 4.6 6.2 2.6C8.6 0.6 11.2 2.2 10.4 5.4C9.6 8.8 5.8 10.6 3 9.8C1 9.2 0.6 7.4 1 6Z" fill="none" stroke="#e8e8e8" stroke-width="1.3" stroke-linecap="round" stroke-linejoin="round" /></svg><div class="t" style="left:1058.50px;top:656.26px;height:11px;line-height:11px;font-size:9px;color:#e4e4e4;transform:scaleX(0.8976);transform-origin:0 0;">Leg-R</div><div class="a" style="left:972px;top:670px;width:163px;height:17px;background:#3b3b3b;"></div><div class="a" style="left:979.5px;top:671.78px;width:14px;height:13px;background:#5a5a5a;"></div><div class="a" style="left:1000px;top:673.78px;width:9px;height:9px;background:#333;border:1px solid #444;"></div><svg style="left:1031.5px;top:672.28px;" width="12" height="12" viewBox="0 0 12 12"><path d="M1 6C1.6 3.2 4 4.6 6.2 2.6C8.6 0.6 11.2 2.2 10.4 5.4C9.6 8.8 5.8 10.6 3 9.8C1 9.2 0.6 7.4 1 6Z" fill="none" stroke="#777" stroke-width="1.3" stroke-linecap="round" stroke-linejoin="round" /></svg><div class="t" style="left:1048.50px;top:672.98px;height:11px;line-height:11px;font-size:9px;color:#7d7d7d;transform:scaleX(0.8568);transform-origin:0 0;">Man</div><div class="a" style="left:972px;top:687px;width:163px;height:16px;background:#4d4d4d;"></div><div class="a" style="left:979.5px;top:688.5px;width:14px;height:13px;background:#5a5a5a;"></div><div class="a" style="left:1000px;top:690.5px;width:9px;height:9px;background:#333;border:1px solid #444;"></div><svg style="left:1031.5px;top:689px;" width="12" height="12" viewBox="0 0 12 12"><rect x="0.5" y="0.5" width="11" height="11" fill="#4d6e73"/><path d="M0.5 11.5V8L3.5 5L6.5 8L8.5 6.5L11.5 9V11.5Z" fill="#3f7f62"/><circle cx="3" cy="3" r="1" fill="#8a9a70"/></svg><div class="t" style="left:1048.50px;top:689.70px;height:11px;line-height:11px;font-size:9px;color:#7d7d7d;transform:scaleX(0.9506);transform-origin:0 0;">2-dansers-V1.png</div><div class="a" style="left:972px;top:703px;width:163px;height:17px;background:#3b3b3b;"></div><div class="a" style="left:979.5px;top:705.22px;width:14px;height:13px;background:#5a5a5a;"></div><div class="a" style="left:1000px;top:707.22px;width:9px;height:9px;background:#333;border:1px solid #444;"></div><svg style="left:1031.5px;top:705.72px;" width="12" height="12" viewBox="0 0 12 12"><path d="M1 6C1.6 3.2 4 4.6 6.2 2.6C8.6 0.6 11.2 2.2 10.4 5.4C9.6 8.8 5.8 10.6 3 9.8C1 9.2 0.6 7.4 1 6Z" fill="none" stroke="#777" stroke-width="1.3" stroke-linecap="round" stroke-linejoin="round" /></svg><div class="t" style="left:1048.50px;top:706.42px;height:11px;line-height:11px;font-size:9px;color:#7d7d7d;transform:scaleX(0.8995);transform-origin:0 0;">Layer 1</div>
<div class="a" style="left:0px;top:762px;width:968px;height:1px;background:#2b2b2b;"></div><div class="a" style="left:0px;top:763px;width:968px;height:17px;background:#4a4a4a;"></div><div class="a" style="left:0px;top:780px;width:968px;height:2px;background:#2b2b2b;"></div><div class="a" style="left:361px;top:765px;width:17px;height:13px;background:#3c3c3c;"></div><div class="a" style="left:380px;top:765px;width:17px;height:13px;background:#3c3c3c;"></div><div class="a" style="left:399px;top:765px;width:17px;height:13px;background:#3c3c3c;"></div><div class="a" style="left:418px;top:765px;width:17px;height:13px;background:#3c3c3c;"></div><div class="a" style="left:437px;top:765px;width:17px;height:13px;background:#3c3c3c;"></div><div class="a" style="left:456px;top:765px;width:17px;height:13px;background:#3c3c3c;"></div><div class="a" style="left:475px;top:765px;width:17px;height:13px;background:#3c3c3c;"></div><svg style="left:361px;top:765px;" width="17" height="13" viewBox="0 0 17 13"><circle cx="4.5" cy="6.5" r="2.4" fill="none" stroke="#6c6c6c" stroke-width="1.1"/><path d="M13.5 3L7.5 6.5L13.5 10Z" fill="none" stroke="#6c6c6c" stroke-width="1.1" stroke-linecap="round" stroke-linejoin="round" /></svg><svg style="left:380px;top:765px;" width="17" height="13" viewBox="0 0 17 13"><path d="M4 3V10" fill="none" stroke="#6c6c6c" stroke-width="1.2" stroke-linecap="round" stroke-linejoin="round" /><path d="M12 3L6 6.5L12 10Z" fill="none" stroke="#6c6c6c" stroke-width="1.1" stroke-linecap="round" stroke-linejoin="round" /></svg><svg style="left:399px;top:765px;" width="17" height="13" viewBox="0 0 17 13"><path d="M7.5 3L2.5 6.5L7.5 10Z" fill="none" stroke="#6c6c6c" stroke-width="1.1" stroke-linecap="round" stroke-linejoin="round" /><path d="M13.5 3L8.5 6.5L13.5 10Z" fill="none" stroke="#6c6c6c" stroke-width="1.1" stroke-linecap="round" stroke-linejoin="round" /></svg><svg style="left:418px;top:765px;" width="17" height="13" viewBox="0 0 17 13"><path d="M5.5 3L12.5 6.5L5.5 10Z" fill="none" stroke="#f0f0f0" stroke-width="1.1" stroke-linecap="round" stroke-linejoin="round" /></svg><svg style="left:437px;top:765px;" width="17" height="13" viewBox="0 0 17 13"><path d="M3 3L8 6.5L3 10Z" fill="none" stroke="#f0f0f0" stroke-width="1.1" stroke-linecap="round" stroke-linejoin="round" /><path d="M9 3L14 6.5L9 10Z" fill="none" stroke="#f0f0f0" stroke-width="1.1" stroke-linecap="round" stroke-linejoin="round" /></svg><svg style="left:456px;top:765px;" width="17" height="13" viewBox="0 0 17 13"><path d="M4 3L10 6.5L4 10Z" fill="none" stroke="#f0f0f0" stroke-width="1.1" stroke-linecap="round" stroke-linejoin="round" /><path d="M12.5 3V10" fill="none" stroke="#f0f0f0" stroke-width="1.3" stroke-linecap="round" stroke-linejoin="round" /></svg><svg style="left:475px;top:765px;" width="17" height="13" viewBox="0 0 17 13"><path d="M3 3L9 6.5L3 10Z" fill="none" stroke="#f0f0f0" stroke-width="1.1" stroke-linecap="round" stroke-linejoin="round" /><circle cx="12" cy="6.5" r="2.4" fill="none" stroke="#f0f0f0" stroke-width="1.1"/></svg><div class="t" style="left:501.00px;top:766.00px;height:11px;line-height:11px;font-size:9px;color:#e6e6e6;transform:scaleX(0.8461);transform-origin:0 0;">Frame</div><div class="a" style="left:528px;top:766px;width:55px;height:11px;background:#ececec;"></div><div class="t" style="left:530.00px;top:766.00px;height:11px;line-height:11px;font-size:9px;color:#222;">0</div><div class="t" style="left:588.00px;top:766.00px;height:11px;line-height:11px;font-size:9px;color:#e6e6e6;transform:scaleX(0.9327);transform-origin:0 0;">of</div><div class="a" style="left:599px;top:766px;width:55px;height:11px;background:#ececec;"></div><div class="t" style="left:601.00px;top:766.00px;height:11px;line-height:11px;font-size:9px;color:#222;transform:scaleX(0.9324);transform-origin:0 0;">240</div><div class="a" style="left:665px;top:765px;width:18px;height:13px;background:#3c3c3c;"></div><svg style="left:667px;top:766px;" width="14" height="11" viewBox="0 0 14 11"><path d="M1.5 4H3.5L6.5 1.5V9.5L3.5 7H1.5Z" fill="none" stroke="#e4e4e4" stroke-width="1" stroke-linecap="round" stroke-linejoin="round" /><path d="M8.5 3.5C9.5 4.5 9.5 6.5 8.5 7.5M10.5 2C12.3 4 12.3 7 10.5 9" fill="none" stroke="#e4e4e4" stroke-width="1" stroke-linecap="round" stroke-linejoin="round" /></svg><div class="a" style="left:802px;top:765px;width:11px;height:12px;background:#4a4a4a;border:1px solid #128a92;"></div><svg style="left:815px;top:765px;" width="11" height="12" viewBox="0 0 11 12"><rect x="0.5" y="0.5" width="10" height="11" fill="#b4b0a9" stroke="#e0e0e0" stroke-width="0.9" /><path d="M4 0.5V11.5M7 0.5V11.5" fill="none" stroke="#d8d8d8" stroke-width="0.9" stroke-linecap="round" stroke-linejoin="round" /></svg><svg style="left:828px;top:765px;" width="11" height="12" viewBox="0 0 11 12"><rect x="0.5" y="0.5" width="10" height="11" fill="#b4b0a9" stroke="#e0e0e0" stroke-width="0.9" /><path d="M0.5 4.5H10.5M0.5 8H10.5" fill="none" stroke="#d8d8d8" stroke-width="0.9" stroke-linecap="round" stroke-linejoin="round" /></svg><svg style="left:841px;top:765px;" width="11" height="12" viewBox="0 0 11 12"><rect x="0.5" y="0.5" width="10" height="11" fill="#b4b0a9" stroke="#e0e0e0" stroke-width="0.9" /><path d="M5.5 0.5V11.5M0.5 6H10.5" fill="none" stroke="#d8d8d8" stroke-width="0.9" stroke-linecap="round" stroke-linejoin="round" /></svg><div class="a" style="left:860px;top:765px;width:10px;height:12px;background:#303030;"></div><svg style="left:860px;top:765px;" width="11" height="12" viewBox="0 0 11 12"><path d="M2.4 5.4L4.8 9.2L8.4 2.6" fill="none" stroke="#19b4be" stroke-width="1.8"/></svg><svg style="left:873px;top:765px;" width="13" height="13" viewBox="0 0 13 13"><rect x="2.5" y="2.5" width="8" height="8" fill="none" stroke="#e4e4e4" stroke-width="1.1" /><rect x="1" y="1" width="2.4" height="2.4" fill="#e4e4e4" stroke="none" stroke-width="1.2" /><rect x="1" y="9.5" width="2.4" height="2.4" fill="#e4e4e4" stroke="none" stroke-width="1.2" /><rect x="9.5" y="9.5" width="2.4" height="2.4" fill="#e4e4e4" stroke="none" stroke-width="1.2" /><rect x="9.3" y="0.6" width="3" height="3" fill="#16a2aa" stroke="none" stroke-width="1.2" /></svg><div class="a" style="left:889px;top:764px;width:79px;height:15px;background:#3a3a3a;border:1px solid #303030;"></div><div class="t" style="left:894.50px;top:766.00px;height:11px;line-height:11px;font-size:9px;color:#e6e6e6;transform:scaleX(0.9164);transform-origin:0 0;">Display Quality</div><svg style="left:957.5px;top:768.5px;" width="6" height="6" viewBox="0 0 6 6"><path d="M0.2 0.4H5.8L3 5.8Z" fill="#8e8e8e"/></svg>
<div class="a" style="left:0px;top:782px;width:968px;height:77px;background:#4a4a4a;"></div><div class="a" style="left:0px;top:782px;width:27px;height:77px;background:#474747;"></div><div class="a" style="left:27px;top:782px;width:1px;height:77px;background:#2b2b2b;"></div><div class="a" style="left:2px;top:804px;width:11px;height:11px;background:#343434;"></div><svg style="left:2px;top:804px;" width="11" height="11" viewBox="0 0 11 11"><path d="M2.5 8.5L8.5 2.5M5.5 2.5H8.5V5.5M2.5 5.5V8.5H5.5" fill="none" stroke="#16a2aa" stroke-width="1" stroke-linecap="round" stroke-linejoin="round" /></svg><div class="a" style="left:41px;top:785.5px;width:50.5px;height:14.5px;background:#5a5a5a;"></div><div class="t" style="left:46.00px;top:786.50px;height:13px;line-height:13px;font-size:11px;color:#f0f0f0;transform:scaleX(0.8607);transform-origin:0 0;">Channels</div><div class="a" style="left:92.5px;top:785.5px;width:54.5px;height:14.5px;background:#3b3b3b;"></div><div class="t" style="left:97.00px;top:786.50px;height:13px;line-height:13px;font-size:11px;color:#f0f0f0;transform:scaleX(0.8458);transform-origin:0 0;">Sequencer</div><div class="a" style="left:148px;top:785.5px;width:70px;height:14.5px;background:#3b3b3b;"></div><div class="t" style="left:153.00px;top:786.50px;height:13px;line-height:13px;font-size:11px;color:#f0f0f0;transform:scaleX(0.9004);transform-origin:0 0;">Motion Graph</div><div class="a" style="left:245px;top:785.5px;width:74px;height:13px;background:#3c3c3c;border:1px solid #303030;"></div><div class="t" style="left:260.50px;top:786.50px;height:11px;line-height:11px;font-size:9px;color:#e6e6e6;transform:scaleX(0.9028);transform-origin:0 0;">Smooth</div><svg style="left:308.5px;top:789px;" width="6" height="6" viewBox="0 0 6 6"><path d="M0.2 0.4H5.8L3 5.8Z" fill="#8e8e8e"/></svg><div class="a" style="left:322px;top:785.5px;width:30px;height:13px;background:#3c3c3c;border:1px solid #303030;"></div><div class="t" style="left:327.50px;top:786.50px;height:11px;line-height:11px;font-size:9px;color:#e6e6e6;">1</div><svg style="left:341.5px;top:789px;" width="6" height="6" viewBox="0 0 6 6"><path d="M0.2 0.4H5.8L3 5.8Z" fill="#8e8e8e"/></svg><div class="a" style="left:356px;top:785px;width:16px;height:14px;background:#3c3c3c;"></div><svg style="left:357px;top:785.5px;" width="14" height="13" viewBox="0 0 14 13"><circle cx="8" cy="5.5" r="3.6" fill="none" stroke="#16a2aa" stroke-width="1.3"/><circle cx="6" cy="7.5" r="3.6" fill="none" stroke="#0f6c72" stroke-width="1.1"/></svg><div class="a" style="left:375px;top:785.5px;width:66px;height:13px;background:#3c3c3c;border:1px solid #303030;"></div><div class="t" style="left:380.00px;top:786.50px;height:11px;line-height:11px;font-size:9px;color:#7a7a7a;transform:scaleX(0.9068);transform-origin:0 0;">Onion Skins</div><svg style="left:430.5px;top:789px;" width="6" height="6" viewBox="0 0 6 6"><path d="M0.2 0.4H5.8L3 5.8Z" fill="#8e8e8e"/></svg><div class="a" style="left:447px;top:787px;width:9px;height:10px;background:#393939;border:1px solid #333;"></div><div class="t" style="left:459.50px;top:786.50px;height:11px;line-height:11px;font-size:9px;color:#e6e6e6;transform:scaleX(0.9111);transform-origin:0 0;">Relative keyframing</div><div class="a" style="left:538px;top:785px;width:16px;height:14px;background:#3c3c3c;"></div><svg style="left:540px;top:786px;" width="12" height="12" viewBox="0 0 12 12"><path d="M2.5 2.5H9.5V6.5C9.5 8.5 7.5 10 6 10.5C4.5 10 2.5 8.5 2.5 6.5Z" fill="none" stroke="#16a2aa" stroke-width="1.2" stroke-linecap="round" stroke-linejoin="round" /></svg><div class="a" style="left:560px;top:787px;width:9px;height:10px;background:#393939;border:1px solid #333;"></div><div class="t" style="left:572.50px;top:786.50px;height:11px;line-height:11px;font-size:9px;color:#e6e6e6;transform:scaleX(0.9330);transform-origin:0 0;">Auto-freeze keys</div><div class="a" style="left:929px;top:785px;width:16px;height:14px;background:#3c3c3c;"></div><svg style="left:930px;top:786px;" width="14" height="12" viewBox="0 0 14 12"><path d="M3 9L7 3.5L11 9Z" fill="none" stroke="#16a2aa" stroke-width="1.2" stroke-linecap="round" stroke-linejoin="round" /></svg><div class="a" style="left:948px;top:785px;width:17px;height:14px;background:#3c3c3c;"></div><svg style="left:949px;top:786px;" width="15" height="12" viewBox="0 0 15 12"><path d="M1.5 4V8.5H13.5V4M3.5 5.5H11.5" fill="none" stroke="#16a2aa" stroke-width="1.1" stroke-linecap="round" stroke-linejoin="round" /><path d="M1.5 4L3.5 5.5M13.5 4L11.5 5.5" fill="none" stroke="#16a2aa" stroke-width="1" stroke-linecap="round" stroke-linejoin="round" /></svg><div class="a" style="left:28px;top:801px;width:927px;height:11px;background:#454545;"></div><div class="a" style="left:40px;top:801px;width:915px;height:10.5px;background:#1f6e73;"></div><svg style="left:40px;top:801px;" width="915" height="11" viewBox="0 0 915 11"><rect x="-0.27" y="8.5" width="0.9" height="2" fill="#1c2c2e"/><rect x="5.81" y="8.5" width="0.9" height="2" fill="#1c2c2e"/><rect x="11.89" y="8.5" width="0.9" height="2" fill="#1c2c2e"/><rect x="17.97" y="8.5" width="0.9" height="2" fill="#1c2c2e"/><rect x="24.05" y="8.5" width="0.9" height="2" fill="#1c2c2e"/><rect x="30.13" y="7.5" width="0.9" height="3" fill="#1c2c2e"/><rect x="36.21" y="8.5" width="0.9" height="2" fill="#1c2c2e"/><rect x="42.29" y="8.5" width="0.9" height="2" fill="#1c2c2e"/><rect x="48.37" y="8.5" width="0.9" height="2" fill="#1c2c2e"/><rect x="54.45" y="8.5" width="0.9" height="2" fill="#1c2c2e"/><rect x="60.53" y="8.5" width="0.9" height="2" fill="#1c2c2e"/><rect x="66.61" y="7.5" width="0.9" height="3" fill="#1c2c2e"/><rect x="72.69" y="8.5" width="0.9" height="2" fill="#1c2c2e"/><rect x="78.77" y="8.5" width="0.9" height="2" fill="#1c2c2e"/><rect x="84.85" y="8.5" width="0.9" height="2" fill="#1c2c2e"/><rect x="90.93" y="8.5" width="0.9" height="2" fill="#1c2c2e"/><rect x="97.01" y="8.5" width="0.9" height="2" fill="#1c2c2e"/><rect x="103.09" y="7.5" width="0.9" height="3" fill="#1c2c2e"/><rect x="109.17" y="8.5" width="0.9" height="2" fill="#1c2c2e"/><rect x="115.25" y="8.5" width="0.9" height="2" fill="#1c2c2e"/><rect x="121.33" y="8.5" width="0.9" height="2" fill="#1c2c2e"/><rect x="127.41" y="8.5" width="0.9" height="2" fill="#1c2c2e"/><rect x="133.49" y="8.5" width="0.9" height="2" fill="#1c2c2e"/><rect x="139.57" y="7.5" width="0.9" height="3" fill="#1c2c2e"/><rect x="145.65" y="8.5" width="0.9" height="2" fill="#1c2c2e"/><rect x="151.73" y="8.5" width="0.9" height="2" fill="#1c2c2e"/><rect x="157.81" y="8.5" width="0.9" height="2" fill="#1c2c2e"/><rect x="163.89" y="8.5" width="0.9" height="2" fill="#1c2c2e"/><rect x="169.97" y="8.5" width="0.9" height="2" fill="#1c2c2e"/><rect x="176.05" y="7.5" width="0.9" height="3" fill="#1c2c2e"/><rect x="182.13" y="8.5" width="0.9" height="2" fill="#1c2c2e"/><rect x="188.21" y="8.5" width="0.9" height="2" fill="#1c2c2e"/><rect x="194.29" y="8.5" width="0.9" height="2" fill="#1c2c2e"/><rect x="200.37" y="8.5" width="0.9" height="2" fill="#1c2c2e"/><rect x="206.45" y="8.5" width="0.9" height="2" fill="#1c2c2e"/><rect x="212.53" y="7.5" width="0.9" height="3" fill="#1c2c2e"/><rect x="218.61" y="8.5" width="0.9" height="2" fill="#1c2c2e"/><rect x="224.69" y="8.5" width="0.9" height="2" fill="#1c2c2e"/><rect x="230.77" y="8.5" width="0.9" height="2" fill="#1c2c2e"/><rect x="236.85" y="8.5" width="0.9" height="2" fill="#1c2c2e"/><rect x="242.93" y="8.5" width="0.9" height="2" fill="#1c2c2e"/><rect x="249.01" y="7.5" width="0.9" height="3" fill="#1c2c2e"/><rect x="255.09" y="8.5" width="0.9" height="2" fill="#1c2c2e"/><rect x="261.17" y="8.5" width="0.9" height="2" fill="#1c2c2e"/><rect x="267.25" y="8.5" width="0.9" height="2" fill="#1c2c2e"/><rect x="273.33" y="8.5" width="0.9" height="2" fill="#1c2c2e"/><rect x="279.41" y="8.5" width="0.9" height="2" fill="#1c2c2e"/><rect x="285.49" y="7.5" width="0.9" height="3" fill="#1c2c2e"/><rect x="291.57" y="8.5" width="0.9" height="2" fill="#1c2c2e"/><rect x="297.65" y="8.5" width="0.9" height="2" fill="#1c2c2e"/><rect x="303.73" y="8.5" width="0.9" height="2" fill="#1c2c2e"/><rect x="309.81" y="8.5" width="0.9" height="2" fill="#1c2c2e"/><rect x="315.89" y="8.5" width="0.9" height="2" fill="#1c2c2e"/><rect x="321.97" y="7.5" width="0.9" height="3" fill="#1c2c2e"/><rect x="328.05" y="8.5" width="0.9" height="2" fill="#1c2c2e"/><rect x="334.13" y="8.5" width="0.9" height="2" fill="#1c2c2e"/><rect x="340.21" y="8.5" width="0.9" height="2" fill="#1c2c2e"/><rect x="346.29" y="8.5" width="0.9" height="2" fill="#1c2c2e"/><rect x="352.37" y="8.5" width="0.9" height="2" fill="#1c2c2e"/><rect x="358.45" y="7.5" width="0.9" height="3" fill="#1c2c2e"/><rect x="364.53" y="8.5" width="0.9" height="2" fill="#1c2c2e"/><rect x="370.61" y="8.5" width="0.9" height="2" fill="#1c2c2e"/><rect x="376.69" y="8.5" width="0.9" height="2" fill="#1c2c2e"/><rect x="382.77" y="8.5" width="0.9" height="2" fill="#1c2c2e"/><rect x="388.85" y="8.5" width="0.9" height="2" fill="#1c2c2e"/><rect x="394.93" y="7.5" width="0.9" height="3" fill="#1c2c2e"/><rect x="401.01" y="8.5" width="0.9" height="2" fill="#1c2c2e"/><rect x="407.09" y="8.5" width="0.9" height="2" fill="#1c2c2e"/><rect x="413.17" y="8.5" width="0.9" height="2" fill="#1c2c2e"/><rect x="419.25" y="8.5" width="0.9" height="2" fill="#1c2c2e"/><rect x="425.33" y="8.5" width="0.9" height="2" fill="#1c2c2e"/><rect x="431.41" y="7.5" width="0.9" height="3" fill="#1c2c2e"/><rect x="437.49" y="8.5" width="0.9" height="2" fill="#1c2c2e"/><rect x="443.57" y="8.5" width="0.9" height="2" fill="#1c2c2e"/><rect x="449.65" y="8.5" width="0.9" height="2" fill="#1c2c2e"/><rect x="455.73" y="8.5" width="0.9" height="2" fill="#1c2c2e"/><rect x="461.81" y="8.5" width="0.9" height="2" fill="#1c2c2e"/><rect x="467.89" y="7.5" width="0.9" height="3" fill="#1c2c2e"/><rect x="473.97" y="8.5" width="0.9" height="2" fill="#1c2c2e"/><rect x="480.05" y="8.5" width="0.9" height="2" fill="#1c2c2e"/><rect x="486.13" y="8.5" width="0.9" height="2" fill="#1c2c2e"/><rect x="492.21" y="8.5" width="0.9" height="2" fill="#1c2c2e"/><rect x="498.29" y="8.5" width="0.9" height="2" fill="#1c2c2e"/><rect x="504.37" y="7.5" width="0.9" height="3" fill="#1c2c2e"/><rect x="510.45" y="8.5" width="0.9" height="2" fill="#1c2c2e"/><rect x="516.53" y="8.5" width="0.9" height="2" fill="#1c2c2e"/><rect x="522.61" y="8.5" width="0.9" height="2" fill="#1c2c2e"/><rect x="528.69" y="8.5" width="0.9" height="2" fill="#1c2c2e"/><rect x="534.77" y="8.5" width="0.9" height="2" fill="#1c2c2e"/><rect x="540.85" y="7.5" width="0.9" height="3" fill="#1c2c2e"/><rect x="546.93" y="8.5" width="0.9" height="2" fill="#1c2c2e"/><rect x="553.01" y="8.5" width="0.9" height="2" fill="#1c2c2e"/><rect x="559.09" y="8.5" width="0.9" height="2" fill="#1c2c2e"/><rect x="565.17" y="8.5" width="0.9" height="2" fill="#1c2c2e"/><rect x="571.25" y="8.5" width="0.9" height="2" fill="#1c2c2e"/><rect x="577.33" y="7.5" width="0.9" height="3" fill="#1c2c2e"/><rect x="583.41" y="8.5" width="0.9" height="2" fill="#1c2c2e"/><rect x="589.49" y="8.5" width="0.9" height="2" fill="#1c2c2e"/><rect x="595.57" y="8.5" width="0.9" height="2" fill="#1c2c2e"/><rect x="601.65" y="8.5" width="0.9" height="2" fill="#1c2c2e"/><rect x="607.73" y="8.5" width="0.9" height="2" fill="#1c2c2e"/><rect x="613.81" y="7.5" width="0.9" height="3" fill="#1c2c2e"/><rect x="619.89" y="8.5" width="0.9" height="2" fill="#1c2c2e"/><rect x="625.97" y="8.5" width="0.9" height="2" fill="#1c2c2e"/><rect x="632.05" y="8.5" width="0.9" height="2" fill="#1c2c2e"/><rect x="638.13" y="8.5" width="0.9" height="2" fill="#1c2c2e"/><rect x="644.21" y="8.5" width="0.9" height="2" fill="#1c2c2e"/><rect x="650.29" y="7.5" width="0.9" height="3" fill="#1c2c2e"/><rect x="656.37" y="8.5" width="0.9" height="2" fill="#1c2c2e"/><rect x="662.45" y="8.5" width="0.9" height="2" fill="#1c2c2e"/><rect x="668.53" y="8.5" width="0.9" height="2" fill="#1c2c2e"/><rect x="674.61" y="8.5" width="0.9" height="2" fill="#1c2c2e"/><rect x="680.69" y="8.5" width="0.9" height="2" fill="#1c2c2e"/><rect x="686.77" y="7.5" width="0.9" height="3" fill="#1c2c2e"/><rect x="692.85" y="8.5" width="0.9" height="2" fill="#1c2c2e"/><rect x="698.93" y="8.5" width="0.9" height="2" fill="#1c2c2e"/><rect x="705.01" y="8.5" width="0.9" height="2" fill="#1c2c2e"/><rect x="711.09" y="8.5" width="0.9" height="2" fill="#1c2c2e"/><rect x="717.17" y="8.5" width="0.9" height="2" fill="#1c2c2e"/><rect x="723.25" y="7.5" width="0.9" height="3" fill="#1c2c2e"/><rect x="729.33" y="8.5" width="0.9" height="2" fill="#1c2c2e"/><rect x="735.41" y="8.5" width="0.9" height="2" fill="#1c2c2e"/><rect x="741.49" y="8.5" width="0.9" height="2" fill="#1c2c2e"/><rect x="747.57" y="8.5" width="0.9" height="2" fill="#1c2c2e"/><rect x="753.65" y="8.5" width="0.9" height="2" fill="#1c2c2e"/><rect x="759.73" y="7.5" width="0.9" height="3" fill="#1c2c2e"/><rect x="765.81" y="8.5" width="0.9" height="2" fill="#1c2c2e"/><rect x="771.89" y="8.5" width="0.9" height="2" fill="#1c2c2e"/><rect x="777.97" y="8.5" width="0.9" height="2" fill="#1c2c2e"/><rect x="784.05" y="8.5" width="0.9" height="2" fill="#1c2c2e"/><rect x="790.13" y="8.5" width="0.9" height="2" fill="#1c2c2e"/><rect x="796.21" y="7.5" width="0.9" height="3" fill="#1c2c2e"/><rect x="802.29" y="8.5" width="0.9" height="2" fill="#1c2c2e"/><rect x="808.37" y="8.5" width="0.9" height="2" fill="#1c2c2e"/><rect x="814.45" y="8.5" width="0.9" height="2" fill="#1c2c2e"/><rect x="820.53" y="8.5" width="0.9" height="2" fill="#1c2c2e"/><rect x="826.61" y="8.5" width="0.9" height="2" fill="#1c2c2e"/><rect x="832.69" y="7.5" width="0.9" height="3" fill="#1c2c2e"/><rect x="838.77" y="8.5" width="0.9" height="2" fill="#1c2c2e"/><rect x="844.85" y="8.5" width="0.9" height="2" fill="#1c2c2e"/><rect x="850.93" y="8.5" width="0.9" height="2" fill="#1c2c2e"/><rect x="857.01" y="8.5" width="0.9" height="2" fill="#1c2c2e"/><rect x="863.09" y="8.5" width="0.9" height="2" fill="#1c2c2e"/><rect x="869.17" y="7.5" width="0.9" height="3" fill="#1c2c2e"/><rect x="875.25" y="8.5" width="0.9" height="2" fill="#1c2c2e"/><rect x="881.33" y="8.5" width="0.9" height="2" fill="#1c2c2e"/><rect x="887.41" y="8.5" width="0.9" height="2" fill="#1c2c2e"/><rect x="893.49" y="8.5" width="0.9" height="2" fill="#1c2c2e"/><rect x="899.57" y="8.5" width="0.9" height="2" fill="#1c2c2e"/><rect x="905.65" y="7.5" width="0.9" height="3" fill="#1c2c2e"/><rect x="911.73" y="8.5" width="0.9" height="2" fill="#1c2c2e"/></svg><div class="t" style="left:68.28px;top:800.50px;height:11px;line-height:11px;font-size:9px;color:#eaf4f4;transform:scaleX(0.9200);transform-origin:0 0;">6</div><div class="t" style="left:102.46px;top:800.50px;height:11px;line-height:11px;font-size:9px;color:#eaf4f4;transform:scaleX(0.9200);transform-origin:0 0;">12</div><div class="t" style="left:138.94px;top:800.50px;height:11px;line-height:11px;font-size:9px;color:#eaf4f4;transform:scaleX(0.9200);transform-origin:0 0;">18</div><div class="t" style="left:175.42px;top:800.50px;height:11px;line-height:11px;font-size:9px;color:#eaf4f4;transform:scaleX(0.9200);transform-origin:0 0;">24</div><div class="t" style="left:211.90px;top:800.50px;height:11px;line-height:11px;font-size:9px;color:#eaf4f4;transform:scaleX(0.9200);transform-origin:0 0;">30</div><div class="t" style="left:248.38px;top:800.50px;height:11px;line-height:11px;font-size:9px;color:#eaf4f4;transform:scaleX(0.9200);transform-origin:0 0;">36</div><div class="t" style="left:284.86px;top:800.50px;height:11px;line-height:11px;font-size:9px;color:#eaf4f4;transform:scaleX(0.9200);transform-origin:0 0;">42</div><div class="t" style="left:321.34px;top:800.50px;height:11px;line-height:11px;font-size:9px;color:#eaf4f4;transform:scaleX(0.9200);transform-origin:0 0;">48</div><div class="t" style="left:357.82px;top:800.50px;height:11px;line-height:11px;font-size:9px;color:#eaf4f4;transform:scaleX(0.9200);transform-origin:0 0;">54</div><div class="t" style="left:394.30px;top:800.50px;height:11px;line-height:11px;font-size:9px;color:#eaf4f4;transform:scaleX(0.9200);transform-origin:0 0;">60</div><div class="t" style="left:430.78px;top:800.50px;height:11px;line-height:11px;font-size:9px;color:#eaf4f4;transform:scaleX(0.9200);transform-origin:0 0;">66</div><div class="t" style="left:467.26px;top:800.50px;height:11px;line-height:11px;font-size:9px;color:#eaf4f4;transform:scaleX(0.9200);transform-origin:0 0;">72</div><div class="t" style="left:503.74px;top:800.50px;height:11px;line-height:11px;font-size:9px;color:#eaf4f4;transform:scaleX(0.9200);transform-origin:0 0;">78</div><div class="t" style="left:540.22px;top:800.50px;height:11px;line-height:11px;font-size:9px;color:#eaf4f4;transform:scaleX(0.9200);transform-origin:0 0;">84</div><div class="t" style="left:576.70px;top:800.50px;height:11px;line-height:11px;font-size:9px;color:#eaf4f4;transform:scaleX(0.9200);transform-origin:0 0;">90</div><div class="t" style="left:613.18px;top:800.50px;height:11px;line-height:11px;font-size:9px;color:#eaf4f4;transform:scaleX(0.9200);transform-origin:0 0;">96</div><div class="t" style="left:647.35px;top:800.50px;height:11px;line-height:11px;font-size:9px;color:#eaf4f4;transform:scaleX(0.9200);transform-origin:0 0;">102</div><div class="t" style="left:683.83px;top:800.50px;height:11px;line-height:11px;font-size:9px;color:#eaf4f4;transform:scaleX(0.9200);transform-origin:0 0;">108</div><div class="t" style="left:720.62px;top:800.50px;height:11px;line-height:11px;font-size:9px;color:#eaf4f4;transform:scaleX(0.9200);transform-origin:0 0;">114</div><div class="t" style="left:756.79px;top:800.50px;height:11px;line-height:11px;font-size:9px;color:#eaf4f4;transform:scaleX(0.9200);transform-origin:0 0;">120</div><div class="t" style="left:793.27px;top:800.50px;height:11px;line-height:11px;font-size:9px;color:#eaf4f4;transform:scaleX(0.9200);transform-origin:0 0;">126</div><div class="t" style="left:829.75px;top:800.50px;height:11px;line-height:11px;font-size:9px;color:#eaf4f4;transform:scaleX(0.9200);transform-origin:0 0;">132</div><div class="t" style="left:866.23px;top:800.50px;height:11px;line-height:11px;font-size:9px;color:#eaf4f4;transform:scaleX(0.9200);transform-origin:0 0;">138</div><div class="t" style="left:902.71px;top:800.50px;height:11px;line-height:11px;font-size:9px;color:#eaf4f4;transform:scaleX(0.9200);transform-origin:0 0;">144</div><div class="t" style="left:939.19px;top:800.50px;height:11px;line-height:11px;font-size:9px;color:#eaf4f4;transform:scaleX(0.9200);transform-origin:0 0;">150</div><div class="t" style="left:31.25px;top:800.00px;height:11px;line-height:11px;font-size:9px;color:#2aa6ae;transform:scaleX(0.8991);transform-origin:0 0;">0</div><svg style="left:40px;top:801px;" width="12" height="11" viewBox="0 0 12 11"><path d="M0 0L11.5 5L0 10Z" fill="#14a01c"/></svg><div class="a" style="left:28px;top:812px;width:927px;height:12px;background:#3a3a3a;"></div><div class="a" style="left:28px;top:824px;width:927px;height:22px;background:#484848;"></div><div class="t" style="left:31.85px;top:824.00px;height:11px;line-height:11px;font-size:9px;color:#8a8a8a;transform:scaleX(0.8991);transform-origin:0 0;">0</div><div class="t" style="left:177.77px;top:824.00px;height:11px;line-height:11px;font-size:9px;color:#8a8a8a;transform:scaleX(0.8991);transform-origin:0 0;">1</div><div class="a" style="left:179.32px;top:834px;width:1.4px;height:12px;background:#d8d8d8;"></div><div class="t" style="left:323.69px;top:824.00px;height:11px;line-height:11px;font-size:9px;color:#8a8a8a;transform:scaleX(0.8991);transform-origin:0 0;">2</div><div class="a" style="left:325.24px;top:834px;width:1.4px;height:12px;background:#d8d8d8;"></div><div class="t" style="left:469.61px;top:824.00px;height:11px;line-height:11px;font-size:9px;color:#8a8a8a;transform:scaleX(0.8991);transform-origin:0 0;">3</div><div class="a" style="left:471.16px;top:834px;width:1.4px;height:12px;background:#d8d8d8;"></div><div class="t" style="left:615.53px;top:824.00px;height:11px;line-height:11px;font-size:9px;color:#8a8a8a;transform:scaleX(0.8991);transform-origin:0 0;">4</div><div class="a" style="left:617.08px;top:834px;width:1.4px;height:12px;background:#d8d8d8;"></div><div class="t" style="left:761.45px;top:824.00px;height:11px;line-height:11px;font-size:9px;color:#8a8a8a;transform:scaleX(0.8991);transform-origin:0 0;">5</div><div class="a" style="left:763px;top:834px;width:1.4px;height:12px;background:#d8d8d8;"></div><div class="t" style="left:907.37px;top:824.00px;height:11px;line-height:11px;font-size:9px;color:#8a8a8a;transform:scaleX(0.8991);transform-origin:0 0;">6</div><div class="a" style="left:908.92px;top:834px;width:1.4px;height:12px;background:#d8d8d8;"></div><svg style="left:29px;top:801px;" width="10" height="46" viewBox="0 0 10 46"><path d="M2.5 8.5H7.5L5 11.5Z" fill="#1b9aa2"/><path d="M5 9V45" stroke="#1b9aa2" stroke-width="1.2"/><path d="M2 8.5H8" stroke="#1b9aa2" stroke-width="1"/></svg><div class="a" style="left:955px;top:801px;width:13px;height:45px;background:#404040;"></div><div class="a" style="left:955px;top:801px;width:1px;height:45px;background:#333;"></div><svg style="left:958px;top:803px;" width="8" height="8" viewBox="0 0 8 8"><path d="M0.5 7H7.5L4 0.5Z" fill="#a0a0a0"/></svg><svg style="left:958px;top:835px;" width="8" height="8" viewBox="0 0 8 8"><path d="M0.5 1H7.5L4 7.5Z" fill="#a0a0a0"/></svg><div class="a" style="left:28px;top:846px;width:940px;height:13px;background:#3d3d3d;"></div><div class="a" style="left:28px;top:846px;width:11px;height:12px;background:#484848;"></div><svg style="left:30px;top:849px;" width="7" height="7" viewBox="0 0 7 7"><path d="M6.5 0.3V6.7L0.5 3.5Z" fill="#c0c0c0"/></svg><div class="a" style="left:40px;top:847px;width:22px;height:11px;background:#4e4e4e;"></div><svg style="left:946px;top:849px;" width="7" height="7" viewBox="0 0 7 7"><path d="M0.5 0.3V6.7L6.5 3.5Z" fill="#a0a0a0"/></svg><div class="a" style="left:955px;top:846px;width:13px;height:13px;background:#4a4a4a;"></div><div class="a" style="left:968px;top:34px;width:6px;height:825px;background:#2d2d2d;"></div><div class="a" style="left:971px;top:34px;width:1.3px;height:825px;background:#3b3b3b;"></div>
</body></html>
